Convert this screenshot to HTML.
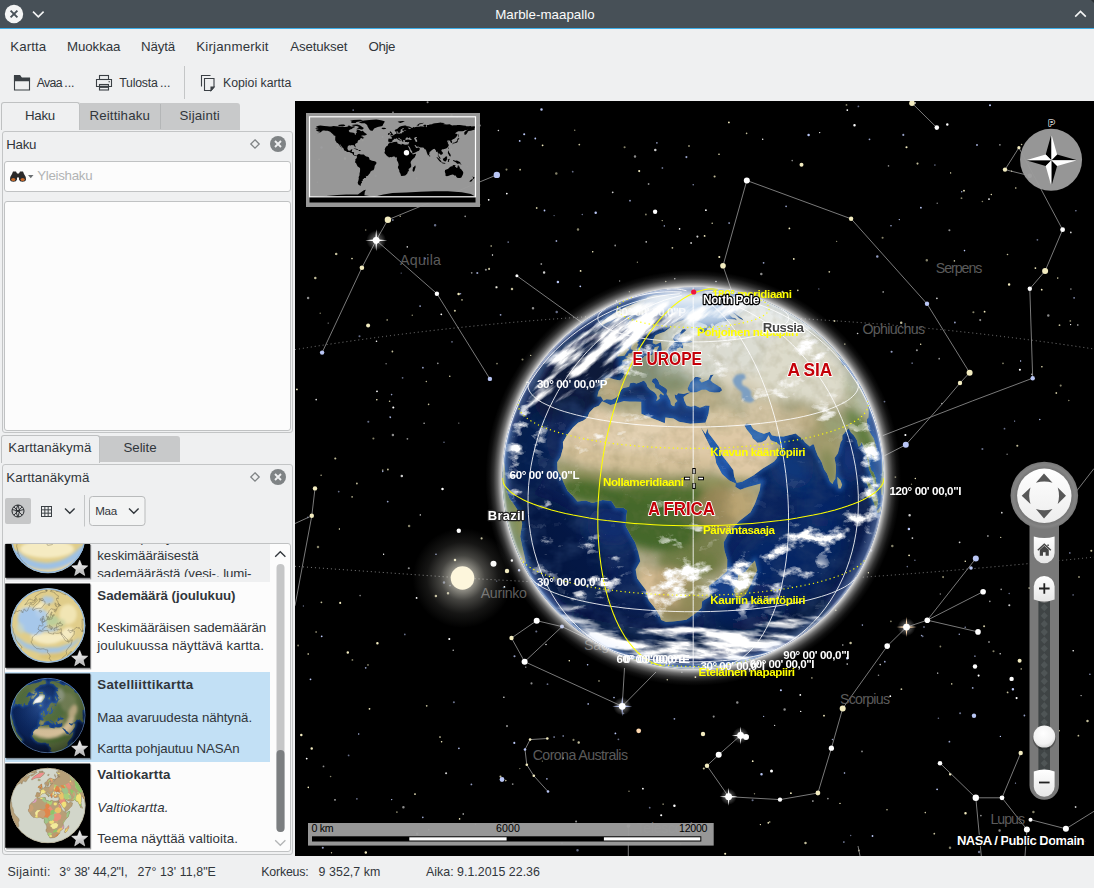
<!DOCTYPE html>
<html><head><meta charset="utf-8"><title>Marble-maapallo</title>
<style>
html,body{margin:0;padding:0}
body{width:1094px;height:888px;position:relative;overflow:hidden;background:#eff0f1;font-family:"Liberation Sans",sans-serif}
.t{position:absolute;white-space:pre;line-height:1;font-family:"Liberation Sans",sans-serif}
svg{display:block}
svg text{font-family:"Liberation Sans",sans-serif}
</style></head><body>
<div style="position:absolute;left:0;top:0;width:1094px;height:28px;background:#475057"></div>
<div style="position:absolute;left:0;top:28px;width:1094px;height:1px;background:#3daee9"></div>
<svg style="position:absolute;left:0;top:0" width="1094" height="29" viewBox="0 0 1094 29">
<circle cx="14" cy="14" r="9.2" fill="#f4f5f5"/>
<path d="M10.6 10.6 L17.4 17.4 M17.4 10.6 L10.6 17.4" stroke="#475057" stroke-width="1.9" fill="none"/>
<path d="M33 11.6 L38.3 16.8 L43.6 11.6" stroke="#f4f5f5" stroke-width="1.6" fill="none"/>
<path d="M1075.2 16.6 L1080.5 11.4 L1085.8 16.6" stroke="#f4f5f5" stroke-width="1.6" fill="none"/>
<path d="M1091 0 L1094 0 L1094 3 Z" fill="#2b3035"/>
</svg>
<span class="t" style="left:495.20px;top:7.54px;font-size:13.3px;color:#fcfcfc;letter-spacing:0.029px;">Marble-maapallo</span>
<span class="t" style="left:10.30px;top:39.74px;font-size:13.3px;color:#31363b;letter-spacing:0.086px;">Kartta</span>
<span class="t" style="left:67.00px;top:39.74px;font-size:13.3px;color:#31363b;letter-spacing:-0.081px;">Muokkaa</span>
<span class="t" style="left:141.00px;top:39.74px;font-size:13.3px;color:#31363b;letter-spacing:-0.149px;">Näytä</span>
<span class="t" style="left:196.20px;top:39.74px;font-size:13.3px;color:#31363b;letter-spacing:0.199px;">Kirjanmerkit</span>
<span class="t" style="left:290.30px;top:39.74px;font-size:13.3px;color:#31363b;letter-spacing:-0.145px;">Asetukset</span>
<span class="t" style="left:368.40px;top:39.74px;font-size:13.3px;color:#31363b;letter-spacing:-0.349px;">Ohje</span>
<svg style="position:absolute;left:0;top:60px" width="300" height="42" viewBox="0 60 300 42">
<g fill="none" stroke="#3b4045" stroke-width="1.1">
<path d="M14.5 76.5 V90 H29.5 V78.6 H21.2 L19.5 76.5 Z M14.5 76.5" />
<path d="M14.5 75.5 H19.8 L21.5 78 H29.5 V80.6 H14.5 Z" fill="#3b4045"/>
</g>
<g fill="none" stroke="#3b4045" stroke-width="1.1">
<rect x="99.5" y="75.5" width="9" height="4"/>
<path d="M99.5 86.5 H96.5 V79.5 H111.5 V86.5 H108.5"/>
<rect x="99.5" y="84.5" width="9" height="5.5"/>
<path d="M99.5 86.8 H108.5" stroke-width="2.2"/>
<path d="M108.5 81.8 H110" />
</g>
<path d="M184.5 66 V99" stroke="#c4c6c7" stroke-width="1"/>
<g fill="none" stroke="#3b4045" stroke-width="1.1">
<path d="M201.5 86.5 V75.5 H210.5"/>
<path d="M204.5 78.5 H214 V87 L211 90.5 H204.5 Z"/>
<path d="M214 87 H211 V90.5 Z" fill="#3b4045"/>
</g>
</svg>
<span class="t" style="left:36.80px;top:76.79px;font-size:12.3px;color:#31363b;letter-spacing:-0.704px;">Avaa</span>
<span class="t" style="left:64.20px;top:76.79px;font-size:12.3px;color:#31363b;letter-spacing:0.050px;">...</span>
<span class="t" style="left:119.30px;top:76.79px;font-size:12.3px;color:#31363b;letter-spacing:-0.240px;">Tulosta</span>
<span class="t" style="left:160.00px;top:76.79px;font-size:12.3px;color:#31363b;letter-spacing:0.050px;">...</span>
<span class="t" style="left:223.00px;top:76.79px;font-size:12.3px;color:#31363b;letter-spacing:-0.006px;">Kopioi kartta</span>
<div style="position:absolute;left:80px;top:103px;width:160px;height:26.5px;background:#c8c9ca;border-radius:0 3px 0 0"></div>
<div style="position:absolute;left:160px;top:104px;width:1px;height:25px;background:#b4b6b7"></div>
<div style="position:absolute;left:0.5px;top:102px;width:79px;height:28px;background:#eff0f1;border:1px solid #bfc1c2;border-bottom:none;border-radius:3px 3px 0 0;box-sizing:border-box"></div>
<span class="t" style="left:25.00px;top:109.04px;font-size:13.3px;color:#31363b;letter-spacing:-0.262px;">Haku</span>
<span class="t" style="left:89.50px;top:109.04px;font-size:13.3px;color:#31363b;letter-spacing:0.136px;">Reittihaku</span>
<span class="t" style="left:179.50px;top:109.04px;font-size:13.3px;color:#31363b;letter-spacing:0.165px;">Sijainti</span>
<div style="position:absolute;left:1.5px;top:131px;width:291px;height:302px;border:1px solid #c3c5c6;border-radius:3px;box-sizing:border-box"></div>
<span class="t" style="left:6.20px;top:137.94px;font-size:13.3px;color:#31363b;letter-spacing:-0.237px;">Haku</span>
<svg style="position:absolute;left:245px;top:134px" width="46" height="20" viewBox="245 134 46 20">
<path d="M255 139.8 L259.200 144 L255 148.2 L250.800 144 Z" fill="none" stroke="#7f8385" stroke-width="1.300"/>
<circle cx="278" cy="144" r="8" fill="#7f8385"/>
<path d="M275 141 L281 147 M281 141 L275 147" stroke="#eff0f1" stroke-width="1.900" fill="none"/>
</svg>
<div style="position:absolute;left:3.5px;top:161px;width:287px;height:30.5px;background:#fcfcfc;border:1px solid #c0c2c3;border-radius:3px;box-sizing:border-box"></div>
<svg style="position:absolute;left:8px;top:168px" width="28" height="16" viewBox="8 168 28 16">
<g fill="#2a2a2a"><path d="M10 179.5 q0 -3 2 -5.5 l1 -2.5 h3 l1 2 v6 q-0.5 2.2 -3.5 2.2 q-3.2 0 -3.5 -2.2z"/>
<path d="M26 179.5 q0 -3 -2 -5.5 l-1 -2.5 h-3 l-1 2 v6 q0.5 2.2 3.500 2.2 q3.2 0 3.500 -2.2z"/>
<rect x="16.500" y="173.500" width="3" height="4"/></g>
<ellipse cx="13.3" cy="179.600" rx="2.100" ry="1.500" fill="#c96a2a"/><ellipse cx="22.700" cy="179.600" rx="2.100" ry="1.500" fill="#c96a2a"/>
<path d="M28 175 h5.500 l-2.750 3.300z" fill="#6a6e71"/>
</svg>
<span class="t" style="left:37.20px;top:169.34px;font-size:13.3px;color:#b1b3b4;letter-spacing:-0.286px;">Yleishaku</span>
<div style="position:absolute;left:3.5px;top:200.5px;width:287px;height:230px;background:#fcfcfc;border:1px solid #c0c2c3;border-radius:3px;box-sizing:border-box"></div>
<div style="position:absolute;left:99px;top:435.700px;width:81px;height:26.500px;background:#c8c9ca;border-radius:0 3px 0 0"></div>
<div style="position:absolute;left:0.5px;top:434.700px;width:99px;height:28px;background:#eff0f1;border:1px solid #bfc1c2;border-bottom:none;border-radius:3px 3px 0 0;box-sizing:border-box"></div>
<span class="t" style="left:8.30px;top:441.44px;font-size:13.3px;color:#31363b;letter-spacing:0.095px;">Karttanäkymä</span>
<span class="t" style="left:123.50px;top:441.44px;font-size:13.3px;color:#31363b;letter-spacing:-0.045px;">Selite</span>
<div style="position:absolute;left:1.5px;top:464px;width:291px;height:391px;border:1px solid #c3c5c6;border-radius:3px;box-sizing:border-box"></div>
<span class="t" style="left:6.20px;top:470.54px;font-size:13.3px;color:#31363b;letter-spacing:0.104px;">Karttanäkymä</span>
<svg style="position:absolute;left:245px;top:467px" width="46" height="20" viewBox="245 467 46 20">
<path d="M255 472.8 L259.200 477 L255 481.2 L250.800 477 Z" fill="none" stroke="#7f8385" stroke-width="1.300"/>
<circle cx="278" cy="477" r="8" fill="#7f8385"/>
<path d="M275 474 L281 480 M281 474 L275 480" stroke="#eff0f1" stroke-width="1.900" fill="none"/>
</svg>
<div style="position:absolute;left:5px;top:498px;width:26px;height:26px;background:#c6c7c8;border-radius:2px"></div>
<svg style="position:absolute;left:0;top:490px" width="160" height="40" viewBox="0 490 160 40">
<g fill="none" stroke="#26292c" stroke-width="1">
<circle cx="18" cy="511" r="6"/>
<path d="M13.800 506.800 L22.200 515.200 M22.200 506.800 L13.800 515.200 M12.200 509.500 Q18 512.500 23.800 509.500 M18 505 Q21 511 18 517 M18 505 Q14.500 511 18 517" stroke-width="0.9"/>
</g>
<g fill="none" stroke="#3b4045" stroke-width="1">
<rect x="41.500" y="506.500" width="10" height="10"/>
<path d="M44.830 506.500 V516.500 M48.170 506.500 V516.500 M41.500 509.830 H51.500 M41.500 513.170 H51.500"/>
</g>
<path d="M65 508.500 L69.800 513.300 L74.600 508.500" stroke="#31363b" stroke-width="1.400" fill="none"/>
<path d="M84.500 495 V526.500" stroke="#c4c6c7" stroke-width="1"/>
<rect x="89.500" y="496.500" width="55.500" height="29" rx="3" fill="#f3f4f4" stroke="#b9bbbc"/>
<path d="M129 508.500 L133.800 513.300 L138.600 508.500" stroke="#31363b" stroke-width="1.400" fill="none"/>
</svg>
<span class="t" style="left:95.30px;top:504.78px;font-size:11.6px;color:#31363b;letter-spacing:-0.356px;">Maa</span>
<div style="position:absolute;left:3.5px;top:543px;width:287px;height:309px;background:#fcfcfc;border:1px solid #c0c2c3;border-radius:3px;box-sizing:border-box"></div>
<div style="position:absolute;left:4.5px;top:544px;width:265.5px;height:38px;background:#eff0f1"></div>
<div style="position:absolute;left:4.5px;top:672px;width:265.5px;height:90px;background:#c2e0f5"></div>
<div style="position:absolute;left:90px;top:544px;width:180px;height:33.2px;overflow:hidden">
<span class="t" style="left:7.30px;top:-13.06px;font-size:13.3px;color:#31363b;letter-spacing:0.583px;">sateen) näyttävä kartta</span>
<span class="t" style="left:7.30px;top:4.94px;font-size:13.3px;color:#31363b;letter-spacing:-0.097px;">keskimääräisestä</span>
<span class="t" style="left:7.30px;top:23.14px;font-size:13.3px;color:#31363b;letter-spacing:-0.096px;">sademäärästä (vesi-, lumi-</span>
</div>
<span class="t" style="left:97.30px;top:588.94px;font-size:13.3px;color:#31363b;letter-spacing:-0.037px;font-weight:bold;">Sademäärä (joulukuu)</span>
<span class="t" style="left:97.30px;top:620.94px;font-size:13.3px;color:#31363b;letter-spacing:-0.142px;">Keskimääräisen sademäärän</span>
<span class="t" style="left:97.30px;top:639.04px;font-size:13.3px;color:#31363b;letter-spacing:0.065px;">joulukuussa näyttävä kartta.</span>
<span class="t" style="left:97.30px;top:678.24px;font-size:13.3px;color:#31363b;letter-spacing:0.267px;font-weight:bold;">Satelliittikartta</span>
<span class="t" style="left:97.30px;top:710.94px;font-size:13.3px;color:#31363b;letter-spacing:-0.116px;">Maa avaruudesta nähtynä.</span>
<span class="t" style="left:97.30px;top:741.74px;font-size:13.3px;color:#31363b;letter-spacing:-0.124px;">Kartta pohjautuu NASAn</span>
<span class="t" style="left:97.30px;top:768.34px;font-size:13.3px;color:#31363b;letter-spacing:0.125px;font-weight:bold;">Valtiokartta</span>
<span class="t" style="left:97.30px;top:800.94px;font-size:13.3px;color:#31363b;letter-spacing:0.113px;font-style:italic;">Valtiokartta.</span>
<span class="t" style="left:97.30px;top:831.74px;font-size:13.3px;color:#31363b;letter-spacing:0.040px;">Teema näyttää valtioita.</span>
<svg style="position:absolute;left:272px;top:545px" width="18" height="306" viewBox="272 545 18 306">
<path d="M275.200 556.800 L280.300 551.700 L285.400 556.800" stroke="#31363b" stroke-width="1.300" fill="none"/>
<rect x="276.500" y="564" width="8" height="268" rx="4" fill="#c5c6c7"/>
<rect x="276.500" y="750" width="8" height="82" rx="4" fill="#7b7e80"/>
<path d="M275.200 840.200 L280.300 845.300 L285.400 840.200" stroke="#b3b5b6" stroke-width="1.300" fill="none"/>
</svg>
<span class="t" style="left:7.40px;top:865.90px;font-size:12.4px;color:#31363b;letter-spacing:0.403px;">Sijainti:</span>
<span class="t" style="left:59.30px;top:865.90px;font-size:12.4px;color:#31363b;letter-spacing:-0.152px;">3° 38' 44,2"I,</span>
<span class="t" style="left:137.50px;top:865.90px;font-size:12.4px;color:#31363b;letter-spacing:0.058px;">27° 13' 11,8"E</span>
<span class="t" style="left:261.30px;top:865.90px;font-size:12.4px;color:#31363b;letter-spacing:-0.217px;">Korkeus:</span>
<span class="t" style="left:318.50px;top:865.90px;font-size:12.4px;color:#31363b;letter-spacing:0.065px;">9 352,7 km</span>
<span class="t" style="left:426.00px;top:865.90px;font-size:12.4px;color:#31363b;letter-spacing:0.012px;">Aika: 9.1.2015 22.36</span>
<svg style="position:absolute;left:0;top:544px" width="100" height="308" viewBox="0 544 100 308">
<defs><linearGradient id="starg" x1="0" y1="0" x2="0.3" y2="1"><stop offset="0" stop-color="#f2f2f2"/><stop offset="0.55" stop-color="#dcdcdc"/><stop offset="1" stop-color="#b4b4b4"/></linearGradient>
<filter id="tblur" x="-30%" y="-30%" width="160%" height="160%"><feGaussianBlur stdDeviation="1.700"/></filter>
<filter id="tblur1" x="-30%" y="-30%" width="160%" height="160%"><feGaussianBlur stdDeviation="0.9"/></filter>
<radialGradient id="tshade" cx="0.42" cy="0.36" r="0.75"><stop offset="0" stop-color="#fff" stop-opacity="0.12"/><stop offset="0.6" stop-color="#000" stop-opacity="0"/><stop offset="1" stop-color="#000" stop-opacity="0.55"/></radialGradient>
<radialGradient id="tocean" cx="0.45" cy="0.4" r="0.7"><stop offset="0" stop-color="#103a84"/><stop offset="0.6" stop-color="#0a2256"/><stop offset="1" stop-color="#040b20"/></radialGradient>
</defs>
<rect x="6.200" y="545" width="85" height="34.399999999999956" fill="#4a4d50" opacity="0.55"/>
<rect x="5.200" y="544" width="85" height="33.799999999999955" fill="#000"/>
<rect x="6.200" y="584.5" width="85" height="84.89999999999995" fill="#4a4d50" opacity="0.55"/>
<rect x="5.200" y="583.5" width="85" height="84.29999999999995" fill="#000"/>
<rect x="6.200" y="674.5" width="85" height="84.99999999999997" fill="#4a4d50" opacity="0.55"/>
<rect x="5.200" y="673.5" width="85" height="84.39999999999998" fill="#000"/>
<rect x="6.200" y="764.5" width="85" height="84.89999999999995" fill="#4a4d50" opacity="0.55"/>
<rect x="5.200" y="763.5" width="85" height="84.29999999999995" fill="#000"/>
<clipPath id="t1clip"><rect x="5.200" y="544" width="85" height="33.800"/></clipPath><g clip-path="url(#t1clip)">
<clipPath id="p1c"><circle cx="48" cy="535.8" r="37.5"/></clipPath>
<g clip-path="url(#p1c)">
<circle cx="48" cy="535.8" r="37.5" fill="#e0cd8a"/>
<g filter="url(#tblur)">
<ellipse cx="47" cy="549" rx="27" ry="9" fill="#f5ebc2"/><path d="M14 552 Q30 568 50 566 Q70 564 84 548" fill="none" stroke="#9dc1e6" stroke-width="6.500"/><path d="M22 566 Q48 580 76 562" fill="none" stroke="#ead9a0" stroke-width="3"/>
</g>
<path d="M34.7 505.8 L36.5 505.8 L39.2 504.8 L42.8 504.4 L43.1 505.8 L45.2 506.1 L48.0 506.7 L48.0 505.9 L49.7 506.0 L50.8 506.5 L53.0 506.8 L54.8 506.8 L55.9 506.9 L56.4 507.7 L56.1 508.4 L55.1 507.4 L56.1 508.7 L57.2 510.2 L58.2 511.7 L58.6 512.9 L59.8 514.7 L61.2 515.9 L62.4 516.7 L62.4 517.2 L63.3 517.9 L64.7 517.7 L67.0 517.8 L66.9 518.8 L66.1 521.0 L65.3 522.3 L63.3 523.5 L62.0 524.5 L61.1 525.6 L60.3 527.1 L60.4 528.7 L60.9 530.7 L60.7 533.3 L59.1 534.8 L57.1 536.2 L57.2 538.8 L55.6 539.9 L55.3 541.6 L53.9 543.1 L52.1 544.6 L50.7 544.9 L48.0 545.4 L47.1 544.9 L46.9 543.6 L46.0 541.4 L45.1 539.8 L44.7 537.2 L43.0 534.6 L42.8 532.7 L43.8 530.7 L43.5 528.7 L42.9 526.8 L42.1 525.6 L41.0 523.8 L41.2 522.0 L41.3 520.9 L40.5 520.5 L39.0 520.7 L38.0 519.7 L36.2 520.0 L34.0 521.0 L32.5 521.0 L30.7 521.8 L29.6 521.0 L28.6 520.7 L27.7 519.7 L26.9 518.8 L26.1 518.1 L25.9 517.0 L26.6 515.9 L27.1 514.3 L26.9 513.6 L27.8 512.2 L28.9 510.9 L29.9 509.9 L31.1 509.2 L31.9 508.5 L32.2 507.9 L33.0 507.0 L34.0 506.5Z M33.5 505.6 L33.6 505.1 L34.5 504.0 L34.7 503.5 L35.3 503.3 L36.7 503.1 L37.9 502.9 L38.3 502.6 L38.6 502.1 L38.3 501.9 L37.6 501.7 L38.3 501.5 L38.9 501.5 L39.2 501.2 L39.8 501.2 L40.5 500.8 L41.4 500.6 L41.9 500.3 L42.2 500.1 L43.0 500.0 L43.6 499.9 L43.7 499.6 L43.8 499.4 L44.7 499.3 L44.5 499.5 L44.2 499.7 L44.6 499.8 L45.2 499.7 L45.8 499.8 L46.7 499.7 L47.4 499.6 L47.9 499.7 L48.4 499.5 L48.4 499.3 L48.9 499.2 L49.5 499.3 L49.5 499.1 L49.2 499.0 L50.0 499.0 L50.6 499.0 L51.3 499.0 L50.7 498.9 L49.9 498.9 L49.0 498.9 L48.4 498.8 L48.4 498.6 L49.3 498.5 L49.4 498.4 L48.9 498.4 L48.5 498.4 L48.4 498.5 L47.4 498.6 L47.1 498.8 L47.6 498.9 L47.3 499.0 L46.8 499.2 L46.5 499.4 L45.9 499.5 L45.4 499.6 L45.4 499.4 L45.0 499.1 L44.8 499.0 L44.0 499.2 L43.3 499.3 L43.1 499.1 L43.4 498.9 L44.2 498.7 L45.1 498.6 L46.0 498.4 L46.7 498.3 L47.3 498.3 L48.0 498.3 L48.8 498.3 L49.3 498.3 L49.8 498.3 L50.4 498.4 L50.3 498.4 L51.0 498.4 L51.7 498.5 L53.0 498.6 L53.4 498.7 L52.7 498.6 L51.7 498.5 L51.3 498.5 L52.0 498.6 L52.7 498.7 L53.0 498.8 L53.5 498.8 L53.3 498.7 L53.6 498.7 L54.2 498.8 L53.8 498.7 L54.1 498.8 L54.5 498.9 L54.7 498.9 L55.5 499.0 L56.2 499.2 L56.7 499.3 L56.4 499.3 L57.2 499.5 L58.0 499.6 L58.5 499.8 L58.0 499.6 L57.4 499.5 L56.8 499.3 L56.5 499.3 L56.9 499.4 L57.8 499.6 L58.7 499.8 L59.6 500.1 L59.3 500.0 L58.0 499.7 L57.4 499.5 L58.0 499.7 L57.5 499.5 L57.8 499.6 L57.2 499.4 L57.1 499.4 L56.4 499.2 L56.9 499.4 L57.3 499.5 L58.0 499.7 L58.9 499.9 L59.2 500.0 L59.3 500.1 L59.1 500.0 L59.8 500.2 L60.7 500.5 L60.2 500.3 L59.8 500.2 L59.0 500.0 L58.7 499.9 L58.6 499.8 L57.7 499.6 L58.2 499.7 L57.3 499.5 L56.1 499.2 L56.3 499.2 L54.6 498.9 L54.0 498.8 L55.4 499.0 L56.5 499.3 L56.6 499.3 L58.4 499.8 L61.2 500.7 L62.8 501.3 L64.5 502.1 L65.9 502.8 L66.9 503.4 L68.5 504.4 L70.5 505.8 L69.4 505.0 L67.2 503.6 L65.9 502.9 L63.7 501.7 L61.7 500.9 L62.9 501.4 L64.5 502.1 L65.5 502.6 L66.2 503.0 L66.9 503.4 L67.6 503.8 L69.5 505.1 L70.8 506.0 L71.0 506.2 L71.4 506.5 L73.0 507.8 L74.8 509.5 L76.4 511.3 L77.3 512.4 L77.4 512.5 L78.1 513.4 L78.5 514.0 L79.5 515.5 L80.3 516.7 L80.5 517.1 L79.7 515.8 L79.3 515.1 L78.6 514.1 L78.4 513.8 L78.6 514.2 L77.9 513.2 L78.4 513.9 L78.6 514.1 L79.1 514.9 L79.3 515.2 L79.7 515.7 L80.0 516.3 L80.8 517.7 L81.5 518.9 L81.8 519.6 L82.2 520.5 L82.8 521.8 L83.0 522.5 L83.3 523.0 L83.2 523.0 L83.2 522.7 L83.0 522.4 L83.1 522.7 L83.4 523.4 L83.9 524.8 L84.3 526.2 L84.7 528.0 L84.8 528.6 L84.8 528.7 L84.9 529.3 L84.8 528.6 L84.6 527.9 L84.4 526.8 L84.1 526.0 L83.9 525.5 L84.2 526.8 L84.4 527.8 L84.7 529.4 L84.9 530.0 L85.2 531.7 L85.3 533.6 L85.2 533.5 L85.0 532.2 L84.8 530.3 L84.4 528.4 L84.1 526.9 L83.8 525.4 L83.3 523.8 L83.0 522.9 L82.9 523.0 L82.7 522.6 L82.4 521.7 L81.8 520.4 L81.3 519.5 L80.9 518.7 L80.7 518.5 L80.5 518.4 L80.2 518.4 L80.3 518.9 L80.1 519.0 L79.8 520.0 L79.4 520.2 L79.7 521.5 L79.8 522.5 L79.7 523.1 L79.7 523.6 L79.5 523.7 L79.3 524.0 L78.9 523.3 L78.4 521.7 L77.9 520.7 L77.3 519.2 L76.6 517.9 L76.2 516.7 L75.8 515.9 L75.6 515.7 L75.2 515.8 L74.3 514.7 L73.8 514.0 L73.1 513.3 L72.6 512.7 L71.6 512.4 L70.5 512.2 L69.2 511.6 L68.4 511.2 L68.0 510.6 L67.0 510.5 L65.9 509.9 L65.0 509.3 L64.3 508.5 L63.6 508.3 L63.3 508.5 L63.8 509.1 L64.8 510.1 L65.0 510.6 L65.5 510.9 L65.9 511.4 L66.6 511.5 L67.4 511.5 L67.8 511.0 L68.3 511.8 L69.4 512.5 L70.2 513.3 L69.9 514.1 L69.7 514.7 L69.2 515.1 L68.6 515.2 L67.2 515.5 L65.6 516.1 L63.6 516.6 L62.6 516.6 L62.1 515.4 L61.9 514.4 L60.7 513.0 L59.5 511.7 L58.9 510.5 L58.0 509.6 L56.7 508.3 L56.4 507.7 L55.9 506.9 L56.2 506.3 L56.3 505.7 L56.3 505.2 L56.4 504.9 L55.6 504.8 L54.6 504.9 L53.5 504.6 L52.8 504.7 L51.9 504.5 L51.3 503.9 L51.1 503.5 L51.7 503.3 L52.4 503.1 L53.5 503.1 L54.5 503.0 L55.3 503.0 L56.0 503.3 L57.0 503.5 L57.9 503.6 L58.4 503.5 L58.0 503.2 L57.2 502.8 L56.4 502.4 L55.9 502.2 L56.1 501.9 L56.4 501.7 L55.7 501.7 L55.5 502.1 L55.1 502.1 L54.3 502.2 L53.7 501.9 L54.1 501.8 L53.4 501.6 L52.8 501.6 L52.4 501.9 L52.1 502.0 L51.9 502.3 L51.7 502.6 L52.0 502.9 L52.4 503.1 L51.7 503.1 L51.1 503.2 L50.0 503.1 L49.8 503.3 L49.3 503.2 L49.5 503.6 L50.1 504.0 L49.6 504.2 L49.6 504.5 L49.2 504.5 L48.8 504.4 L48.6 503.9 L48.1 503.5 L47.7 503.2 L47.8 502.8 L47.3 502.5 L46.1 502.3 L45.7 501.9 L45.2 501.7 L44.5 501.8 L44.4 502.1 L45.0 502.3 L45.3 502.7 L46.0 502.8 L47.2 503.2 L47.1 503.4 L46.5 503.2 L46.3 503.5 L46.5 503.7 L46.0 504.0 L45.8 504.0 L46.0 503.7 L45.6 503.3 L45.1 503.1 L44.3 502.9 L43.7 502.7 L43.4 502.4 L42.8 502.2 L42.1 502.4 L41.4 502.6 L40.7 502.6 L40.0 502.8 L39.9 503.2 L38.7 503.5 L38.0 504.1 L38.1 504.3 L37.5 504.8 L36.7 505.2 L35.5 505.4 L34.9 505.7 L34.6 505.6 L34.3 505.4Z M37.6 501.3 L38.4 501.2 L39.5 500.9 L40.5 500.7 L40.9 500.4 L40.4 500.4 L40.5 500.1 L40.2 500.0 L40.4 499.7 L40.0 499.7 L40.4 499.6 L39.7 499.7 L39.1 499.9 L39.0 500.1 L39.0 500.3 L39.5 500.2 L39.3 500.5 L38.7 500.6 L38.6 500.7 L38.1 500.9 L38.8 500.9 L38.2 501.0Z M37.9 500.9 L38.3 500.5 L38.7 500.3 L38.1 500.4 L37.0 500.7 L36.9 500.9 L36.4 501.2 L36.5 501.3Z M37.0 499.9 L37.2 499.9 L37.9 499.7 L38.7 499.5 L39.3 499.3 L38.3 499.6 L37.4 499.8Z M66.0 532.2 L66.3 534.6 L65.6 535.8 L65.0 537.3 L63.8 539.7 L62.6 540.5 L61.9 539.8 L61.8 538.1 L62.5 536.5 L62.7 534.6 L64.1 534.3 L65.1 533.0Z M80.0 523.5 L80.5 524.5 L80.8 525.5 L80.6 525.9 L80.3 525.6 L80.1 524.5Z M10.7 532.2 L10.9 530.1 L11.1 528.9 L11.1 529.3 L11.1 528.9 L11.3 528.1 L11.5 527.5 L11.5 528.4 L11.7 529.2 L12.1 528.7 L12.5 529.0 L12.8 530.5 L12.8 531.4 L13.2 531.6 L14.2 531.8 L15.1 531.5 L16.1 531.4 L17.3 531.7 L17.7 533.4 L17.3 535.3 L16.8 537.2 L17.2 539.5 L17.5 541.8 L17.6 543.6 L16.9 544.6 L16.6 546.6 L17.2 548.2 L17.6 550.4 L18.2 552.5 L18.2 553.4 L17.6 553.3 L18.6 554.4 L19.3 555.6 L19.1 556.6 L20.0 557.6 L19.8 558.1 L20.7 558.7 L21.6 560.0 L22.2 561.0 L23.0 561.4 L24.2 562.7 L25.1 563.5 L26.4 564.4 L26.0 564.6 L25.0 564.2 L23.0 562.8 L21.1 560.9 L19.3 559.0 L18.1 557.6 L16.6 555.3 L15.2 553.2 L14.0 550.8 L12.8 547.9 L12.4 547.0 L12.2 546.5 L11.9 545.8 L11.6 544.7 L11.1 542.7 L11.0 542.0 L10.8 540.8 L10.7 539.6 L10.6 538.9 L10.5 537.6 L10.5 536.9 L10.5 535.0 L10.6 533.1Z" fill="none" stroke="#5a5340" stroke-width="0.45" opacity="0.8"/>
<circle cx="48" cy="535.8" r="36.8" fill="none" stroke="#8fb6e0" stroke-width="1.800" opacity="0.9"/>
</g>
</g>
<g transform="translate(79.7 568.2)"><path d="M0 -8 L2.2 -2.600 L8 -2.300 L3.500 1.500 L5 7.200 L0 4 L-5 7.200 L-3.500 1.500 L-8 -2.300 L-2.200 -2.600Z" fill="#000" opacity="0.45" transform="translate(0.8 1.2)"/><path d="M0 -8 L2.2 -2.600 L8 -2.300 L3.500 1.500 L5 7.200 L0 4 L-5 7.200 L-3.500 1.500 L-8 -2.300 L-2.200 -2.600Z" fill="url(#starg)" stroke="#f4f4f4" stroke-width="0.6"/></g>
<clipPath id="p2c"><circle cx="48" cy="625.5" r="37.5"/></clipPath>
<g clip-path="url(#p2c)">
<circle cx="48" cy="625.5" r="37.5" fill="#e0cd8a"/>
<g filter="url(#tblur)">
<path d="M65.1 635.7 L63.5 634.1 L59.7 633.4 L54.3 633.3 L48.0 633.3 L41.7 633.3 L36.3 633.4 L32.5 634.1 L30.9 635.7 L31.7 638.2 L35.1 641.0 L40.8 643.3 L48.0 644.2 L55.2 643.3 L60.9 641.0 L64.3 638.2Z" fill="#f5ebc2" opacity="1"/>
<path d="M73.6 630.1 L72.4 628.3 L70.4 627.3 L68.1 627.3 L65.6 628.1 L63.3 629.6 L61.5 631.8 L60.3 634.2 L60.2 636.7 L61.1 638.8 L63.1 640.2 L65.8 640.5 L68.8 639.6 L71.4 637.7 L73.2 635.2 L74.0 632.5Z" fill="#f5ebc2" opacity="1"/>
<path d="M42.7 607.6 L43.6 605.5 L44.2 603.7 L44.5 602.5 L44.3 601.9 L43.5 601.8 L42.0 602.1 L39.9 602.9 L37.7 604.0 L35.7 605.6 L34.6 607.5 L34.5 609.4 L35.6 610.9 L37.4 611.5 L39.5 611.0 L41.4 609.6Z" fill="#f5ebc2" opacity="1"/>
<path d="M72.1 605.2 L69.1 604.2 L66.2 604.4 L63.7 605.4 L61.7 607.1 L60.4 609.4 L59.5 612.5 L59.3 616.2 L60.1 619.9 L62.3 623.0 L66.2 624.6 L70.7 624.0 L74.6 621.2 L76.7 616.7 L76.6 611.8 L74.8 607.8Z" fill="#f1e5b4" opacity="1"/>
<path d="M53.7 610.0 L52.9 608.8 L51.9 607.9 L50.8 607.3 L49.8 607.2 L48.9 607.6 L48.0 608.3 L47.4 609.5 L47.0 610.8 L47.2 612.2 L48.0 613.4 L49.4 614.2 L51.1 614.3 L52.6 613.8 L53.6 612.7 L54.0 611.4Z" fill="#ecdfaa" opacity="0.9"/>
<path d="M27.6 614.2 L29.8 611.1 L31.4 608.0 L32.3 605.4 L32.4 603.4 L31.5 602.0 L29.7 601.1 L27.2 600.9 L24.4 601.6 L21.6 603.6 L19.2 606.7 L17.7 610.5 L17.7 614.1 L19.3 616.6 L21.9 617.5 L24.8 616.6Z" fill="#e9da9e" opacity="0.9"/>
<path d="M69.0 652.3 L68.2 651.6 L65.3 651.8 L60.5 652.5 L54.5 653.4 L48.3 654.1 L43.0 654.5 L39.6 655.1 L38.5 656.1 L39.8 657.3 L43.2 658.6 L48.3 659.3 L54.1 659.1 L59.8 657.9 L64.6 655.9 L67.8 653.8Z" fill="#d9c273" opacity="0.9"/>
<path d="M58.8 619.0 L57.6 617.3 L55.8 616.2 L53.5 615.6 L51.3 615.6 L49.0 616.2 L47.0 617.3 L45.5 618.8 L44.8 620.8 L45.2 622.8 L46.8 624.6 L49.4 625.7 L52.7 625.9 L55.8 624.9 L58.0 623.2 L59.0 621.1Z" fill="#b9cf9c" opacity="0.95"/>
<path d="M65.0 621.1 L64.1 619.9 L62.8 619.2 L61.3 619.0 L59.8 619.3 L58.5 620.1 L57.5 621.4 L57.0 622.8 L57.1 624.4 L57.8 625.7 L59.1 626.7 L60.8 627.0 L62.6 626.7 L64.1 625.7 L65.1 624.2 L65.4 622.6Z" fill="#c9d3a0" opacity="0.8"/>
<path d="M47.1 625.5 L46.0 620.4 L43.4 615.9 L40.5 612.4 L37.4 609.8 L33.9 608.2 L29.9 607.3 L25.7 607.5 L21.7 609.4 L18.7 613.5 L17.7 619.6 L19.8 626.5 L25.3 632.2 L32.9 634.9 L40.4 634.0 L45.4 630.4Z" fill="#a6c7ea" opacity="1"/>
<path d="M48.0 614.5 L47.5 612.9 L46.4 611.4 L44.8 610.3 L43.0 609.6 L41.0 609.2 L39.1 609.3 L37.2 609.9 L35.8 611.0 L35.1 612.7 L35.6 614.7 L37.3 616.6 L39.9 617.9 L43.0 618.2 L45.7 617.6 L47.4 616.2Z" fill="#b2cfea" opacity="0.95"/>
<path d="M80.5 637.8 L78.5 638.8 L71.7 643.0 L58.7 647.2 L41.6 647.7 L25.7 643.1 L15.9 636.0 L11.9 630.5 L11.1 629.2 L11.8 632.6 L15.7 640.0 L25.6 648.3 L41.5 653.4 L58.8 652.5 L71.8 647.0 L78.6 641.0Z" fill="#9fc3e6" opacity="0.95"/>
<path d="M59.5 628.4 L58.7 627.8 L56.7 627.6 L53.8 627.7 L50.5 627.9 L47.1 628.1 L44.2 628.4 L42.1 628.9 L41.4 629.5 L41.9 630.4 L43.9 631.3 L47.0 632.0 L50.7 632.1 L54.3 631.5 L57.3 630.5 L59.1 629.4Z" fill="#a9c9ea" opacity="0.85"/>
<path d="M48.5 597.2 L48.3 598.4 L48.3 598.9 L48.3 599.1 L47.9 599.2 L47.7 599.0 L47.8 598.8 L47.9 598.4 L48.5 597.2 L47.7 596.1 L44.0 596.3 L41.3 600.4 L46.8 604.5 L53.8 601.9 L53.2 597.4 L49.8 596.3Z" fill="#a9c9ea" opacity="0.9"/>
<path d="M24.0 631.3 L24.3 629.4 L24.1 627.3 L23.3 625.3 L22.2 623.8 L20.9 622.9 L19.5 622.7 L18.2 623.2 L17.2 624.5 L16.7 626.3 L16.7 628.4 L17.4 630.6 L18.6 632.3 L20.2 633.3 L21.7 633.5 L23.1 632.8Z" fill="#c5d6cf" opacity="0.7"/>
</g>
<path d="M39.6 630.7 L41.6 631.5 L44.3 630.6 L48.0 630.5 L48.5 633.0 L50.8 633.6 L53.6 634.2 L53.5 633.1 L55.1 633.0 L56.3 633.4 L58.5 633.3 L60.2 632.7 L61.1 632.4 L61.7 633.4 L61.6 634.5 L60.5 633.5 L61.6 635.0 L62.7 636.6 L63.9 638.1 L64.3 639.3 L65.5 640.8 L66.9 641.4 L68.0 641.4 L68.0 642.0 L68.9 642.2 L70.1 641.1 L72.2 639.6 L72.1 640.7 L71.5 643.2 L70.8 644.9 L69.0 647.0 L67.9 648.4 L67.0 649.7 L66.2 651.1 L66.3 652.0 L66.7 653.0 L66.4 654.4 L64.8 655.8 L62.9 657.2 L62.7 658.1 L61.2 659.0 L60.8 659.6 L59.3 660.4 L57.4 661.2 L56.0 661.6 L53.3 662.1 L52.5 662.1 L52.4 661.8 L51.7 661.3 L50.9 660.9 L50.7 659.9 L49.2 658.9 L49.1 658.0 L50.2 656.9 L49.9 655.8 L49.4 654.6 L48.7 653.8 L47.5 652.5 L47.7 651.1 L47.8 650.2 L47.0 649.8 L45.4 649.9 L44.4 648.9 L42.5 648.8 L40.2 649.1 L38.6 648.7 L36.8 648.7 L35.6 647.6 L34.4 646.8 L33.3 645.4 L32.4 644.0 L31.5 642.9 L31.3 641.5 L32.0 640.7 L32.3 639.1 L32.1 638.1 L32.9 636.8 L34.0 635.6 L35.0 634.7 L36.2 634.4 L37.0 633.8 L37.2 632.9 L38.1 632.0 L39.0 631.6Z M38.2 629.6 L38.2 628.4 L38.9 626.7 L39.0 625.6 L39.6 625.4 L41.2 625.9 L42.4 626.1 L42.8 625.5 L42.9 624.5 L42.5 623.6 L41.7 622.8 L42.4 622.6 L43.0 622.7 L43.2 622.1 L43.9 622.3 L44.5 621.5 L45.4 621.2 L45.8 620.5 L46.0 620.0 L46.8 619.9 L47.5 619.6 L47.4 618.7 L47.4 617.7 L48.2 617.3 L48.1 618.3 L48.0 619.1 L48.4 619.6 L49.0 619.4 L49.6 619.7 L50.5 619.2 L51.2 618.9 L51.7 619.2 L52.1 618.6 L51.9 617.4 L52.3 616.9 L53.0 617.1 L52.9 616.4 L52.5 615.9 L53.2 615.5 L53.9 615.4 L54.5 615.0 L53.8 614.7 L53.1 615.0 L52.2 615.5 L51.6 615.1 L51.4 614.0 L52.0 612.4 L52.1 612.0 L51.6 611.9 L51.2 612.1 L51.2 612.9 L50.4 614.0 L50.3 615.1 L50.9 615.6 L50.7 616.3 L50.3 617.3 L50.2 618.1 L49.6 618.6 L49.1 618.6 L49.0 618.1 L48.4 616.7 L48.2 616.2 L47.4 617.0 L46.6 616.7 L46.4 615.7 L46.5 614.5 L47.1 613.9 L48.0 613.3 L48.7 612.1 L49.1 610.8 L49.6 610.1 L50.2 609.5 L50.9 608.9 L51.4 608.7 L51.9 608.6 L52.5 608.9 L52.4 609.3 L53.2 609.3 L53.9 609.3 L55.2 609.6 L55.7 610.2 L55.1 610.7 L54.2 610.7 L53.8 610.8 L54.6 611.6 L55.3 612.1 L55.6 611.7 L56.0 611.3 L55.7 610.7 L56.0 610.2 L56.5 610.2 L55.9 609.1 L56.2 608.8 L56.7 609.4 L56.8 608.9 L57.3 607.9 L58.0 607.4 L58.4 606.8 L58.0 606.4 L58.7 606.2 L59.4 606.0 L59.9 606.0 L59.3 605.4 L58.8 605.5 L58.0 604.9 L57.5 604.2 L57.8 603.8 L58.9 604.4 L59.9 605.2 L60.8 605.5 L60.4 605.0 L59.0 604.2 L58.2 603.6 L58.7 603.4 L58.0 602.6 L58.2 601.8 L57.5 601.4 L57.1 600.7 L56.9 600.0 L56.0 599.2 L56.4 599.0 L56.6 598.4 L57.1 598.3 L58.2 598.9 L58.3 598.4 L58.1 597.7 L57.6 597.0 L58.0 596.6 L58.6 596.2 L58.0 595.8 L57.2 595.1 L56.6 595.1 L56.0 594.4 L55.6 593.9 L55.4 593.5 L54.4 593.0 L54.5 592.7 L53.6 592.2 L52.4 592.0 L52.4 591.8 L51.0 591.6 L50.3 591.4 L50.8 590.4 L51.6 590.5 L51.2 590.1 L52.6 590.1 L54.4 590.1 L56.0 590.5 L57.0 590.5 L57.7 590.4 L58.3 590.4 L59.3 590.5 L60.9 590.9 L60.6 591.1 L59.7 591.3 L58.8 591.2 L57.2 591.1 L55.8 591.0 L56.9 591.3 L58.3 591.6 L59.1 591.7 L60.0 592.2 L61.3 593.0 L62.2 593.5 L64.3 594.4 L65.6 595.0 L65.3 594.3 L65.0 593.9 L66.2 594.1 L67.8 594.8 L69.8 595.9 L71.1 596.9 L71.7 597.6 L72.6 598.2 L73.5 599.1 L73.9 599.1 L74.6 599.5 L75.3 600.3 L75.6 600.7 L74.9 600.1 L74.9 600.4 L74.2 599.9 L74.2 600.1 L75.1 601.3 L74.4 600.7 L75.5 602.1 L75.9 602.6 L76.2 602.6 L75.6 601.4 L76.4 602.4 L77.0 603.1 L77.5 603.3 L77.8 603.4 L78.1 603.7 L78.7 604.4 L79.8 605.9 L80.5 607.1 L81.1 608.2 L81.7 609.5 L82.2 611.1 L82.4 611.6 L82.5 612.2 L82.9 613.4 L83.3 614.3 L83.6 614.7 L83.7 614.6 L84.1 615.6 L84.5 616.8 L84.7 617.8 L84.9 619.2 L84.8 618.7 L84.8 619.0 L84.6 618.8 L84.6 619.2 L84.5 619.4 L84.8 620.7 L85.0 621.5 L85.2 622.0 L85.2 621.7 L85.3 622.0 L85.4 622.9 L85.4 623.3 L85.4 623.6 L85.3 622.8 L85.1 622.5 L84.9 621.4 L84.5 620.2 L84.1 619.4 L83.9 619.1 L83.9 620.2 L83.8 620.6 L83.5 619.7 L83.1 619.3 L82.7 619.4 L82.3 618.9 L82.2 619.5 L82.2 620.4 L82.1 621.5 L82.2 622.3 L82.2 623.2 L82.2 625.7 L82.0 627.1 L82.3 628.1 L82.5 629.2 L82.5 630.0 L82.5 630.6 L82.4 631.1 L82.3 631.8 L82.0 631.8 L81.5 630.9 L81.1 630.5 L80.5 629.5 L79.9 628.9 L79.4 628.1 L79.1 627.4 L78.9 627.4 L78.6 628.2 L77.8 628.1 L77.3 627.6 L76.7 627.5 L76.2 627.3 L75.4 628.3 L74.6 629.2 L73.5 629.8 L72.8 630.0 L72.3 629.6 L71.5 630.5 L70.5 630.6 L69.6 630.4 L68.9 629.7 L68.3 629.9 L68.0 630.5 L68.6 631.1 L69.6 631.8 L69.8 632.3 L70.3 632.4 L70.7 632.7 L71.3 632.3 L72.0 631.5 L72.3 630.3 L72.8 631.1 L73.7 631.0 L74.5 631.2 L74.3 632.7 L74.2 633.7 L73.9 634.7 L73.4 635.3 L72.2 636.9 L70.8 638.8 L69.1 640.7 L68.2 641.2 L67.6 640.3 L67.4 639.4 L66.3 638.4 L65.0 637.4 L64.4 636.2 L63.5 635.4 L62.1 634.2 L61.7 633.4 L61.2 632.4 L61.3 631.3 L61.4 630.3 L61.3 629.3 L61.3 628.7 L60.5 628.9 L59.6 629.7 L58.6 629.5 L57.9 629.9 L57.0 629.9 L56.3 628.9 L56.1 628.2 L56.6 627.6 L57.2 627.0 L58.2 626.6 L59.1 625.8 L59.9 625.6 L60.6 625.8 L61.5 625.7 L62.4 625.3 L62.7 624.8 L62.3 624.2 L61.5 623.9 L60.7 623.6 L60.2 623.3 L60.2 622.4 L60.4 621.8 L59.8 622.1 L59.7 623.3 L59.4 623.6 L58.7 624.2 L58.1 623.8 L58.4 623.2 L57.7 623.2 L57.2 623.3 L56.9 624.2 L56.6 624.8 L56.5 625.5 L56.4 626.2 L56.7 626.7 L57.2 626.9 L56.5 627.3 L55.9 627.6 L54.9 627.7 L54.7 628.1 L54.3 628.0 L54.5 628.8 L55.1 629.3 L54.7 629.8 L54.8 630.5 L54.4 630.5 L54.0 630.3 L53.7 629.5 L53.1 628.8 L52.7 628.2 L52.6 627.3 L52.1 626.9 L50.8 626.4 L50.3 625.6 L49.7 625.1 L49.1 625.3 L49.1 626.0 L49.8 626.4 L50.2 627.3 L50.9 627.5 L52.2 628.4 L52.1 628.6 L51.5 628.3 L51.3 628.9 L51.6 629.3 L51.1 630.0 L50.9 630.0 L51.0 629.3 L50.6 628.6 L50.1 628.2 L49.2 627.8 L48.5 627.1 L48.1 626.5 L47.4 625.9 L46.8 626.3 L46.1 626.7 L45.4 626.5 L44.7 626.7 L44.7 627.5 L43.5 627.9 L42.8 628.8 L43.0 629.2 L42.5 630.0 L41.7 630.4 L40.5 630.2 L39.8 630.6 L39.5 630.2 L39.1 629.6Z M41.6 621.5 L42.4 621.6 L43.5 621.5 L44.4 621.3 L44.7 620.3 L44.2 620.1 L44.1 619.1 L43.7 618.2 L43.7 617.1 L43.3 616.9 L43.6 616.3 L42.9 616.2 L42.4 616.8 L42.4 617.8 L42.5 618.5 L43.1 618.6 L43.0 619.6 L42.4 619.6 L42.4 620.1 L41.9 620.5 L42.7 620.9 L42.1 621.0Z M41.7 620.2 L41.9 619.0 L42.2 618.6 L41.6 618.1 L40.5 618.6 L40.5 619.4 L40.0 619.9 L40.2 620.3Z M39.3 611.5 L39.3 610.5 L40.0 610.2 L40.9 610.6 L41.6 610.9 L41.7 611.7 L40.8 612.1 L39.9 612.2Z M32.6 610.1 L33.0 610.5 L35.9 608.7 L38.6 608.3 L41.2 608.3 L42.8 606.3 L44.0 604.9 L45.0 603.5 L45.0 602.3 L45.0 601.3 L44.4 601.1 L43.8 600.9 L42.7 600.5 L41.3 600.4 L40.3 600.2 L39.1 601.1 L39.4 602.0 L37.5 603.7 L35.9 604.9 L34.5 606.3 L33.3 607.9 L32.6 609.1Z M71.2 651.1 L71.4 652.0 L70.7 653.0 L70.1 654.0 L68.9 655.5 L67.7 656.4 L67.1 656.5 L67.1 656.0 L67.9 655.0 L68.2 654.1 L69.5 653.2 L70.4 652.0Z M82.7 629.9 L83.1 630.0 L83.4 630.4 L83.3 631.3 L83.0 631.7 L82.9 630.9Z M10.9 622.7 L11.3 622.7 L11.7 623.6 L11.6 624.5 L11.9 626.1 L12.6 627.9 L13.0 628.6 L13.1 630.6 L13.7 633.0 L14.5 634.4 L15.1 636.0 L15.5 638.1 L15.5 638.8 L16.2 640.0 L17.5 642.0 L18.7 643.3 L20.0 644.8 L21.5 646.5 L21.8 647.8 L21.3 648.3 L20.6 648.6 L20.9 649.7 L21.0 650.6 L20.9 650.9 L19.9 650.1 L19.3 649.6 L19.7 650.1 L19.8 650.2 L19.9 650.4 L19.5 649.9 L18.6 648.8 L19.7 650.1 L20.0 650.5 L19.2 649.5 L19.7 650.1 L19.1 649.4 L20.0 650.5 L20.3 650.8 L20.4 650.9 L21.3 651.9 L21.8 652.4 L22.4 652.9 L23.6 654.0 L22.6 653.0 L21.2 651.7 L19.3 649.7 L18.2 648.2 L17.1 646.7 L16.1 645.2 L15.4 644.1 L14.5 642.3 L13.8 641.0 L13.0 638.9 L12.7 638.1 L12.3 636.9 L11.5 634.2 L11.1 632.4 L10.7 629.7 L10.6 627.8 L10.5 626.9 L10.5 626.7 L10.5 625.6 L10.5 625.1 L10.5 625.4 L10.6 624.9 L10.8 623.4Z M11.0 622.3 L11.0 621.3 L11.0 620.2 L11.2 619.1 L11.5 618.1 L11.8 617.2 L12.2 615.5 L12.3 614.5 L12.7 613.8 L13.3 612.9 L13.6 611.6 L13.2 612.1 L13.5 610.9 L14.0 609.8 L15.0 607.9 L15.8 606.8 L16.4 606.2 L16.4 606.8 L15.8 608.5 L16.0 608.6 L15.7 610.0 L15.6 610.6 L14.9 611.9 L14.3 613.1 L14.1 614.0 L14.6 613.5 L15.7 611.5 L16.3 611.1 L16.9 611.3 L17.4 611.8 L18.1 611.0 L19.2 610.7 L19.7 610.3 L20.3 611.0 L20.6 611.2 L21.2 610.4 L22.1 611.0 L21.7 612.2 L23.1 612.6 L23.1 611.1 L24.0 610.2 L23.7 609.3 L24.7 609.1 L25.5 610.9 L26.9 611.2 L27.6 610.6 L28.0 609.4 L28.6 607.8 L30.1 606.0 L29.1 605.6 L30.1 604.5 L30.6 603.6 L30.7 602.4 L29.3 603.1 L28.5 603.2 L27.6 604.0 L26.2 604.0 L24.7 604.9 L25.4 603.8 L26.6 603.1 L27.5 601.4 L28.1 600.1 L29.3 599.4 L30.1 599.1 L31.1 599.4 L31.7 600.0 L32.9 600.1 L33.7 600.6 L34.6 600.5 L35.0 599.8 L34.4 599.5 L35.1 598.9 L36.5 598.2 L35.4 598.1 L35.0 597.7 L35.1 597.0 L35.7 596.3 L36.5 595.4 L37.3 595.0 L38.4 594.3 L39.5 593.9 L40.0 593.2 L40.7 592.8 L41.7 592.6 L43.3 592.2 L45.2 592.1 L45.8 591.8 L46.5 591.4 L47.2 591.1 L46.2 590.8 L45.8 590.7 L46.9 590.5 L47.5 590.4 L46.4 590.2 L45.5 590.3 L45.4 590.1 L46.4 589.9 L46.8 589.6 L46.2 589.3 L45.3 589.3 L45.3 589.2 L43.9 589.4 L43.6 589.2 L44.4 588.9 L45.7 588.6 L44.3 588.8 L43.1 589.2 L42.6 589.6 L42.1 589.9 L42.2 590.1 L41.1 590.3 L40.1 590.5 L38.9 590.9 L37.8 591.2 L36.6 591.5 L35.4 591.7 L34.3 591.9 L33.7 592.1 L32.6 592.5 L31.9 592.6 L30.7 593.2 L29.8 593.7 L30.2 593.3 L29.3 593.6 L28.3 593.9 L27.5 594.3 L26.1 595.1 L24.8 596.0 L23.7 597.0 L22.8 597.7 L21.5 598.9 L20.6 599.9 L19.4 601.2 L18.1 602.9 L18.0 603.0 L19.0 601.8 L20.5 600.0 L21.6 598.8 L21.1 599.4 L19.6 601.0 L18.7 602.1 L17.6 603.5 L16.8 604.7 L16.2 605.7 L15.6 606.7 L14.7 608.2 L13.7 610.3 L13.2 611.6 L12.9 612.4 L12.5 613.5 L12.0 615.1 L11.8 616.2 L11.5 617.5 L11.3 618.3 L11.1 619.5 L10.9 620.7 L10.8 621.9 L10.9 621.7 L10.8 623.0 L10.9 622.7Z M56.2 606.8 L55.5 605.4 L55.0 604.3 L55.2 602.8 L55.8 603.5 L56.1 605.3 L57.1 606.5Z M48.1 604.5 L48.7 604.0 L49.3 603.6 L49.9 603.8 L49.6 605.0 L49.1 605.8 L48.4 605.1Z M37.3 600.1 L37.1 600.7 L36.0 601.9 L33.9 603.9 L33.5 604.6 L31.6 605.0 L31.1 604.5 L31.7 603.3 L31.9 602.0 L33.1 602.3 L34.4 602.0 L35.2 600.9 L35.5 599.7 L36.6 599.0Z M39.4 598.6 L39.1 599.7 L40.5 599.7 L41.2 600.1 L43.0 600.3 L43.5 599.7 L43.3 599.3 L43.1 598.9 L42.3 598.4 L40.9 598.8Z" fill="none" stroke="#5a5340" stroke-width="0.45" opacity="0.8"/>
<circle cx="48" cy="625.5" r="36.8" fill="none" stroke="#8fb6e0" stroke-width="1.800" opacity="0.9"/>
</g>
<g transform="translate(79.7 658.5)"><path d="M0 -8 L2.2 -2.600 L8 -2.300 L3.500 1.500 L5 7.200 L0 4 L-5 7.200 L-3.500 1.500 L-8 -2.300 L-2.200 -2.600Z" fill="#000" opacity="0.45" transform="translate(0.8 1.2)"/><path d="M0 -8 L2.2 -2.600 L8 -2.300 L3.500 1.500 L5 7.200 L0 4 L-5 7.200 L-3.500 1.500 L-8 -2.300 L-2.200 -2.600Z" fill="url(#starg)" stroke="#f4f4f4" stroke-width="0.6"/></g>
<defs><path id="s3p" d="M40.5 725.3 L42.5 726.1 L45.3 725.3 L48.9 725.1 L49.5 727.5 L51.8 728.0 L54.6 728.5 L54.5 727.4 L56.1 727.2 L57.3 727.6 L59.5 727.4 L61.2 726.7 L62.2 726.2 L62.8 727.2 L62.7 728.3 L61.5 727.4 L62.7 728.8 L63.8 730.2 L65.0 731.5 L65.4 732.6 L66.7 733.9 L68.0 734.3 L69.2 734.2 L69.1 734.8 L70.0 734.8 L71.2 733.7 L73.2 731.9 L73.2 733.0 L72.6 735.4 L71.9 737.0 L70.1 739.2 L69.0 740.6 L68.2 741.8 L67.4 743.1 L67.5 743.9 L67.8 744.6 L67.6 745.8 L65.9 747.1 L64.0 748.4 L63.8 749.1 L62.3 749.9 L61.8 750.4 L60.3 751.1 L58.4 751.8 L57.1 752.1 L54.4 752.7 L53.5 752.8 L53.5 752.7 L52.8 752.5 L52.0 752.3 L51.9 751.7 L50.4 751.0 L50.3 750.2 L51.4 749.3 L51.2 748.4 L50.7 747.5 L49.9 746.8 L48.8 745.7 L48.9 744.4 L49.0 743.7 L48.2 743.4 L46.6 743.4 L45.6 742.5 L43.6 742.5 L41.4 742.8 L39.8 742.4 L37.8 742.3 L36.6 741.3 L35.4 740.5 L34.3 739.3 L33.4 738.0 L32.4 736.9 L32.2 735.6 L32.9 734.9 L33.2 733.3 L33.0 732.4 L33.8 731.2 L34.9 730.0 L35.9 729.2 L37.1 729.0 L37.9 728.4 L38.1 727.5 L38.9 726.6 L39.9 726.2Z M39.1 724.2 L39.0 723.1 L39.7 721.4 L39.8 720.3 L40.4 720.1 L42.0 720.6 L43.2 720.8 L43.6 720.2 L43.7 719.2 L43.2 718.3 L42.4 717.5 L43.1 717.2 L43.7 717.4 L43.9 716.8 L44.6 717.0 L45.2 716.1 L46.0 715.8 L46.5 715.1 L46.7 714.6 L47.5 714.4 L48.1 714.2 L48.0 713.2 L48.0 712.2 L48.8 711.7 L48.7 712.8 L48.7 713.6 L49.1 714.2 L49.6 713.9 L50.3 714.1 L51.1 713.7 L51.9 713.4 L52.4 713.6 L52.8 713.0 L52.5 711.8 L53.0 711.2 L53.6 711.4 L53.5 710.7 L53.1 710.2 L53.8 709.8 L54.4 709.6 L55.1 709.2 L54.4 708.9 L53.7 709.3 L52.8 709.8 L52.2 709.4 L51.9 708.2 L52.5 706.6 L52.6 706.1 L52.0 706.0 L51.7 706.3 L51.7 707.1 L50.9 708.3 L50.8 709.4 L51.4 710.0 L51.3 710.7 L50.9 711.7 L50.8 712.6 L50.2 713.1 L49.7 713.1 L49.6 712.6 L49.0 711.2 L48.7 710.7 L48.0 711.5 L47.2 711.2 L46.9 710.2 L47.0 708.9 L47.6 708.3 L48.5 707.6 L49.1 706.3 L49.5 705.0 L50.0 704.2 L50.6 703.6 L51.2 703.0 L51.7 702.7 L52.2 702.6 L52.9 702.8 L52.8 703.3 L53.5 703.2 L54.3 703.2 L55.6 703.5 L56.1 704.1 L55.6 704.7 L54.6 704.7 L54.2 704.8 L55.1 705.7 L55.8 706.1 L56.1 705.7 L56.5 705.3 L56.1 704.6 L56.4 704.1 L56.9 704.0 L56.3 702.9 L56.5 702.6 L57.1 703.2 L57.2 702.7 L57.7 701.5 L58.3 701.0 L58.6 700.3 L58.3 699.9 L59.0 699.6 L59.6 699.4 L60.1 699.3 L59.5 698.8 L59.0 698.9 L58.2 698.3 L57.7 697.5 L58.0 697.1 L59.0 697.6 L60.1 698.5 L61.1 698.7 L60.6 698.2 L59.1 697.4 L58.4 696.8 L58.9 696.5 L58.1 695.7 L58.2 694.9 L57.5 694.5 L57.1 693.7 L56.9 692.9 L55.9 692.1 L56.3 691.9 L56.5 691.2 L57.0 691.0 L58.1 691.6 L58.1 691.0 L58.0 690.3 L57.4 689.5 L57.8 689.0 L58.4 688.4 L57.7 688.0 L57.0 687.2 L56.3 687.3 L55.6 686.6 L55.3 686.0 L55.0 685.5 L53.9 685.0 L54.1 684.5 L53.1 684.1 L51.9 683.9 L51.9 683.6 L50.4 683.5 L49.8 683.2 L50.1 681.9 L51.0 682.0 L50.6 681.4 L51.9 681.3 L53.7 681.2 L55.3 681.6 L56.4 681.5 L57.0 681.2 L57.6 681.1 L58.6 681.1 L60.2 681.3 L60.0 681.7 L59.1 682.2 L58.2 682.2 L56.6 682.3 L55.2 682.3 L56.3 682.5 L57.8 682.8 L58.5 682.8 L59.5 683.3 L60.8 684.2 L61.8 684.8 L63.9 685.5 L65.2 686.0 L64.8 685.3 L64.5 684.7 L65.7 684.8 L67.3 685.3 L69.3 686.3 L70.6 687.2 L71.3 687.9 L72.2 688.5 L73.2 689.3 L73.5 689.1 L74.2 689.4 L74.9 690.2 L75.3 690.6 L74.5 690.2 L74.5 690.6 L73.8 690.2 L73.9 690.4 L74.8 691.6 L74.1 691.2 L75.2 692.5 L75.7 693.1 L76.0 692.9 L75.3 691.6 L76.1 692.6 L76.7 693.3 L77.2 693.2 L77.5 693.2 L77.8 693.4 L78.4 694.0 L79.5 695.4 L80.3 696.6 L80.9 697.7 L81.5 699.1 L82.2 700.7 L82.3 701.3 L82.5 702.0 L82.9 703.2 L83.3 704.1 L83.6 704.2 L83.7 704.0 L84.1 704.8 L84.4 706.0 L84.7 707.0 L85.0 708.4 L84.9 707.9 L84.9 708.4 L84.7 708.3 L84.7 708.8 L84.6 709.1 L85.0 710.3 L85.2 711.1 L85.4 711.4 L85.4 710.9 L85.4 711.0 L85.5 711.7 L85.6 712.2 L85.6 712.6 L85.5 712.1 L85.3 712.0 L85.1 711.0 L84.7 710.0 L84.3 709.4 L84.1 709.2 L84.2 710.3 L84.1 710.9 L83.8 710.0 L83.4 709.8 L83.0 710.0 L82.6 709.6 L82.6 710.3 L82.6 711.2 L82.5 712.4 L82.7 713.2 L82.6 714.1 L82.8 716.6 L82.6 718.1 L82.9 719.0 L83.1 720.0 L83.1 720.7 L83.2 721.3 L83.0 721.9 L83.0 722.5 L82.6 722.6 L82.2 721.9 L81.8 721.7 L81.2 720.9 L80.6 720.4 L80.1 719.7 L79.8 719.0 L79.6 719.2 L79.3 720.0 L78.6 720.0 L78.1 719.7 L77.5 719.7 L77.0 719.6 L76.2 720.6 L75.4 721.7 L74.3 722.5 L73.7 722.8 L73.2 722.4 L72.4 723.4 L71.4 723.6 L70.6 723.5 L69.9 722.9 L69.2 723.1 L69.0 723.7 L69.5 724.3 L70.5 724.9 L70.8 725.3 L71.3 725.4 L71.7 725.6 L72.3 725.2 L72.9 724.2 L73.2 723.1 L73.7 723.8 L74.6 723.5 L75.4 723.7 L75.2 725.1 L75.2 726.1 L74.8 727.1 L74.4 727.8 L73.2 729.4 L71.9 731.4 L70.2 733.4 L69.3 734.0 L68.8 733.3 L68.5 732.4 L67.4 731.5 L66.1 730.8 L65.5 729.6 L64.5 728.9 L63.1 727.9 L62.8 727.2 L62.2 726.2 L62.3 725.2 L62.4 724.2 L62.2 723.2 L62.2 722.6 L61.5 722.9 L60.6 723.7 L59.5 723.6 L58.9 724.0 L58.0 724.0 L57.3 723.1 L57.0 722.5 L57.5 721.8 L58.1 721.2 L59.1 720.8 L60.0 719.9 L60.7 719.6 L61.5 719.8 L62.4 719.6 L63.2 719.2 L63.6 718.6 L63.2 718.1 L62.3 717.8 L61.5 717.6 L61.0 717.3 L61.0 716.4 L61.2 715.7 L60.6 716.1 L60.6 717.3 L60.2 717.7 L59.5 718.3 L58.9 717.9 L59.2 717.4 L58.5 717.4 L58.0 717.5 L57.7 718.4 L57.5 719.0 L57.4 719.8 L57.3 720.5 L57.6 721.0 L58.1 721.1 L57.4 721.5 L56.9 721.8 L55.8 722.0 L55.6 722.5 L55.2 722.4 L55.5 723.1 L56.1 723.6 L55.7 724.1 L55.8 724.8 L55.4 724.8 L55.0 724.6 L54.7 723.9 L54.1 723.2 L53.6 722.6 L53.5 721.7 L53.0 721.4 L51.7 720.9 L51.2 720.1 L50.6 719.6 L49.9 719.8 L50.0 720.6 L50.6 721.0 L51.1 721.8 L51.8 722.0 L53.1 722.8 L53.0 723.1 L52.4 722.8 L52.3 723.4 L52.6 723.8 L52.1 724.4 L51.9 724.4 L52.0 723.8 L51.6 723.1 L51.0 722.7 L50.1 722.3 L49.4 721.7 L49.0 721.1 L48.3 720.5 L47.7 720.9 L46.9 721.3 L46.2 721.1 L45.5 721.3 L45.5 722.1 L44.3 722.5 L43.7 723.4 L43.9 723.9 L43.4 724.6 L42.5 725.0 L41.3 724.9 L40.7 725.2 L40.4 724.9 L39.9 724.3Z M42.2 716.2 L43.1 716.2 L44.2 716.1 L45.1 715.9 L45.4 714.9 L44.9 714.7 L44.8 713.7 L44.3 712.8 L44.3 711.6 L43.9 711.4 L44.1 710.9 L43.5 710.8 L42.9 711.4 L43.0 712.4 L43.1 713.1 L43.7 713.3 L43.6 714.2 L43.0 714.2 L43.0 714.8 L42.6 715.1 L43.3 715.5 L42.8 715.7Z M42.3 714.8 L42.5 713.7 L42.8 713.2 L42.1 712.7 L41.1 713.2 L41.1 714.0 L40.6 714.6 L40.8 715.0Z M39.6 705.9 L39.6 704.8 L40.3 704.5 L41.2 705.0 L41.9 705.3 L42.0 706.1 L41.2 706.5 L40.2 706.6Z M32.8 704.3 L33.2 704.7 L36.0 702.8 L38.8 702.5 L41.4 702.5 L43.0 700.4 L44.2 698.8 L45.1 697.3 L45.0 695.9 L45.0 694.8 L44.3 694.7 L43.7 694.5 L42.6 694.0 L41.2 693.9 L40.1 693.7 L39.0 694.7 L39.3 695.7 L37.5 697.5 L35.9 698.8 L34.6 700.3 L33.3 701.9 L32.7 703.2Z M72.3 742.2 L72.5 742.9 L71.8 743.8 L71.1 744.6 L69.9 746.0 L68.7 746.8 L68.1 747.1 L68.2 746.8 L69.0 745.9 L69.3 745.2 L70.6 744.2 L71.5 743.1Z M83.3 720.6 L83.7 720.5 L83.9 720.9 L83.9 721.7 L83.6 722.1 L83.5 721.5Z M10.6 714.4 L11.1 714.6 L11.5 715.7 L11.5 716.6 L11.8 718.3 L12.6 720.3 L13.0 721.2 L13.2 723.1 L13.8 725.6 L14.7 727.1 L15.4 728.7 L15.9 730.7 L15.8 731.3 L16.6 732.6 L17.9 734.6 L19.2 736.0 L20.5 737.5 L22.1 739.2 L22.5 740.4 L21.8 740.6 L21.2 740.7 L21.4 741.6 L21.5 742.2 L21.3 742.3 L20.3 741.3 L19.6 740.6 L20.0 741.0 L19.9 740.9 L19.8 740.8 L19.3 740.2 L18.4 739.1 L19.4 740.3 L19.6 740.6 L18.6 739.4 L19.1 740.0 L18.4 739.1 L19.3 740.2 L19.5 740.4 L19.4 740.4 L20.4 741.4 L20.7 741.8 L21.2 742.2 L22.4 743.4 L21.2 742.2 L19.8 740.8 L18.1 738.7 L17.1 737.4 L16.2 736.1 L15.3 734.6 L14.8 733.8 L14.0 732.2 L13.5 731.1 L12.7 729.3 L12.4 728.6 L12.0 727.3 L11.2 724.7 L10.8 722.9 L10.4 720.3 L10.2 718.5 L10.2 717.6 L10.1 716.5 L10.1 716.2 L10.2 716.6 L10.3 716.3 L10.5 715.0Z M10.7 713.9 L10.6 712.8 L10.6 711.6 L10.7 710.5 L11.0 709.7 L11.4 708.8 L11.7 707.1 L11.8 705.9 L12.1 705.3 L12.8 704.6 L13.0 703.1 L12.6 703.5 L12.9 702.1 L13.3 700.9 L14.3 699.1 L15.1 698.2 L15.7 697.8 L15.8 698.6 L15.2 700.5 L15.5 700.7 L15.2 702.3 L15.2 703.0 L14.5 704.3 L13.9 705.4 L13.7 706.3 L14.2 705.9 L15.3 704.0 L15.9 703.6 L16.6 704.0 L17.1 704.7 L17.9 704.0 L19.0 703.8 L19.5 703.5 L20.1 704.3 L20.4 704.5 L21.0 703.8 L22.0 704.6 L21.7 705.8 L23.2 706.4 L23.1 704.8 L23.9 703.8 L23.6 702.8 L24.6 702.7 L25.5 704.7 L27.0 705.2 L27.7 704.6 L28.0 703.2 L28.6 701.7 L30.0 699.7 L29.0 699.3 L30.0 698.1 L30.5 697.1 L30.5 695.8 L29.1 696.5 L28.3 696.6 L27.4 697.4 L26.0 697.3 L24.4 698.1 L25.2 696.9 L26.3 696.2 L27.2 694.4 L27.7 693.0 L28.9 692.2 L29.7 692.0 L30.7 692.5 L31.4 693.2 L32.7 693.4 L33.4 694.0 L34.4 693.9 L34.8 693.1 L34.1 692.7 L34.8 692.1 L36.2 691.3 L35.1 691.2 L34.6 690.7 L34.7 689.9 L35.3 689.0 L36.0 688.0 L36.8 687.7 L37.9 686.9 L39.0 686.3 L39.5 685.5 L40.1 685.0 L41.1 684.8 L42.7 684.4 L44.7 684.3 L45.3 683.8 L45.9 683.4 L46.6 682.9 L45.6 682.6 L45.1 682.4 L46.3 682.1 L46.8 682.0 L45.8 681.8 L44.8 681.9 L44.7 681.6 L45.7 681.4 L46.0 680.9 L45.4 680.6 L44.5 680.5 L44.5 680.3 L43.1 680.6 L42.8 680.4 L43.5 679.9 L44.9 679.5 L43.4 679.8 L42.2 680.4 L41.8 680.9 L41.3 681.2 L41.4 681.6 L40.3 681.8 L39.4 682.1 L38.2 682.6 L37.0 682.8 L35.8 683.2 L34.6 683.3 L33.5 683.5 L32.9 683.6 L31.7 684.0 L31.0 684.0 L29.9 684.7 L29.0 685.1 L29.3 684.7 L28.4 684.9 L27.4 685.0 L26.5 685.2 L25.2 686.0 L23.8 686.8 L22.7 687.8 L21.8 688.5 L20.6 689.7 L19.7 690.5 L18.5 691.9 L17.2 693.5 L17.1 693.7 L18.1 692.4 L19.6 690.8 L20.7 689.7 L20.2 690.3 L18.7 691.8 L17.8 692.9 L16.7 694.3 L15.9 695.5 L15.3 696.4 L14.8 697.4 L13.9 699.0 L13.0 701.2 L12.5 702.6 L12.2 703.6 L11.9 704.7 L11.5 706.3 L11.2 707.5 L10.9 708.8 L10.8 709.6 L10.6 710.8 L10.5 712.0 L10.4 713.3 L10.6 713.2 L10.5 714.5 L10.6 714.4Z M56.4 700.5 L55.8 699.0 L55.2 697.8 L55.3 696.2 L55.9 696.9 L56.4 698.8 L57.3 700.0Z M48.3 698.3 L48.8 697.7 L49.4 697.3 L50.0 697.5 L49.8 698.7 L49.3 699.7 L48.6 698.9Z M37.2 693.5 L36.9 694.2 L35.9 695.5 L33.9 697.7 L33.5 698.4 L31.5 698.7 L31.0 698.2 L31.6 696.9 L31.7 695.4 L33.0 695.8 L34.2 695.6 L35.0 694.3 L35.3 693.0 L36.3 692.2Z M39.2 691.9 L39.0 693.1 L40.4 693.1 L41.1 693.6 L42.9 693.8 L43.4 693.2 L43.1 692.7 L43.0 692.2 L42.1 691.7 L40.7 692.1Z"/><clipPath id="s3c"><circle cx="47.9" cy="715.5" r="37.8"/></clipPath><clipPath id="s3l"><use href="#s3p"/></clipPath></defs>
<g clip-path="url(#s3c)"><circle cx="47.9" cy="715.5" r="37.8" fill="url(#tocean)"/>
<use href="#s3p" fill="none" stroke="#2a6ac0" stroke-width="2" opacity="0.6" filter="url(#tblur1)"/>
<use href="#s3p" fill="#5c7040"/>
<g clip-path="url(#s3l)"><g filter="url(#tblur)">
<path d="M67.2 728.6 L65.4 727.3 L61.2 727.2 L55.1 727.6 L47.9 727.8 L40.7 727.6 L34.6 727.2 L30.4 727.3 L28.6 728.6 L29.5 731.1 L33.2 734.4 L39.7 737.1 L47.9 738.2 L56.1 737.1 L62.6 734.4 L66.3 731.1Z" fill="#d6c09a" opacity="1"/>
<path d="M74.0 723.9 L72.8 722.2 L71.0 721.4 L68.9 721.4 L66.8 722.2 L64.8 723.8 L63.4 725.9 L62.5 728.3 L62.5 730.7 L63.4 732.6 L65.2 733.8 L67.5 733.9 L70.0 733.0 L72.2 731.1 L73.7 728.7 L74.3 726.2Z" fill="#d2bb94" opacity="1"/>
<path d="M74.5 716.4 L73.5 715.6 L72.3 715.3 L70.8 715.7 L69.4 716.6 L68.1 718.0 L67.2 719.6 L66.8 721.3 L67.0 722.8 L67.8 723.9 L69.2 724.3 L70.8 724.0 L72.5 723.0 L73.9 721.5 L74.7 719.6 L74.9 717.9Z" fill="#bfae88" opacity="1"/>
<path d="M59.4 716.0 L58.2 714.5 L56.1 713.7 L53.5 713.3 L50.5 713.4 L47.6 713.9 L45.1 714.7 L43.1 716.0 L42.2 717.6 L42.6 719.5 L44.5 721.2 L47.6 722.4 L51.4 722.5 L55.1 721.6 L57.9 719.9 L59.3 717.9Z" fill="#4f6a38" opacity="1"/>
<path d="M65.6 705.3 L63.7 704.1 L61.3 703.8 L58.8 704.2 L56.4 705.1 L54.2 706.5 L52.2 708.3 L50.9 710.4 L50.5 712.7 L51.5 714.9 L54.0 716.5 L57.6 716.8 L61.6 715.7 L64.8 713.3 L66.6 710.3 L66.7 707.4Z" fill="#4d6a3a" opacity="1"/>
<path d="M69.1 692.9 L66.3 692.8 L63.9 693.7 L62.0 695.2 L60.8 697.1 L60.3 699.4 L60.3 702.4 L61.0 705.8 L62.4 709.1 L65.0 711.6 L68.6 712.3 L72.3 710.8 L75.0 707.2 L75.8 702.4 L74.5 697.8 L72.0 694.5Z" fill="#6f7d52" opacity="1"/>
<path d="M76.2 705.3 L75.0 704.7 L73.5 705.1 L72.1 706.3 L70.7 708.0 L69.5 710.1 L68.6 712.4 L68.3 714.6 L68.7 716.4 L70.0 717.5 L71.8 717.6 L74.0 716.6 L75.9 714.6 L77.1 711.9 L77.5 709.1 L77.2 706.8Z" fill="#b5a57e" opacity="1"/>
<path d="M42.1 701.3 L43.3 698.8 L44.3 696.6 L44.9 695.1 L45.0 694.4 L44.2 694.5 L42.4 695.0 L40.0 695.8 L37.2 697.1 L34.8 698.9 L33.2 701.2 L32.9 703.5 L33.9 705.3 L35.8 706.1 L38.2 705.5 L40.3 703.8Z" fill="#f4f6f8" opacity="1"/>
<path d="M70.3 734.9 L69.0 734.7 L65.3 735.6 L59.5 737.0 L52.3 738.0 L45.0 738.4 L38.9 738.1 L34.8 738.0 L33.4 738.5 L34.7 739.8 L38.7 741.6 L45.0 742.9 L52.5 742.9 L59.8 741.4 L65.7 739.0 L69.2 736.5Z" fill="#4c6a30" opacity="1"/>
<path d="M44.4 723.2 L44.2 722.4 L43.8 721.7 L43.0 721.2 L42.2 720.9 L41.2 720.9 L40.4 721.2 L39.8 721.7 L39.4 722.4 L39.5 723.1 L39.9 723.9 L40.7 724.4 L41.6 724.8 L42.6 724.8 L43.5 724.5 L44.1 723.9Z" fill="#a59a70" opacity="1"/>
<path d="M63.9 720.3 L63.4 719.8 L62.5 719.7 L61.3 719.9 L59.9 720.3 L58.5 720.9 L57.4 721.6 L56.7 722.3 L56.5 723.0 L56.9 723.5 L57.9 723.8 L59.2 723.8 L60.7 723.4 L62.2 722.7 L63.2 721.8 L63.8 721.0Z" fill="#a09670" opacity="1"/>
<path d="M53.3 706.9 L52.7 705.6 L51.8 704.5 L51.0 703.8 L50.1 703.7 L49.4 704.0 L48.8 704.9 L48.3 706.2 L48.2 707.6 L48.4 709.1 L49.1 710.4 L50.2 711.1 L51.4 711.3 L52.5 710.8 L53.3 709.8 L53.5 708.4Z" fill="#5a6f4c" opacity="1"/>
<path d="M27.3 707.8 L29.4 704.6 L30.8 701.0 L31.7 697.7 L31.9 694.8 L31.5 692.4 L30.4 690.4 L28.7 689.0 L26.4 688.7 L23.5 690.0 L20.3 693.2 L17.8 697.8 L17.0 703.0 L18.2 707.4 L21.1 709.8 L24.4 709.8Z" fill="#4f6a3a" opacity="1"/>
<path d="M36.4 698.3 L38.0 697.0 L39.2 695.6 L39.9 694.4 L40.1 693.5 L39.6 692.7 L38.6 692.0 L37.1 691.5 L35.3 691.3 L33.4 691.8 L31.7 692.9 L30.5 694.7 L30.3 696.7 L31.1 698.3 L32.6 699.2 L34.5 699.1Z" fill="#8a947c" opacity="1"/>
<path d="M58.9 688.2 L58.0 688.9 L57.5 690.3 L57.3 692.0 L57.0 693.9 L56.6 695.9 L56.2 697.9 L56.0 699.7 L56.6 701.2 L58.0 702.0 L60.4 701.5 L62.9 699.6 L64.3 696.4 L64.1 692.9 L62.5 690.0 L60.4 688.5Z" fill="#8a947c" opacity="1"/>
</g></g>
<path d="M42.0 698.0 L42.8 696.7 L42.7 696.2 L41.6 696.4 L39.7 697.2 L37.5 698.5 L35.7 700.1 L34.8 701.6 L35.3 702.6 L36.7 702.6 L38.6 701.6 L40.5 699.8Z" fill="#fff" filter="url(#tblur1)"/>
<circle cx="47.9" cy="715.5" r="37.8" fill="url(#tshade)"/>
<circle cx="47.9" cy="715.5" r="37.3" fill="none" stroke="#7fa8e0" stroke-width="1" opacity="0.55"/></g>
<g transform="translate(79.7 748.6)"><path d="M0 -8 L2.2 -2.600 L8 -2.300 L3.500 1.500 L5 7.200 L0 4 L-5 7.200 L-3.500 1.500 L-8 -2.300 L-2.200 -2.600Z" fill="#000" opacity="0.45" transform="translate(0.8 1.2)"/><path d="M0 -8 L2.2 -2.600 L8 -2.300 L3.500 1.500 L5 7.200 L0 4 L-5 7.200 L-3.500 1.500 L-8 -2.300 L-2.200 -2.600Z" fill="url(#starg)" stroke="#f4f4f4" stroke-width="0.6"/></g>
<defs><path id="v4p" d="M36.9 797.6 L38.9 798.3 L41.6 797.4 L45.3 797.4 L45.7 799.9 L47.9 800.6 L50.7 801.5 L50.7 800.3 L52.3 800.4 L53.5 800.9 L55.7 801.1 L57.5 800.8 L58.5 800.6 L59.1 801.7 L58.9 802.9 L57.8 801.6 L58.9 803.4 L60.0 805.2 L61.1 807.1 L61.5 808.5 L62.7 810.4 L64.1 811.4 L65.3 811.8 L65.3 812.5 L66.2 812.9 L67.5 812.1 L69.7 811.0 L69.7 812.3 L68.9 815.1 L68.2 816.9 L66.2 818.9 L65.1 820.3 L64.2 821.7 L63.3 823.3 L63.4 824.7 L63.9 826.2 L63.7 828.3 L62.0 829.8 L60.0 831.3 L60.0 833.1 L58.4 834.1 L58.1 835.2 L56.6 836.3 L54.7 837.4 L53.3 837.7 L50.6 838.1 L49.7 837.9 L49.6 837.2 L48.8 835.9 L47.9 834.9 L47.6 833.1 L46.0 831.3 L45.9 829.8 L46.9 828.2 L46.6 826.6 L46.1 824.9 L45.3 823.8 L44.1 822.0 L44.3 820.2 L44.4 819.1 L43.6 818.6 L42.0 818.7 L41.1 817.4 L39.1 817.3 L36.9 817.9 L35.3 817.4 L33.5 817.6 L32.3 816.4 L31.2 815.5 L30.2 814.0 L29.3 812.5 L28.5 811.3 L28.3 809.8 L29.0 808.8 L29.4 806.9 L29.2 805.9 L30.0 804.4 L31.2 803.0 L32.2 802.0 L33.4 801.6 L34.2 800.9 L34.4 800.0 L35.3 798.9 L36.3 798.5Z M35.6 796.5 L35.7 795.4 L36.5 793.7 L36.6 792.7 L37.2 792.5 L38.7 792.8 L40.0 793.1 L40.4 792.4 L40.6 791.5 L40.2 790.7 L39.4 789.9 L40.2 789.7 L40.8 789.9 L41.0 789.3 L41.6 789.5 L42.4 788.7 L43.2 788.5 L43.7 787.9 L44.0 787.4 L44.8 787.3 L45.4 787.1 L45.4 786.3 L45.5 785.4 L46.3 785.1 L46.2 786.0 L46.0 786.7 L46.4 787.2 L46.9 786.9 L47.6 787.2 L48.5 786.9 L49.2 786.7 L49.7 786.9 L50.2 786.4 L50.1 785.4 L50.5 785.0 L51.2 785.2 L51.1 784.6 L50.8 784.2 L51.5 783.9 L52.2 783.8 L52.9 783.6 L52.2 783.3 L51.5 783.5 L50.5 783.8 L50.0 783.4 L49.8 782.4 L50.6 781.2 L50.7 780.8 L50.2 780.7 L49.8 780.9 L49.7 781.5 L48.8 782.4 L48.6 783.3 L49.2 783.8 L48.9 784.4 L48.4 785.2 L48.3 785.9 L47.6 786.3 L47.1 786.3 L47.1 785.9 L46.6 784.6 L46.4 784.2 L45.6 784.8 L44.8 784.5 L44.6 783.7 L44.8 782.6 L45.5 782.2 L46.5 781.7 L47.2 780.7 L47.8 779.7 L48.4 779.1 L49.0 778.8 L49.7 778.3 L50.2 778.2 L50.8 778.2 L51.4 778.4 L51.3 778.7 L52.0 778.8 L52.8 778.9 L54.1 779.3 L54.5 779.8 L53.9 780.1 L52.9 780.0 L52.5 780.0 L53.3 780.8 L54.0 781.2 L54.3 781.0 L54.7 780.7 L54.4 780.2 L54.8 779.8 L55.3 779.8 L54.8 779.0 L55.1 778.8 L55.6 779.3 L55.7 778.9 L56.4 778.2 L57.1 777.9 L57.6 777.5 L57.2 777.2 L58.0 777.2 L58.7 777.1 L59.2 777.2 L58.6 776.7 L58.1 776.7 L57.4 776.1 L56.9 775.6 L57.3 775.3 L58.3 775.9 L59.3 776.6 L60.2 777.0 L59.8 776.6 L58.4 775.8 L57.7 775.2 L58.3 775.2 L57.7 774.5 L57.9 774.1 L57.2 773.7 L56.9 773.2 L56.8 772.7 L56.0 772.1 L56.4 772.1 L56.7 771.7 L57.3 771.7 L58.3 772.3 L58.4 772.0 L58.4 771.6 L57.9 771.2 L58.4 771.0 L59.1 771.0 L58.5 770.6 L57.8 770.2 L57.2 770.1 L56.6 769.7 L56.4 769.4 L56.2 769.2 L55.2 768.9 L55.4 768.8 L54.5 768.6 L53.4 768.4 L53.4 768.3 L52.0 768.1 L51.4 768.0 L52.0 767.9 L52.9 768.0 L52.6 768.0 L54.0 768.2 L55.9 768.6 L57.4 768.9 L58.5 769.2 L59.3 769.5 L60.0 769.7 L61.0 770.1 L62.7 770.7 L62.3 770.5 L61.2 770.1 L60.2 769.8 L58.6 769.2 L57.1 768.8 L58.2 769.1 L59.6 769.6 L60.4 769.8 L61.3 770.2 L62.5 770.7 L63.3 771.1 L65.4 772.1 L66.7 772.9 L66.4 772.6 L66.3 772.5 L67.5 773.2 L69.2 774.3 L71.1 775.7 L72.4 776.7 L73.0 777.2 L73.9 778.0 L74.7 778.9 L75.3 779.4 L76.0 780.2 L76.6 780.9 L76.9 781.2 L76.1 780.3 L76.0 780.2 L75.3 779.5 L76.1 780.4 L75.3 779.6 L76.3 780.9 L76.7 781.4 L77.1 781.7 L76.6 780.9 L77.3 781.9 L77.9 782.6 L78.5 783.3 L78.9 783.9 L79.2 784.4 L79.8 785.3 L80.8 786.9 L81.5 788.1 L82.0 789.2 L82.4 790.2 L82.9 791.4 L82.9 791.7 L83.0 792.0 L83.3 793.1 L83.6 794.1 L84.0 795.0 L84.3 795.4 L84.7 796.9 L85.0 798.1 L85.1 799.0 L85.3 800.3 L85.1 799.6 L85.0 799.6 L84.8 799.0 L84.7 799.0 L84.5 798.9 L84.8 800.5 L85.0 801.5 L85.3 802.6 L85.4 802.5 L85.6 803.4 L85.7 804.8 L85.7 805.2 L85.6 804.8 L85.4 803.5 L85.1 802.5 L84.8 801.0 L84.5 799.5 L84.0 798.3 L83.8 797.7 L83.7 798.6 L83.6 798.8 L83.2 797.7 L82.8 796.9 L82.3 796.5 L81.9 795.8 L81.8 796.3 L81.6 796.9 L81.4 797.7 L81.5 798.6 L81.4 799.3 L81.3 801.6 L81.0 802.8 L81.3 804.1 L81.4 805.3 L81.4 806.2 L81.4 806.9 L81.2 807.3 L81.1 808.0 L80.7 807.7 L80.2 806.3 L79.7 805.6 L79.2 804.2 L78.5 803.2 L78.1 802.1 L77.7 801.2 L77.5 801.2 L77.1 801.8 L76.3 801.2 L75.8 800.6 L75.1 800.2 L74.6 799.8 L73.7 800.3 L72.7 800.9 L71.5 801.2 L70.8 801.1 L70.3 800.5 L69.4 801.1 L68.4 800.9 L67.4 800.5 L66.8 799.6 L66.1 799.6 L65.8 800.1 L66.3 800.8 L67.3 801.9 L67.6 802.5 L68.0 802.7 L68.5 803.2 L69.1 802.9 L69.9 802.3 L70.2 801.2 L70.7 802.2 L71.7 802.4 L72.5 802.9 L72.3 804.4 L72.1 805.4 L71.7 806.3 L71.2 806.8 L69.9 808.1 L68.4 809.7 L66.4 811.3 L65.5 811.7 L65.0 810.5 L64.7 809.3 L63.6 807.9 L62.3 806.6 L61.7 805.1 L60.8 804.1 L59.4 802.6 L59.1 801.7 L58.6 800.6 L58.8 799.6 L58.9 798.5 L58.8 797.6 L58.9 797.0 L58.1 797.0 L57.1 797.6 L56.0 797.3 L55.4 797.6 L54.5 797.5 L53.8 796.4 L53.6 795.7 L54.1 795.2 L54.8 794.7 L55.9 794.5 L56.8 793.8 L57.6 793.7 L58.3 794.1 L59.3 794.1 L60.2 793.9 L60.6 793.4 L60.2 792.9 L59.4 792.4 L58.5 792.0 L58.0 791.6 L58.2 790.8 L58.4 790.3 L57.8 790.4 L57.6 791.5 L57.2 791.8 L56.5 792.3 L55.9 791.8 L56.3 791.3 L55.5 791.2 L55.0 791.2 L54.6 792.0 L54.3 792.5 L54.2 793.2 L54.0 793.8 L54.3 794.4 L54.8 794.6 L54.1 794.9 L53.5 795.1 L52.4 795.1 L52.2 795.5 L51.8 795.4 L52.0 796.1 L52.5 796.7 L52.1 797.2 L52.1 797.8 L51.8 797.8 L51.4 797.6 L51.1 796.8 L50.5 796.0 L50.1 795.4 L50.1 794.5 L49.6 794.1 L48.4 793.5 L47.9 792.7 L47.3 792.2 L46.7 792.4 L46.7 793.1 L47.3 793.5 L47.7 794.3 L48.4 794.6 L49.6 795.5 L49.5 795.8 L48.9 795.4 L48.7 796.0 L49.0 796.4 L48.5 797.0 L48.3 797.0 L48.4 796.4 L48.1 795.7 L47.5 795.2 L46.7 794.8 L46.0 794.1 L45.7 793.5 L45.0 792.9 L44.3 793.2 L43.6 793.6 L42.9 793.4 L42.2 793.6 L42.1 794.3 L40.9 794.7 L40.2 795.6 L40.4 796.1 L39.8 796.8 L38.9 797.2 L37.8 797.1 L37.1 797.5 L36.9 797.1 L36.4 796.6Z M39.4 788.8 L40.2 788.8 L41.3 788.7 L42.3 788.5 L42.6 787.7 L42.1 787.4 L42.1 786.6 L41.8 785.8 L41.9 784.8 L41.5 784.6 L41.8 784.2 L41.2 784.1 L40.6 784.6 L40.5 785.5 L40.6 786.1 L41.1 786.2 L41.0 787.0 L40.4 787.0 L40.3 787.5 L39.8 787.8 L40.5 788.2 L40.0 788.3Z M39.6 787.6 L39.9 786.6 L40.3 786.1 L39.7 785.7 L38.6 786.2 L38.5 786.9 L38.0 787.4 L38.1 787.7Z M37.9 780.3 L38.0 779.5 L38.8 779.2 L39.6 779.5 L40.3 779.7 L40.3 780.4 L39.4 780.7 L38.4 780.8Z M31.5 779.8 L31.9 780.1 L34.8 778.3 L37.5 777.8 L40.1 777.7 L41.9 776.2 L43.3 775.1 L44.4 774.1 L44.5 773.3 L44.6 772.6 L44.0 772.5 L43.4 772.4 L42.5 772.1 L41.1 772.2 L40.0 772.1 L38.8 772.7 L38.9 773.3 L36.9 774.6 L35.3 775.6 L33.7 776.7 L32.3 778.0 L31.6 779.1Z M68.7 825.5 L69.0 827.2 L68.3 828.4 L67.7 829.7 L66.5 831.7 L65.2 832.7 L64.6 832.4 L64.5 831.4 L65.3 830.1 L65.6 828.6 L66.9 827.9 L67.9 826.5Z M81.7 806.3 L82.1 806.8 L82.4 807.5 L82.2 808.4 L82.0 808.5 L81.8 807.5Z M10.6 799.7 L10.8 799.0 L11.0 799.2 L10.9 800.1 L11.0 801.2 L11.4 802.3 L11.7 802.7 L11.8 804.5 L12.1 806.8 L12.8 807.7 L13.3 809.2 L13.7 811.4 L13.6 812.3 L14.2 813.3 L15.4 815.1 L16.4 816.0 L17.6 817.3 L18.9 818.8 L19.3 820.5 L18.8 821.5 L18.3 822.5 L18.6 824.2 L18.8 825.8 L18.8 826.8 L18.0 826.4 L17.5 826.8 L18.0 827.9 L18.3 828.7 L18.7 829.5 L18.6 829.4 L17.9 828.5 L19.0 829.9 L19.6 830.5 L19.1 830.0 L19.8 830.8 L19.4 830.4 L20.4 831.4 L21.0 832.1 L21.4 832.5 L22.3 833.3 L23.2 834.1 L24.0 834.8 L25.3 835.8 L24.5 835.2 L23.3 834.2 L21.2 832.3 L19.6 830.5 L18.0 828.7 L16.8 827.1 L15.7 825.3 L14.5 823.2 L13.5 821.2 L12.4 818.5 L12.0 817.5 L11.7 816.3 L11.1 814.0 L10.7 812.1 L10.3 809.2 L10.1 807.4 L10.1 806.2 L10.1 805.6 L10.1 804.5 L10.1 803.6 L10.2 803.5 L10.2 802.5 L10.4 800.6Z M10.6 799.3 L10.7 798.6 L10.8 798.1 L11.1 796.9 L11.4 795.7 L11.8 794.4 L12.2 793.1 L12.4 792.5 L12.8 791.5 L13.4 790.0 L13.8 789.2 L13.4 790.1 L13.7 789.5 L14.2 788.4 L15.3 786.4 L16.2 784.9 L16.9 783.9 L16.8 784.0 L16.0 785.2 L16.2 784.9 L15.7 785.8 L15.6 786.2 L14.8 787.5 L14.2 788.8 L13.9 789.5 L14.3 788.7 L15.5 786.6 L16.1 785.9 L16.6 785.6 L16.9 785.6 L17.7 784.7 L18.7 783.9 L19.2 783.4 L19.7 783.6 L19.9 783.6 L20.6 782.8 L21.3 782.9 L20.9 783.9 L22.2 783.8 L22.3 782.7 L23.2 781.7 L23.0 781.1 L24.0 780.7 L24.6 781.8 L25.9 781.7 L26.6 781.1 L27.1 780.0 L27.9 778.8 L29.5 777.2 L28.6 777.1 L29.6 776.2 L30.3 775.5 L30.5 774.7 L29.0 775.5 L28.3 775.7 L27.3 776.5 L26.0 776.9 L24.4 777.9 L25.3 777.0 L26.5 776.2 L27.6 774.9 L28.3 774.2 L29.5 773.4 L30.4 773.0 L31.2 773.0 L31.8 773.1 L32.9 772.9 L33.5 773.1 L34.4 772.9 L35.0 772.4 L34.4 772.3 L35.2 771.9 L36.6 771.3 L35.5 771.4 L35.2 771.3 L35.4 770.9 L36.1 770.5 L37.0 770.0 L37.8 769.7 L39.0 769.3 L40.2 768.9 L40.8 768.7 L41.5 768.5 L42.6 768.3 L44.2 768.1 L46.1 768.0 L46.8 767.9 L47.6 767.8 L48.3 767.8 L47.4 767.7 L47.0 767.7 L48.2 767.7 L48.7 767.7 L47.8 767.7 L46.8 767.7 L46.7 767.7 L47.8 767.7 L48.2 767.7 L47.7 767.7 L46.9 767.7 L45.5 767.8 L45.2 767.8 L46.0 767.7 L47.5 767.7 L46.0 767.7 L44.7 767.8 L44.1 767.9 L43.6 767.9 L42.4 768.1 L41.5 768.3 L40.2 768.5 L39.0 768.8 L37.9 769.1 L36.7 769.4 L35.6 769.8 L34.9 770.0 L33.8 770.4 L33.1 770.7 L31.9 771.2 L31.0 771.7 L31.4 771.5 L30.4 772.0 L29.4 772.5 L28.4 773.1 L26.9 774.1 L25.4 775.1 L24.2 776.0 L23.3 776.8 L21.9 778.1 L20.7 779.2 L19.4 780.7 L17.9 782.5 L17.9 782.6 L19.0 781.2 L20.7 779.2 L22.1 777.9 L21.5 778.4 L19.8 780.2 L18.8 781.4 L17.6 782.9 L16.8 784.1 L15.9 785.3 L15.4 786.3 L14.5 787.8 L13.6 789.7 L13.2 790.6 L12.9 791.3 L12.5 792.2 L12.0 793.5 L11.8 794.4 L11.4 795.6 L11.2 796.6 L10.9 797.7 L10.7 798.7 L10.6 799.6 L10.7 799.0 L10.5 800.2 L10.6 799.7Z M55.3 777.3 L54.8 776.1 L54.4 775.3 L54.7 774.3 L55.3 774.8 L55.4 776.2 L56.3 777.1Z M47.4 774.9 L48.0 774.5 L48.7 774.3 L49.3 774.5 L48.9 775.3 L48.2 775.9 L47.6 775.3Z M37.2 772.3 L36.9 772.7 L35.6 773.6 L33.4 775.2 L32.9 775.7 L31.0 776.2 L30.6 776.0 L31.4 775.1 L31.6 774.2 L32.8 774.2 L34.1 773.8 L35.0 773.0 L35.5 772.3 L36.6 771.7Z M39.4 771.2 L39.0 771.9 L40.4 771.8 L41.0 772.0 L42.8 772.0 L43.3 771.7 L43.1 771.4 L43.0 771.2 L42.2 770.9 L40.9 771.2Z"/><clipPath id="v4c"><circle cx="47.9" cy="805.5" r="37.8"/></clipPath><clipPath id="v4l"><use href="#v4p"/></clipPath></defs>
<g clip-path="url(#v4c)"><circle cx="47.9" cy="805.5" r="37.8" fill="#d2d6ca"/>
<use href="#v4p" fill="#b79f78"/>
<g clip-path="url(#v4l)">
<path d="M65.0 785.4 L64.3 787.3 L65.6 790.9 L68.1 793.6 L70.2 793.1 L69.9 789.8 L67.4 786.5Z" fill="#caa074"/>
<path d="M74.1 797.6 L72.3 799.2 L72.0 803.3 L73.5 806.8 L75.9 806.9 L77.3 803.6 L76.4 799.5Z" fill="#c6a57a"/>
<path d="M61.0 779.1 L60.2 779.0 L60.4 779.9 L61.4 781.3 L62.6 782.0 L63.1 781.5 L62.4 780.2Z" fill="#c6a57a"/>
<path d="M57.8 831.7 L55.9 832.1 L54.4 833.6 L54.6 835.0 L56.1 835.4 L58.0 834.4 L58.8 832.8Z" fill="#9fc48a"/>
<path d="M50.2 781.2 L49.0 779.4 L47.5 779.6 L46.3 781.7 L46.5 784.4 L48.3 785.4 L50.2 784.0Z" fill="#b99a70"/>
<path d="M36.8 799.9 L35.8 797.7 L33.5 797.3 L31.5 799.0 L31.2 801.5 L33.1 803.0 L35.6 802.3Z" fill="#d9a0c0"/>
<path d="M37.1 788.5 L36.6 785.7 L34.2 785.3 L31.2 787.6 L29.9 791.0 L31.8 793.0 L35.1 791.9Z" fill="#f0e27a"/>
<path d="M49.0 777.4 L48.1 777.4 L47.4 779.2 L47.4 781.6 L48.5 782.7 L49.7 781.5 L49.7 779.1Z" fill="#c6a57a"/>
<path d="M45.7 777.5 L45.0 778.0 L44.3 779.6 L44.3 781.0 L45.1 781.1 L45.9 779.9 L46.1 778.2Z" fill="#9fc48a"/>
<path d="M52.9 818.6 L51.6 817.3 L49.4 817.5 L48.0 818.9 L48.4 820.6 L50.4 821.2 L52.4 820.3Z" fill="#8fc46a"/>
<path d="M52.1 785.0 L50.4 784.9 L49.2 787.0 L49.2 789.9 L50.9 791.5 L52.8 790.3 L53.2 787.4Z" fill="#caa074"/>
<path d="M57.2 819.0 L53.8 818.3 L50.3 820.6 L49.4 824.1 L51.7 826.2 L55.6 825.4 L58.1 822.2Z" fill="#c6a57a"/>
<path d="M43.3 810.6 L41.9 809.3 L39.8 809.6 L38.6 811.2 L39.2 813.0 L41.1 813.6 L43.0 812.5Z" fill="#e58a4a"/>
<path d="M85.4 800.7 L85.3 801.3 L85.4 804.0 L85.5 806.6 L85.6 807.3 L85.7 805.5 L85.6 802.5Z" fill="#9fc48a"/>
<path d="M57.0 803.6 L56.1 802.4 L54.6 802.4 L53.6 803.4 L53.8 804.9 L55.1 805.6 L56.6 805.0Z" fill="#f0e27a"/>
<path d="M58.4 777.4 L57.3 776.9 L57.1 777.4 L57.8 778.5 L59.0 779.5 L59.9 779.5 L59.6 778.6Z" fill="#d9a0c0"/>
<path d="M85.5 802.0 L85.4 802.5 L85.4 805.0 L85.4 807.5 L85.6 808.2 L85.7 806.6 L85.7 803.8Z" fill="#b99a70"/>
<path d="M64.5 798.9 L61.7 797.9 L59.2 799.9 L58.5 803.6 L60.5 806.2 L63.8 805.7 L65.6 802.3Z" fill="#e8907a"/>
<path d="M41.4 779.1 L41.3 778.4 L40.4 778.7 L39.3 779.8 L38.9 780.9 L39.6 781.1 L40.7 780.3Z" fill="#a8cf7a"/>
<path d="M56.8 829.4 L54.7 829.7 L53.2 831.3 L53.3 833.0 L55.0 833.5 L57.0 832.5 L57.8 830.7Z" fill="#8fc46a"/>
<path d="M54.2 821.6 L53.0 820.3 L50.8 820.2 L49.2 821.5 L49.4 823.2 L51.3 824.0 L53.4 823.3Z" fill="#f0e27a"/>
<path d="M81.0 811.3 L79.5 812.5 L78.5 815.5 L78.6 818.0 L79.8 818.2 L81.3 815.9 L81.7 812.8Z" fill="#8fc46a"/>
<path d="M82.1 789.5 L81.6 789.0 L82.0 790.5 L82.9 793.1 L83.7 794.7 L83.8 794.1 L83.1 791.8Z" fill="#a8cf7a"/>
<path d="M58.3 824.8 L56.2 823.0 L52.6 823.4 L50.2 825.7 L50.8 828.1 L54.0 828.9 L57.2 827.4Z" fill="#f3ea9a"/>
<path d="M33.7 808.0 L32.1 804.8 L28.7 804.1 L25.9 806.2 L25.9 809.8 L28.7 812.1 L32.3 811.3Z" fill="#caa074"/>
<path d="M73.4 825.9 L71.1 825.7 L67.7 828.2 L65.8 831.4 L66.9 832.9 L69.9 831.8 L72.8 828.7Z" fill="#f0e27a"/>
<path d="M65.1 828.3 L62.6 827.2 L58.8 828.7 L56.6 831.6 L57.7 833.6 L61.1 833.5 L64.4 831.1Z" fill="#e9c46a"/>
<path d="M79.1 786.8 L78.8 787.1 L79.3 788.8 L80.3 790.6 L81.1 791.1 L81.0 789.9 L80.1 788.0Z" fill="#e9c46a"/>
<path d="M79.9 812.8 L78.7 812.9 L77.4 814.9 L77.0 817.2 L77.8 818.1 L79.2 817.0 L80.1 814.6Z" fill="#f0e27a"/>
<path d="M42.3 786.5 L41.7 784.7 L39.9 784.7 L38.0 786.5 L37.6 788.9 L39.1 790.1 L41.3 789.0Z" fill="#e9c46a"/>
<path d="M84.5 814.7 L84.2 815.2 L83.2 817.9 L82.2 820.6 L82.1 821.3 L83.0 819.6 L84.0 816.7Z" fill="#e0864a"/>
<path d="M84.5 801.9 L83.9 803.9 L83.7 808.0 L84.0 811.1 L84.8 810.8 L85.4 807.5 L85.3 803.5Z" fill="#caa074"/>
<path d="M71.3 831.6 L69.9 831.9 L68.0 833.4 L67.1 835.0 L67.6 835.4 L69.4 834.4 L71.0 832.7Z" fill="#f3ea9a"/>
<path d="M50.8 806.6 L47.6 806.8 L45.2 809.9 L45.5 813.7 L48.4 815.2 L51.7 813.4 L52.7 809.5Z" fill="#e8907a"/>
<path d="M85.5 802.3 L85.6 803.6 L85.6 805.8 L85.6 807.3 L85.7 807.0 L85.7 805.0 L85.6 802.9Z" fill="#e9c46a"/>
<path d="M72.7 819.8 L70.3 819.7 L67.5 822.1 L66.5 825.3 L68.0 826.7 L70.9 825.5 L72.9 822.4Z" fill="#d9a0c0"/>
<path d="M64.5 794.1 L62.7 793.1 L61.2 794.2 L60.8 796.5 L62.1 798.4 L64.1 798.4 L65.2 796.4Z" fill="#c6a57a"/>
<path d="M65.4 780.3 L65.3 781.1 L66.7 783.1 L68.6 784.8 L69.7 784.7 L69.1 782.9 L67.1 781.0Z" fill="#d9a0c0"/>
<path d="M84.0 798.4 L83.3 798.2 L82.9 800.1 L83.2 802.7 L83.9 804.1 L84.5 803.2 L84.5 800.6Z" fill="#f0e27a"/>
<path d="M69.0 824.3 L66.0 826.3 L64.5 829.7 L65.4 831.9 L68.1 831.4 L70.7 828.5 L71.1 825.3Z" fill="#e9c46a"/>
<path d="M52.2 833.3 L49.4 832.5 L46.3 833.7 L45.3 835.8 L47.1 837.2 L50.1 837.1 L52.4 835.4Z" fill="#a8cf7a"/>
<path d="M78.6 792.1 L77.1 792.0 L76.7 794.6 L77.6 798.0 L79.3 799.6 L80.5 798.1 L80.2 794.7Z" fill="#a8cf7a"/>
<path d="M58.5 781.1 L58.3 782.2 L59.3 784.1 L60.8 785.6 L61.8 785.3 L61.4 783.5 L59.8 781.7Z" fill="#c6a57a"/>
<path d="M42.8 812.3 L40.5 810.1 L37.1 810.3 L35.0 812.7 L35.8 815.7 L39.0 816.9 L42.1 815.4Z" fill="#f3ea9a"/>
<path d="M43.2 789.2 L40.5 790.7 L38.8 794.9 L40.0 798.8 L43.1 799.2 L45.5 795.8 L45.2 791.3Z" fill="#f0e27a"/>
<path d="M33.7 830.7 L32.0 829.2 L29.8 828.9 L28.8 830.0 L29.8 831.7 L31.8 832.6 L33.6 832.2Z" fill="#c6a57a"/>
<path d="M70.9 809.5 L69.0 810.1 L67.8 812.5 L68.1 815.0 L69.8 815.6 L71.6 813.9 L72.1 811.2Z" fill="#8fc46a"/>
<path d="M76.3 821.4 L75.3 819.1 L72.1 819.6 L69.2 822.6 L68.9 825.7 L71.2 826.7 L74.5 824.8Z" fill="#9fc48a"/>
<path d="M64.8 774.6 L64.9 775.4 L67.8 777.6 L71.1 779.8 L72.6 779.9 L71.1 777.9 L67.6 775.5Z" fill="#e0864a"/>
<path d="M59.0 835.7 L57.7 834.5 L54.6 834.7 L52.3 836.2 L52.4 837.8 L54.7 838.4 L57.6 837.5Z" fill="#e0864a"/>
<path d="M55.7 778.1 L54.6 777.6 L54.3 778.4 L54.9 780.0 L56.2 781.2 L57.2 781.0 L57.0 779.6Z" fill="#f0e27a"/>
<path d="M56.9 785.5 L55.0 784.5 L53.6 785.9 L53.4 788.8 L55.0 791.0 L57.2 790.7 L58.1 788.2Z" fill="#f0e27a"/>
<path d="M41.8 816.6 L39.9 814.6 L36.9 814.7 L35.0 816.6 L35.7 819.1 L38.5 820.2 L41.2 819.1Z" fill="#f0e27a"/>
<path d="M77.6 813.8 L76.2 811.3 L73.1 811.8 L70.6 815.0 L70.7 818.4 L73.3 819.5 L76.4 817.5Z" fill="#8fc46a"/>
<path d="M51.2 780.6 L50.0 779.5 L48.9 780.4 L48.4 782.6 L49.2 784.6 L50.9 784.7 L51.8 782.8Z" fill="#a8cf7a"/>
<path d="M59.1 812.6 L57.4 811.7 L55.2 812.5 L54.2 814.5 L55.1 816.2 L57.3 816.2 L59.1 814.6Z" fill="#caa074"/>
<path d="M51.3 776.6 L50.1 776.5 L49.7 778.6 L50.2 781.8 L51.9 783.4 L53.4 782.1 L52.9 779.0Z" fill="#e8907a"/>
<path d="M82.3 813.7 L81.9 812.4 L80.7 813.0 L79.7 814.9 L79.7 816.8 L80.6 817.1 L81.8 815.8Z" fill="#e8907a"/>
<path d="M69.2 820.6 L67.7 819.2 L65.0 819.8 L63.0 822.1 L63.4 824.3 L65.8 824.7 L68.3 823.1Z" fill="#a8cf7a"/>
<path d="M61.1 808.6 L58.8 807.1 L55.8 808.1 L54.3 810.9 L55.4 813.5 L58.5 813.8 L61.0 811.6Z" fill="#e9c46a"/>
<path d="M83.3 815.2 L83.0 814.4 L82.0 815.5 L81.1 817.7 L81.0 819.3 L81.8 819.1 L82.8 817.3Z" fill="#e8907a"/>
<path d="M51.2 799.0 L48.9 799.0 L47.1 801.3 L47.2 804.3 L49.2 805.7 L51.6 804.3 L52.4 801.4Z" fill="#a8cf7a"/>
<path d="M65.9 776.4 L64.8 776.1 L64.7 776.4 L65.5 777.2 L66.8 777.9 L67.5 778.0 L67.1 777.3Z" fill="#e8907a"/>
<path d="M70.8 815.5 L69.0 815.6 L67.3 817.6 L67.0 819.9 L68.3 820.8 L70.3 819.7 L71.4 817.4Z" fill="#e9c46a"/>
<path d="M56.8 795.5 L54.5 793.1 L51.5 793.4 L49.6 796.2 L50.4 799.6 L53.5 800.9 L56.5 799.0Z" fill="#e58a4a"/>
<path d="M47.4 807.8 L43.9 809.0 L42.2 813.1 L43.8 817.0 L47.5 817.7 L50.4 814.7 L50.3 810.3Z" fill="#e0864a"/>
<path d="M44.3 810.8 L40.9 810.1 L37.8 812.6 L37.4 816.4 L40.1 818.7 L43.8 817.6 L45.6 814.1Z" fill="#caa074"/>
<path d="M73.0 791.0 L72.4 792.6 L73.3 795.6 L75.0 797.7 L76.5 797.2 L76.4 794.5 L74.8 791.8Z" fill="#9fc48a"/>
<path d="M60.5 791.4 L58.8 792.9 L58.7 796.5 L60.6 799.6 L63.2 799.6 L64.2 796.6 L62.9 792.9Z" fill="#e9c46a"/>
<path d="M82.1 821.4 L81.1 823.0 L78.9 826.5 L77.3 829.2 L79.2 826.7 L81.3 823.2Z" fill="#9fc48a"/>
<path d="M69.5 793.8 L67.5 793.0 L66.1 794.5 L66.1 797.3 L67.6 799.2 L69.7 798.8 L70.5 796.4Z" fill="#f0e27a"/>
<path d="M65.9 802.3 L63.7 801.4 L61.5 802.9 L60.8 805.8 L62.3 807.9 L64.9 807.6 L66.5 805.0Z" fill="#f0e27a"/>
<path d="M60.4 803.9 L59.1 804.3 L58.4 805.9 L58.9 807.6 L60.2 808.0 L61.4 806.9 L61.5 805.0Z" fill="#e8907a"/>
<path d="M71.7 781.4 L69.3 780.1 L68.3 780.6 L69.1 782.6 L71.4 784.9 L73.4 785.4 L73.5 783.8Z" fill="#caa074"/>
<path d="M62.2 832.7 L60.3 832.6 L57.9 834.0 L57.0 835.7 L58.2 836.6 L60.4 835.9 L62.3 834.3Z" fill="#8fc46a"/>
<path d="M84.3 812.7 L83.3 815.1 L82.4 818.5 L82.2 820.4 L82.9 819.4 L84.1 816.2 L84.7 813.2Z" fill="#caa074"/>
<path d="M57.2 772.5 L56.0 772.5 L57.6 773.4 L60.8 774.9 L63.2 775.7 L63.1 774.9 L60.4 773.4Z" fill="#f0e27a"/>
<path d="M74.7 808.8 L73.3 809.2 L72.4 811.2 L72.6 813.1 L73.8 813.7 L75.1 812.3 L75.5 810.2Z" fill="#e58a4a"/>
<path d="M68.3 793.2 L65.8 792.0 L63.8 793.6 L63.5 797.0 L65.4 799.6 L68.2 799.4 L69.5 796.4Z" fill="#a8cf7a"/>
<path d="M67.2 788.3 L64.5 786.5 L62.4 787.4 L62.0 790.4 L63.8 793.5 L66.8 794.2 L68.4 791.8Z" fill="#9fc48a"/>
<path d="M39.0 794.3 L37.6 792.8 L35.2 793.4 L33.6 795.8 L34.0 798.3 L36.3 798.8 L38.5 797.0Z" fill="#f3ea9a"/>
<path d="M59.5 834.6 L57.8 833.3 L54.4 833.8 L52.0 835.6 L52.5 837.4 L55.1 837.8 L58.2 836.6Z" fill="#f3ea9a"/>
<path d="M80.1 812.6 L77.8 813.3 L75.5 817.0 L74.9 821.0 L76.5 822.2 L79.1 819.8 L80.7 815.5Z" fill="#c6a57a"/>
<path d="M48.4 803.5 L46.5 803.7 L45.2 805.8 L45.6 808.1 L47.4 808.9 L49.2 807.6 L49.6 805.2Z" fill="#e0864a"/>
<path d="M68.6 775.8 L67.7 776.0 L69.5 778.0 L72.6 780.6 L74.7 781.7 L74.2 780.1 L71.5 777.4Z" fill="#9fc48a"/>
<path d="M45.4 794.3 L44.2 791.8 L41.7 791.4 L39.4 793.3 L39.1 796.3 L41.3 798.1 L44.2 797.1Z" fill="#f3ea9a"/>
<path d="M39.9 782.4 L39.2 781.5 L37.3 782.4 L35.5 784.6 L35.4 786.5 L37.1 786.6 L39.1 784.7Z" fill="#9fc48a"/>
<path d="M82.7 795.7 L82.5 797.0 L82.9 799.7 L83.7 801.6 L84.3 801.4 L84.2 799.2 L83.5 796.7Z" fill="#e58a4a"/>
<path d="M69.6 809.9 L67.0 812.2 L66.3 816.4 L68.0 819.3 L71.0 818.7 L72.9 815.1 L72.2 811.2Z" fill="#9fc48a"/>
<path d="M78.1 819.4 L77.0 820.6 L76.5 822.4 L76.8 823.5 L77.8 823.0 L78.7 821.3 L78.9 819.7Z" fill="#f3ea9a"/>
<path d="M69.1 823.6 L66.7 823.0 L63.4 825.0 L61.9 828.0 L63.2 829.7 L66.3 829.0 L68.9 826.3Z" fill="#d9a0c0"/>
<path d="M48.5 819.1 L45.8 817.6 L42.4 818.7 L41.0 821.4 L42.6 823.8 L45.9 824.1 L48.6 822.0Z" fill="#9fc48a"/>
<path d="M56.5 792.3 L54.8 791.2 L53.1 792.1 L52.5 794.3 L53.5 796.3 L55.6 796.4 L56.9 794.6Z" fill="#f3ea9a"/>
<path d="M55.6 782.7 L54.3 782.7 L53.7 784.6 L54.4 787.3 L56.1 788.5 L57.4 787.3 L57.2 784.7Z" fill="#a8cf7a"/>
<path d="M45.5 830.0 L44.6 828.9 L42.8 828.6 L41.5 829.4 L41.6 830.6 L43.1 831.4 L44.9 831.1Z" fill="#f0e27a"/>
<path d="M46.1 834.6 L42.7 833.8 L39.6 835.0 L39.4 837.2 L41.7 838.8 L44.9 838.7 L47.0 836.9Z" fill="#b99a70"/>
<path d="M54.7 811.6 L52.8 812.7 L52.1 815.2 L53.3 817.2 L55.4 817.3 L56.9 815.3 L56.6 812.8Z" fill="#9fc48a"/>
<path d="M53.6 810.0 L51.7 810.1 L50.3 811.8 L50.4 813.9 L52.0 814.8 L53.9 813.8 L54.6 811.7Z" fill="#8fc46a"/>
<path d="M61.5 815.4 L58.8 813.1 L54.7 813.8 L52.0 816.9 L52.9 820.2 L56.7 821.2 L60.6 819.0Z" fill="#e8907a"/>
<path d="M42.1 784.2 L40.4 783.9 L38.0 786.2 L36.9 789.5 L38.2 791.3 L40.8 790.1 L42.4 786.8Z" fill="#e58a4a"/>
<path d="M66.9 832.9 L64.6 832.4 L60.8 834.2 L58.8 836.8 L59.7 838.1 L62.7 837.5 L65.9 835.2Z" fill="#e58a4a"/>
<path d="M70.6 789.1 L70.2 790.7 L71.2 793.6 L73.1 795.5 L74.5 795.0 L74.2 792.4 L72.5 789.8Z" fill="#8fc46a"/>
<path d="M83.9 809.4 L83.1 808.7 L81.9 810.4 L81.2 813.2 L81.6 815.0 L82.7 814.5 L83.7 812.0Z" fill="#f0e27a"/>
<path d="M35.9 790.3 L34.1 789.8 L31.8 791.7 L30.6 794.7 L31.8 796.6 L34.3 795.8 L36.0 792.9Z" fill="#a8cf7a"/>
<path d="M52.3 777.7 L51.3 777.0 L50.7 777.6 L50.8 779.3 L51.7 780.8 L52.8 780.8 L53.1 779.4Z" fill="#e9c46a"/>
<path d="M58.8 832.5 L55.4 832.0 L51.5 834.0 L50.4 836.7 L52.4 838.1 L56.1 837.5 L59.0 835.0Z" fill="#b99a70"/>
<path d="M48.2 793.3 L45.3 793.2 L42.7 796.2 L42.3 800.5 L45.0 802.7 L48.4 800.9 L49.7 796.7Z" fill="#9fc48a"/>
<path d="M81.7 814.1 L80.5 814.2 L79.0 816.6 L78.3 819.3 L79.0 820.5 L80.6 819.1 L81.8 816.2Z" fill="#f3ea9a"/>
<path d="M58.8 833.4 L56.4 834.6 L55.4 836.6 L56.4 837.9 L58.6 837.6 L60.6 836.0 L60.7 834.0Z" fill="#e0864a"/>
<path d="M57.9 778.0 L55.8 776.9 L55.3 777.7 L56.1 779.9 L58.1 782.0 L59.9 782.1 L59.9 780.2Z" fill="#b99a70"/>
<path d="M55.9 779.6 L55.0 779.0 L54.6 779.4 L54.8 780.5 L55.6 781.5 L56.4 781.6 L56.6 780.7Z" fill="#e58a4a"/>
<path d="M59.8 787.1 L59.1 787.7 L59.2 789.2 L60.1 790.6 L61.2 790.8 L61.5 789.5 L60.9 787.9Z" fill="#e9c46a"/>
<path d="M50.8 835.0 L49.5 835.4 L49.1 836.5 L49.8 837.3 L51.1 837.3 L52.1 836.5 L52.0 835.4Z" fill="#f0e27a"/>
<path d="M74.5 792.6 L73.2 791.9 L72.4 792.9 L72.6 794.8 L73.7 796.2 L74.9 796.0 L75.3 794.4Z" fill="#c6a57a"/>
<path d="M81.5 822.8 L81.8 821.5 L80.0 823.5 L77.6 827.1 L76.5 829.5 L77.3 829.1 L79.5 826.2Z" fill="#8fc46a"/>
<path d="M84.4 814.5 L84.1 814.8 L83.6 816.3 L83.2 817.8 L83.2 818.2 L83.7 817.2 L84.2 815.5Z" fill="#e9c46a"/>
<path d="M58.8 789.4 L57.0 787.8 L55.1 788.1 L54.2 790.3 L55.1 792.8 L57.3 793.6 L59.1 792.0Z" fill="#e58a4a"/>
<path d="M85.5 805.0 L85.2 806.7 L85.0 809.7 L85.0 811.9 L85.2 811.4 L85.6 808.8 L85.7 805.9Z" fill="#c6a57a"/>
<path d="M70.9 826.3 L68.7 827.4 L66.9 829.8 L66.9 831.7 L68.5 831.8 L70.7 829.9 L71.8 827.5Z" fill="#e8907a"/>
<path d="M84.4 810.2 L84.1 809.3 L83.5 810.1 L83.0 811.8 L83.0 813.3 L83.5 813.4 L84.2 812.0Z" fill="#c6a57a"/>
<path d="M65.4 780.9 L64.2 781.7 L65.4 784.8 L68.0 788.3 L70.6 789.2 L70.9 786.6 L68.5 782.9Z" fill="#e8907a"/>
<path d="M36.3 794.1 L35.8 792.9 L34.5 792.9 L33.4 793.9 L33.2 795.4 L34.3 796.1 L35.7 795.5Z" fill="#e8907a"/>
<path d="M64.9 776.1 L65.0 776.6 L66.3 777.6 L67.8 778.5 L68.5 778.5 L67.7 777.6 L66.1 776.6Z" fill="#9fc48a"/>
<path d="M77.6 793.1 L76.1 794.3 L76.1 798.2 L77.6 802.1 L79.7 802.8 L80.7 799.7 L79.8 795.4Z" fill="#b99a70"/>
<path d="M38.7 835.4 L37.1 835.2 L36.3 836.0 L36.9 837.2 L38.3 837.8 L39.5 837.5 L39.7 836.4Z" fill="#b99a70"/>
<path d="M74.2 780.0 L72.9 779.6 L73.4 781.2 L75.5 783.8 L77.5 785.5 L78.0 784.8 L76.5 782.2Z" fill="#b99a70"/>
<path d="M80.2 793.7 L79.1 793.3 L78.6 794.9 L79.1 797.3 L80.2 798.7 L81.1 798.1 L81.1 795.8Z" fill="#f0e27a"/>
<path d="M49.8 797.1 L48.7 795.4 L46.8 795.1 L45.3 796.6 L45.3 798.7 L47.1 799.9 L49.1 799.1Z" fill="#b99a70"/>
<path d="M77.1 828.5 L76.0 829.6 L74.9 831.1 L74.5 831.9 L75.2 831.4 L76.4 830.0 L77.3 828.7Z" fill="#d9a0c0"/>
<path d="M52.5 781.6 L50.8 781.5 L49.6 784.2 L49.8 787.9 L52.0 789.8 L54.3 788.1 L54.3 784.4Z" fill="#c6a57a"/>
<path d="M69.4 828.9 L68.2 828.6 L66.3 829.7 L65.2 831.3 L65.7 832.3 L67.4 831.8 L69.0 830.4Z" fill="#f0e27a"/>
<path d="M64.2 783.8 L61.7 782.2 L60.1 782.7 L60.2 785.0 L61.9 787.6 L64.4 788.4 L65.5 786.6Z" fill="#e0864a"/>
<path d="M69.6 794.5 L68.6 795.2 L68.6 797.1 L69.5 798.9 L70.8 799.1 L71.4 797.6 L70.8 795.5Z" fill="#9fc48a"/>
<path d="M81.5 821.4 L80.5 822.9 L79.3 825.2 L78.9 826.5 L79.5 825.9 L80.8 823.9 L81.7 821.8Z" fill="#e9c46a"/>
<path d="M73.5 824.8 L72.3 825.3 L71.2 826.7 L70.9 828.0 L71.7 828.3 L73.0 827.2 L73.8 825.7Z" fill="#f0e27a"/>
<path d="M56.4 777.6 L54.5 776.3 L53.6 776.5 L54.0 778.1 L55.5 780.1 L57.2 780.8 L57.7 779.5Z" fill="#d9a0c0"/>
<path d="M77.1 786.5 L75.8 785.5 L75.1 785.9 L75.5 787.4 L76.6 788.9 L77.8 789.3 L78.0 788.2Z" fill="#a8cf7a"/>
<path d="M47.6 793.4 L45.9 792.6 L44.1 793.9 L43.4 796.3 L44.5 798.1 L46.6 797.8 L47.9 795.7Z" fill="#c6a57a"/>
<path d="M51.9 827.2 L49.3 826.2 L46.1 827.2 L44.9 829.5 L46.4 831.4 L49.5 831.4 L51.9 829.6Z" fill="#b99a70"/>
<path d="M82.6 804.4 L81.3 806.5 L80.8 810.6 L81.5 813.7 L82.8 813.3 L83.9 809.8 L83.8 805.8Z" fill="#f3ea9a"/>
<path d="M66.7 777.4 L65.3 777.3 L66.1 778.8 L68.3 781.1 L70.5 782.3 L71.0 781.3 L69.3 779.1Z" fill="#f0e27a"/>
<path d="M40.5 826.2 L38.9 824.4 L36.2 823.9 L34.4 825.2 L34.8 827.2 L37.2 828.5 L39.7 828.0Z" fill="#9fc48a"/>
<path d="M41.0 792.7 L39.7 790.0 L36.8 790.1 L34.0 792.7 L33.7 796.2 L36.4 797.9 L39.8 796.2Z" fill="#b99a70"/>
<path d="M80.5 799.6 L79.3 800.0 L78.7 802.7 L79.2 805.5 L80.4 806.5 L81.6 804.7 L81.6 801.6Z" fill="#8fc46a"/>
<path d="M83.4 806.2 L82.8 806.4 L82.4 807.9 L82.4 809.5 L82.9 810.0 L83.5 809.0 L83.7 807.3Z" fill="#a8cf7a"/>
<path d="M63.9 783.8 L63.3 784.1 L63.6 785.3 L64.5 786.7 L65.5 787.0 L65.8 786.1 L65.0 784.7Z" fill="#a8cf7a"/>
<path d="M53.1 814.5 L50.4 814.8 L48.5 817.2 L48.9 820.0 L51.3 821.1 L53.8 819.6 L54.6 816.6Z" fill="#9fc48a"/>
<path d="M56.7 785.6 L55.6 786.9 L55.8 789.9 L57.5 792.4 L59.5 792.4 L60.0 789.8 L58.6 786.8Z" fill="#e0864a"/>
<path d="M76.7 797.8 L74.5 797.3 L72.8 799.8 L72.9 803.7 L74.8 805.9 L77.2 804.8 L78.0 801.1Z" fill="#a8cf7a"/>
<path d="M64.0 772.1 L62.3 771.9 L61.2 772.5 L60.0 773.6 L58.5 775.0 L56.6 776.6 L54.6 778.5 L52.9 780.4 L52.5 782.5 L54.3 784.4 L58.6 785.4 L64.3 785.0 L69.0 782.7 L70.7 779.2 L69.3 775.8 L66.5 773.3Z" fill="#b79f78"/>
<path d="M40.9 776.9 L42.5 775.1 L43.7 773.7 L44.5 772.8 L44.7 772.4 L43.9 772.4 L42.1 772.7 L39.6 773.3 L36.7 774.4 L34.1 775.8 L32.3 777.5 L31.7 779.2 L32.4 780.4 L34.2 780.7 L36.6 780.1 L38.9 778.7Z" fill="#ee8f8f"/>
<path d="M77.3 781.8 L76.1 780.5 L75.3 779.9 L74.8 780.2 L74.6 781.3 L74.8 783.0 L75.3 785.2 L76.1 787.6 L77.3 789.9 L78.9 791.7 L80.5 792.6 L81.7 792.3 L82.2 791.0 L81.7 788.9 L80.5 786.3 L78.9 783.9Z" fill="#8fc46a"/>
<path d="M81.0 797.5 L80.2 795.8 L79.1 794.7 L78.0 794.3 L77.1 794.7 L76.4 795.7 L76.1 797.2 L76.2 799.2 L76.6 801.2 L77.4 802.9 L78.4 804.1 L79.6 804.6 L80.6 804.2 L81.3 803.1 L81.7 801.4 L81.6 799.5Z" fill="#f0e27a"/>
</g>
<use href="#v4p" fill="none" stroke="#7a6a50" stroke-width="0.4" opacity="0.7"/>
<circle cx="47.9" cy="805.5" r="37.4" fill="none" stroke="#a59a80" stroke-width="0.8" opacity="0.8"/></g>
<g transform="translate(79.7 838.6)"><path d="M0 -8 L2.2 -2.600 L8 -2.300 L3.500 1.500 L5 7.200 L0 4 L-5 7.200 L-3.500 1.500 L-8 -2.300 L-2.200 -2.600Z" fill="#000" opacity="0.45" transform="translate(0.8 1.2)"/><path d="M0 -8 L2.2 -2.600 L8 -2.300 L3.500 1.500 L5 7.200 L0 4 L-5 7.200 L-3.500 1.500 L-8 -2.300 L-2.200 -2.600Z" fill="url(#starg)" stroke="#f4f4f4" stroke-width="0.6"/></g>
</svg>
<div style="position:absolute;left:295px;top:101px;width:799px;height:755px;background:#000;overflow:hidden">
<svg width="799" height="755" viewBox="295 101 799 755" style="position:absolute;left:0;top:0">
<defs>
<radialGradient id="halog" cx="693.2" cy="478.0" r="207.8" gradientUnits="userSpaceOnUse">
<stop offset="0.90" stop-color="#fff" stop-opacity="1"/><stop offset="0.9182" stop-color="#fff" stop-opacity="0.92"/>
<stop offset="0.9278" stop-color="#f4f4f4" stop-opacity="0.72"/><stop offset="0.9423" stop-color="#e6e6e6" stop-opacity="0.46"/><stop offset="0.9615" stop-color="#d8d8d8" stop-opacity="0.22"/><stop offset="0.9808" stop-color="#ccc" stop-opacity="0.07"/><stop offset="1" stop-color="#bbb" stop-opacity="0"/></radialGradient>
<radialGradient id="oceang" cx="693.2" cy="478.0" r="190.8" gradientUnits="userSpaceOnUse">
<stop offset="0" stop-color="#0c2a6c"/><stop offset="0.6" stop-color="#0a2259"/><stop offset="0.92" stop-color="#091b48"/><stop offset="1" stop-color="#16306a"/></radialGradient>
<radialGradient id="limbg" cx="693.2" cy="478.0" r="190.8" gradientUnits="userSpaceOnUse">
<stop offset="0" stop-color="#cfe0ff" stop-opacity="0"/><stop offset="0.94" stop-color="#cfe0ff" stop-opacity="0"/><stop offset="0.985" stop-color="#cfe0ff" stop-opacity="0.22"/><stop offset="1" stop-color="#eef4ff" stop-opacity="0.75"/></radialGradient>
<radialGradient id="sung" cx="462.5" cy="578" r="50" gradientUnits="userSpaceOnUse">
<stop offset="0" stop-color="#fffbe8" stop-opacity="0.95"/><stop offset="0.22" stop-color="#f4f1e2" stop-opacity="0.62"/><stop offset="0.45" stop-color="#e4e2d6" stop-opacity="0.3"/><stop offset="0.72" stop-color="#d8d6cc" stop-opacity="0.1"/><stop offset="1" stop-color="#d8d6cc" stop-opacity="0"/></radialGradient>
<radialGradient id="flareg"><stop offset="0" stop-color="#fff" stop-opacity="0.85"/><stop offset="0.4" stop-color="#fff" stop-opacity="0.3"/><stop offset="1" stop-color="#fff" stop-opacity="0"/></radialGradient>
<radialGradient id="navring" cx="1044.200" cy="495.800" r="33.500" gradientUnits="userSpaceOnUse"><stop offset="0.75" stop-color="#6d6d6d"/><stop offset="0.92" stop-color="#848484"/><stop offset="1" stop-color="#7a7a7a"/></radialGradient>
<linearGradient id="navwhite" x1="0" y1="0" x2="0" y2="1"><stop offset="0" stop-color="#ffffff"/><stop offset="1" stop-color="#ededed"/></linearGradient>
<linearGradient id="navwhite2" x1="0" y1="0" x2="0" y2="1"><stop offset="0" stop-color="#ffffff"/><stop offset="1" stop-color="#e6e6e6"/></linearGradient>
<radialGradient id="knobg" cx="0.45" cy="0.35" r="0.7"><stop offset="0" stop-color="#ffffff"/><stop offset="0.7" stop-color="#f2f2f2"/><stop offset="1" stop-color="#cfcfcf"/></radialGradient>
<filter id="blur1" x="-20%" y="-20%" width="140%" height="140%"><feGaussianBlur stdDeviation="0.8"/></filter>
<filter id="blur2" x="-20%" y="-20%" width="140%" height="140%"><feGaussianBlur stdDeviation="2.200"/></filter>
<filter id="blur6" x="-30%" y="-30%" width="160%" height="160%"><feGaussianBlur stdDeviation="4.500"/></filter>
<filter id="blur8" x="-30%" y="-30%" width="160%" height="160%"><feGaussianBlur stdDeviation="8"/></filter>
<filter id="cloudf" x="482.40000000000003" y="267.2" width="421.6" height="421.6" filterUnits="userSpaceOnUse">
<feTurbulence type="fractalNoise" baseFrequency="0.06 0.09" numOctaves="6" seed="11" result="n"/>
<feColorMatrix in="n" type="matrix" values="0 0 0 0 1  0 0 0 0 1  0 0 0 0 1  2.200 0 0 0 -0.600" result="na"/>
<feGaussianBlur in="SourceGraphic" stdDeviation="4" result="b"/>
<feComposite in="na" in2="b" operator="arithmetic" k1="0" k2="1.700" k3="1.900" k4="-1.950" result="c"/>
<feGaussianBlur in="c" stdDeviation="0.55"/>
</filter>
<filter id="streakf" x="407.0" y="191.79999999999995" width="572.4000000000001" height="572.4000000000001" filterUnits="userSpaceOnUse">
<feTurbulence type="fractalNoise" baseFrequency="0.022 0.11" numOctaves="5" seed="5" result="n"/>
<feColorMatrix in="n" type="matrix" values="0 0 0 0 1  0 0 0 0 1  0 0 0 0 1  2.200 0 0 0 -0.600" result="na"/>
<feGaussianBlur in="SourceGraphic" stdDeviation="4" result="b"/>
<feComposite in="na" in2="b" operator="arithmetic" k1="0" k2="1.700" k3="1.900" k4="-1.950" result="c"/>
<feGaussianBlur in="c" stdDeviation="0.5"/>
</filter>
<filter id="blur3" x="-30%" y="-30%" width="160%" height="160%"><feGaussianBlur stdDeviation="2.600"/></filter>
<filter id="oceannoise" x="0" y="0" width="1" height="1">
<feTurbulence type="fractalNoise" baseFrequency="0.035 0.05" numOctaves="4" seed="23" result="n"/>
<feColorMatrix in="n" type="matrix" values="0 0 0 0 0.020  0 0 0 0 0.050  0 0 0 0 0.150  0 0 0 2.600 -1.050"/>
</filter>
<filter id="landnoise" x="0" y="0" width="1" height="1">
<feTurbulence type="fractalNoise" baseFrequency="0.09" numOctaves="3" seed="4" result="n"/>
<feColorMatrix in="n" type="matrix" values="0 0 0 0 0.250  0 0 0 0 0.220  0 0 0 0 0.100  0 0 0 1.800 -0.750"/>
</filter>
</defs>
<rect x="295" y="101" width="799" height="755" fill="#000"/>
<path d="M554.1 215.6h0M818.8 288.9h0M640.2 336.9h0M496.7 581.1h0M401.2 273.1h0M801.2 626.8h0M303.4 606.0h0M850.7 835.5h0" stroke="#b9c6f5" stroke-width="1.4" stroke-linecap="round" opacity="0.55" fill="none"/>
<path d="M950.6 172.9h0M1051.1 576.9h0M759.5 583.1h0M1021.2 668.9h0M1011.6 171.2h0M776.9 577.6h0M811.9 677.9h0M666.7 301.6h0M449.8 376.3h0M339.4 529.0h0M840.0 803.4h0M868.4 572.8h0M663.1 804.1h0M915.3 478.5h0M1015.8 188.0h0M1056.4 474.6h0M842.1 395.3h0M760.4 824.6h0M991.3 194.5h0M920.7 344.3h0" stroke="#f3ecc0" stroke-width="1.4" stroke-linecap="round" opacity="1.0" fill="none"/>
<path d="M467.1 166.7h0M911.5 484.3h0M637.4 262.2h0M560.2 571.8h0M836.6 241.4h0M519.8 768.6h0M754.5 793.7h0M320.2 313.3h0M710.3 437.7h0M629.4 291.7h0M542.4 761.1h0" stroke="#f3ecc0" stroke-width="1.4" stroke-linecap="round" opacity="0.55" fill="none"/>
<path d="M368.3 421.7h0M796.0 654.6h0M453.9 702.2h0M982.4 449.0h0M752.6 800.2h0M536.3 631.5h0M549.8 426.3h0M359.5 336.2h0M960.1 713.2h0M782.8 310.4h0M392.8 220.0h0M628.5 662.2h0" stroke="#b9c6f5" stroke-width="2.1" stroke-linecap="round" opacity="0.55" fill="none"/>
<path d="M762.7 139.3h0M383.6 554.3h0M420.3 514.9h0M463.2 814.0h0M503.9 697.2h0M819.7 132.6h0M546.0 644.5h0M616.4 301.0h0M1070.6 324.6h0M492.5 255.0h0M760.2 596.9h0M771.3 614.8h0M801.0 572.8h0M606.9 415.0h0M800.7 711.4h0M937.7 673.1h0M841.4 364.8h0" stroke="#ffffff" stroke-width="1.4" stroke-linecap="round" opacity="1.0" fill="none"/>
<path d="M980.2 320.1h0M507.0 726.1h0M916.9 350.2h0M408.8 568.2h0M576.1 821.5h0M427.6 102.3h0M949.4 230.3h0M583.2 588.8h0M531.5 683.4h0M713.7 716.6h0M485.9 269.8h0M543.8 582.7h0" stroke="#ffffff" stroke-width="2.1" stroke-linecap="round" opacity="0.55" fill="none"/>
<path d="M751.0 523.9h0M938.4 718.2h0M914.9 560.2h0M613.4 468.9h0M934.9 165.1h0M1084.6 841.4h0M610.0 327.6h0M907.3 566.6h0M843.3 500.5h0M756.5 376.6h0M582.3 214.5h0M1009.2 593.5h0M450.0 585.6h0M444.0 442.3h0M749.5 441.4h0" stroke="#b9c6f5" stroke-width="1.6" stroke-linecap="round" opacity="0.55" fill="none"/>
<path d="M863.6 527.0h0M428.6 404.4h0M954.4 260.9h0M1007.5 254.5h0M1044.8 586.5h0M667.3 679.7h0M352.1 496.9h0M1021.6 144.5h0M339.3 119.8h0M951.7 683.9h0M746.6 133.4h0M462.0 299.9h0M1042.3 613.8h0M1048.9 663.9h0M1057.7 278.1h0M632.4 588.3h0M505.8 780.6h0M808.2 626.5h0M712.2 223.2h0M887.0 809.8h0M803.9 598.4h0M925.3 812.6h0M389.6 401.3h0M835.8 610.2h0M316.1 632.0h0" stroke="#f3ecc0" stroke-width="1.6" stroke-linecap="round" opacity="0.8" fill="none"/>
<path d="M838.3 424.0h0M752.7 761.2h0M984.6 311.7h0M728.9 122.4h0M695.4 677.1h0M824.0 715.7h0M700.7 288.5h0M415.0 794.1h0M296.9 389.4h0M527.0 382.3h0M1041.7 289.7h0M739.0 342.4h0M337.3 147.3h0M793.8 258.9h0M704.6 235.9h0M964.0 190.7h0M580.6 270.9h0M909.1 555.3h0M768.3 822.8h0M737.3 345.5h0M817.6 343.2h0M588.9 534.9h0M542.6 145.3h0M369.5 708.8h0M362.7 140.4h0M1035.4 268.1h0M789.4 228.4h0M790.9 793.2h0M604.2 515.1h0M598.5 442.6h0M563.0 758.2h0M797.6 539.3h0M750.4 641.6h0" stroke="#f3ecc0" stroke-width="1.8" stroke-linecap="round" opacity="1.0" fill="none"/>
<path d="M1032.0 374.3h0M681.1 605.7h0M915.2 103.0h0M1073.2 650.7h0M629.8 825.3h0M560.6 558.2h0M376.5 341.2h0M679.6 228.9h0" stroke="#ffffff" stroke-width="1.6" stroke-linecap="round" opacity="1.0" fill="none"/>
<path d="M917.5 163.6h0M984.1 626.2h0M454.9 310.7h0M335.3 458.5h0M347.6 127.5h0M782.5 291.9h0M1017.3 445.7h0M481.6 538.4h0M703.8 768.5h0M489.1 268.9h0M500.5 776.6h0M714.6 176.5h0M683.9 433.4h0M1091.3 550.8h0" stroke="#f3ecc0" stroke-width="2.1" stroke-linecap="round" opacity="0.8" fill="none"/>
<path d="M993.5 651.3h0M416.6 178.4h0M506.5 169.6h0M1060.7 385.6h0M943.1 577.1h0M573.5 739.9h0M587.8 459.3h0M522.5 359.5h0M373.4 438.5h0M882.6 237.7h0M973.4 312.3h0M624.6 147.3h0" stroke="#f3ecc0" stroke-width="2.1" stroke-linecap="round" opacity="0.55" fill="none"/>
<path d="M390.1 416.8h0M575.1 476.0h0M884.5 401.6h0M1004.5 428.7h0M452.0 341.8h0M1069.8 552.9h0M356.9 798.8h0M547.5 684.2h0M623.4 713.3h0M747.8 382.8h0M307.8 517.3h0M618.4 739.3h0M402.6 377.8h0M649.7 807.7h0M348.6 755.4h0M854.8 544.3h0M1037.4 239.8h0M662.4 168.0h0M922.7 636.3h0M563.2 736.0h0M508.2 242.1h0M666.5 543.2h0M338.7 491.6h0M538.0 461.8h0M974.9 656.2h0M572.7 171.7h0M404.8 634.4h0M858.4 106.4h0M419.4 839.4h0M353.2 110.1h0" stroke="#b9c6f5" stroke-width="1.8" stroke-linecap="round" opacity="0.55" fill="none"/>
<path d="M1039.8 419.5h0M1020.6 361.0h0M391.7 799.6h0M1000.4 736.4h0M912.1 363.1h0M747.2 639.9h0M924.0 627.0h0M664.3 225.9h0M358.7 734.0h0M440.5 129.8h0M436.0 554.3h0M891.0 225.7h0M778.9 364.0h0M605.1 433.2h0M899.3 219.6h0" stroke="#b9c6f5" stroke-width="1.4" stroke-linecap="round" opacity="1.0" fill="none"/>
<path d="M965.5 813.3h0M347.8 652.6h0M870.4 474.1h0M626.6 314.2h0M1049.7 181.7h0M458.6 293.9h0M950.2 774.2h0M455.0 559.9h0M508.0 519.0h0M1009.1 284.5h0M311.7 748.5h0M345.0 158.6h0M301.3 735.1h0M365.8 852.4h0M451.5 115.3h0M521.0 405.7h0M377.4 643.3h0" stroke="#f3ecc0" stroke-width="2.5" stroke-linecap="round" opacity="1.0" fill="none"/>
<path d="M1087.5 720.9h0M783.4 550.7h0M336.2 253.9h0M689.7 390.1h0M512.0 289.1h0M850.6 642.9h0M448.0 593.3h0M315.3 278.1h0M721.6 593.8h0M805.5 843.0h0M725.1 384.5h0M578.7 742.6h0M901.2 322.7h0M435.9 595.9h0" stroke="#f3ecc0" stroke-width="2.5" stroke-linecap="round" opacity="0.8" fill="none"/>
<path d="M1003.0 363.3h0M497.0 363.6h0M940.4 646.5h0M555.8 492.3h0M352.4 659.9h0M586.2 349.7h0M368.0 664.9h0M587.1 476.9h0M895.4 477.1h0M599.0 680.9h0M890.9 621.3h0M622.6 315.3h0M396.9 812.1h0M666.8 438.5h0M450.4 841.2h0M787.0 427.5h0M626.9 563.7h0M298.1 645.5h0M844.8 344.1h0M472.7 131.1h0M796.8 442.6h0M645.9 214.5h0M769.6 821.9h0M554.2 347.1h0M599.4 327.9h0M846.5 104.9h0M1070.3 320.9h0M491.2 246.0h0M961.5 198.2h0M387.2 319.9h0M382.7 470.1h0M479.5 204.7h0" stroke="#f3ecc0" stroke-width="1.8" stroke-linecap="round" opacity="0.55" fill="none"/>
<path d="M782.9 473.8h0M615.2 245.5h0M471.7 272.8h0M813.8 498.5h0M999.9 144.8h0M512.7 784.1h0M437.8 363.3h0M541.3 264.0h0M323.5 766.4h0M883.2 291.9h0M538.6 529.5h0M1001.2 589.3h0M827.9 798.6h0M648.6 184.0h0M317.4 182.3h0M862.0 751.4h0M465.2 216.3h0M407.4 438.8h0M676.6 575.0h0M939.2 358.7h0M987.9 536.0h0M989.0 642.0h0M989.8 601.3h0M667.7 504.0h0M980.9 815.6h0M643.2 312.2h0M576.6 575.5h0M328.2 132.1h0" stroke="#ffffff" stroke-width="1.8" stroke-linecap="round" opacity="0.55" fill="none"/>
<path d="M1000.7 823.2h0M940.3 594.0h0M328.2 323.1h0M619.6 281.0h0M681.9 672.2h0M1007.1 454.3h0M937.2 203.2h0M386.1 363.7h0M458.8 423.1h0" stroke="#ffffff" stroke-width="1.4" stroke-linecap="round" opacity="0.55" fill="none"/>
<path d="M416.6 597.9h0M441.3 314.3h0M608.7 402.4h0M506.8 193.6h0M738.5 538.8h0M504.4 586.9h0M890.3 696.2h0M573.7 348.0h0M377.0 391.3h0M306.7 758.6h0M989.0 199.1h0M428.7 829.7h0M800.3 694.9h0M642.9 788.7h0M847.3 110.1h0M705.9 210.2h0M488.7 199.8h0" stroke="#ffffff" stroke-width="1.8" stroke-linecap="round" opacity="1.0" fill="none"/>
<path d="M590.3 528.5h0M674.4 805.8h0M506.2 446.1h0M417.2 833.8h0M780.3 581.2h0M854.5 125.2h0M442.5 488.9h0M947.3 124.6h0M511.9 560.5h0M733.0 674.7h0" stroke="#ffffff" stroke-width="2.5" stroke-linecap="round" opacity="1.0" fill="none"/>
<path d="M1053.3 595.2h0M565.4 447.4h0M595.3 451.4h0M1014.6 421.1h0M965.2 627.3h0M693.2 184.8h0M1073.1 594.9h0M692.7 495.2h0M763.6 716.4h0M460.6 293.8h0M1015.5 783.1h0M1075.9 210.7h0" stroke="#b9c6f5" stroke-width="1.4" stroke-linecap="round" opacity="0.8" fill="none"/>
<path d="M1012.9 689.3h0M808.6 135.0h0M761.5 774.3h0M774.0 351.8h0M557.9 282.1h0M828.3 593.3h0M595.7 212.7h0M321.5 147.6h0M519.1 570.3h0M541.5 109.6h0M908.9 529.0h0M847.2 658.2h0M523.9 563.9h0" stroke="#b9c6f5" stroke-width="2.5" stroke-linecap="round" opacity="1.0" fill="none"/>
<path d="M352.0 258.6h0M459.6 818.9h0M308.2 654.0h0M1029.2 588.1h0M496.6 287.2h0M376.8 399.7h0M592.7 251.8h0M1079.0 577.0h0M569.3 660.8h0M689.0 146.0h0M441.6 741.8h0M440.0 737.1h0M308.3 787.4h0M719.0 154.2h0M965.3 561.3h0M1041.9 366.7h0M650.7 530.6h0" stroke="#f3ecc0" stroke-width="1.6" stroke-linecap="round" opacity="1.0" fill="none"/>
<path d="M387.9 469.5h0M672.4 247.8h0M934.3 833.7h0M858.9 850.5h0M1007.6 692.4h0M834.5 321.0h0M356.9 483.5h0M536.7 208.0h0M392.4 351.5h0M625.9 496.7h0M321.4 602.3h0M451.4 149.3h0M1056.3 393.0h0M901.4 689.2h0M545.0 528.6h0M1059.5 325.2h0M1078.4 735.7h0M797.8 290.3h0M579.3 144.6h0M692.6 325.5h0M426.7 705.8h0M1049.1 692.8h0M829.3 271.8h0M319.1 159.3h0M520.1 169.7h0" stroke="#f3ecc0" stroke-width="1.8" stroke-linecap="round" opacity="0.8" fill="none"/>
<path d="M544.5 210.5h0M640.4 474.7h0M519.7 140.9h0M424.8 258.5h0M321.7 636.3h0M310.5 679.3h0M535.3 138.5h0M872.5 836.0h0M867.7 487.7h0M920.9 207.7h0M382.5 136.9h0M580.3 286.3h0M615.4 733.4h0M937.1 789.3h0M549.5 838.8h0M348.2 194.8h0" stroke="#b9c6f5" stroke-width="1.8" stroke-linecap="round" opacity="1.0" fill="none"/>
<path d="M1019.9 369.8h0M905.4 435.0h0M978.6 675.6h0M1016.6 698.1h0M449.3 639.0h0M661.2 815.2h0M393.3 407.5h0" stroke="#ffffff" stroke-width="2.1" stroke-linecap="round" opacity="1.0" fill="none"/>
<path d="M708.6 369.7h0M1081.1 695.6h0M674.8 278.8h0M424.1 423.2h0M774.6 725.4h0M453.2 650.2h0M842.8 645.0h0M525.8 667.1h0M605.8 470.8h0M393.0 112.3h0M643.2 385.9h0" stroke="#ffffff" stroke-width="1.4" stroke-linecap="round" opacity="0.8" fill="none"/>
<path d="M680.7 843.9h0M400.2 216.3h0M662.2 220.6h0M513.0 823.1h0M1000.7 537.4h0M321.1 475.2h0M530.7 355.4h0M1059.3 730.7h0M331.5 852.8h0M671.2 381.9h0M426.3 381.5h0M665.8 281.5h0M728.2 798.1h0M820.0 529.5h0" stroke="#f3ecc0" stroke-width="1.4" stroke-linecap="round" opacity="0.8" fill="none"/>
<path d="M391.6 394.6h0M959.3 634.2h0M796.3 573.5h0M1074.1 297.9h0M382.7 471.4h0M687.2 472.1h0M777.2 406.7h0M1089.9 674.2h0M843.9 842.1h0M390.4 417.5h0M837.9 549.2h0M961.7 191.7h0M475.5 824.4h0M921.6 635.5h0M554.1 737.1h0M862.4 625.1h0M656.9 142.9h0M832.5 739.5h0" stroke="#b9c6f5" stroke-width="1.6" stroke-linecap="round" opacity="0.8" fill="none"/>
<path d="M888.5 165.9h0M1070.9 289.1h0M360.1 595.6h0M792.2 160.6h0M675.8 545.8h0M640.4 298.9h0M878.5 675.2h0" stroke="#ffffff" stroke-width="1.6" stroke-linecap="round" opacity="0.55" fill="none"/>
<path d="M318.0 546.9h0M536.3 448.9h0M1033.4 812.0h0M556.3 173.6h0M769.5 621.0h0M892.3 546.1h0M950.0 847.7h0M578.0 229.6h0M926.8 260.2h0M409.1 526.1h0" stroke="#f3ecc0" stroke-width="2.5" stroke-linecap="round" opacity="0.55" fill="none"/>
<path d="M630.0 200.7h0M949.4 741.7h0M422.8 817.3h0M869.5 139.3h0M786.1 206.3h0M471.4 784.4h0M457.1 117.1h0M674.4 718.8h0M1024.4 715.5h0M972.7 687.9h0M760.4 422.6h0M387.7 501.6h0M797.9 398.9h0M365.7 667.8h0M500.6 314.8h0M577.4 583.0h0M954.9 322.5h0M763.6 262.8h0M420.1 306.1h0M884.8 661.7h0M546.9 778.8h0M422.9 367.7h0M588.2 703.9h0M556.4 241.0h0" stroke="#b9c6f5" stroke-width="1.8" stroke-linecap="round" opacity="0.8" fill="none"/>
<path d="M649.3 563.2h0M719.3 257.0h0M340.2 602.9h0M639.2 171.1h0M687.6 477.1h0M906.5 147.3h0M577.0 367.8h0M725.2 853.7h0" stroke="#f3ecc0" stroke-width="2.1" stroke-linecap="round" opacity="1.0" fill="none"/>
<path d="M392.9 434.9h0M999.6 830.6h0M635.0 156.5h0M683.2 834.3h0M403.4 807.3h0M308.1 298.1h0M1048.3 315.6h0M533.0 308.2h0M761.3 274.1h0M737.3 702.4h0M835.0 443.2h0M784.6 709.4h0M841.6 537.9h0M496.4 287.2h0" stroke="#ffffff" stroke-width="2.5" stroke-linecap="round" opacity="0.55" fill="none"/>
<path d="M556.7 312.1h0M871.1 550.5h0M979.1 852.1h0M375.6 175.7h0M657.8 337.7h0M577.5 850.3h0M435.1 225.3h0M444.0 582.5h0" stroke="#b9c6f5" stroke-width="2.5" stroke-linecap="round" opacity="0.55" fill="none"/>
<path d="M629.0 791.3h0M459.6 832.3h0M574.7 130.2h0M412.3 315.3h0M529.5 560.0h0M745.9 405.1h0M1068.8 400.5h0M365.7 230.0h0M722.1 406.3h0M982.4 201.5h0M330.6 776.5h0" stroke="#f3ecc0" stroke-width="1.6" stroke-linecap="round" opacity="0.55" fill="none"/>
<path d="M716.0 281.5h0M335.0 799.9h0M407.3 246.9h0M857.6 333.5h0M1000.2 653.7h0M704.0 396.9h0M646.2 241.9h0M942.0 403.5h0M880.2 664.6h0M784.3 596.6h0M1077.8 325.0h0M833.9 538.9h0M498.4 130.5h0M812.9 801.1h0M847.2 664.1h0M763.2 605.1h0M654.5 392.4h0M729.5 290.0h0M855.2 439.4h0" stroke="#ffffff" stroke-width="1.6" stroke-linecap="round" opacity="0.8" fill="none"/>
<path d="M762.7 500.5h0M844.5 773.0h0M614.0 697.6h0M729.1 223.1h0M964.5 250.6h0M587.6 664.7h0M784.1 634.9h0M564.6 367.4h0M458.9 748.4h0" stroke="#b9c6f5" stroke-width="1.6" stroke-linecap="round" opacity="1.0" fill="none"/>
<path d="M479.3 125.5h0M401.8 475.9h0M655.3 149.9h0M909.6 515.3h0M544.1 272.5h0" stroke="#ffffff" stroke-width="2.5" stroke-linecap="round" opacity="0.8" fill="none"/>
<path d="M877.3 256.5h0M602.4 344.5h0" stroke="#b9c6f5" stroke-width="2.5" stroke-linecap="round" opacity="0.8" fill="none"/>
<path d="M1075.6 807.0h0M691.1 243.0h0M1070.8 232.4h0M595.5 379.8h0M912.4 538.1h0M1001.8 512.7h0M959.6 542.3h0M841.8 555.1h0M612.7 192.3h0M936.9 298.3h0M324.9 832.8h0M316.2 399.6h0" stroke="#ffffff" stroke-width="1.8" stroke-linecap="round" opacity="0.8" fill="none"/>
<path d="M686.4 157.1h0M977.0 145.0h0M562.0 843.2h0M322.8 847.8h0M745.9 584.4h0M477.3 273.0h0M514.5 656.2h0M903.3 134.9h0M891.6 351.8h0" stroke="#b9c6f5" stroke-width="2.1" stroke-linecap="round" opacity="0.8" fill="none"/>
<path d="M790.4 609.6h0M780.9 690.3h0M514.3 742.9h0M605.8 418.6h0M990.0 105.3h0M524.2 134.3h0" stroke="#b9c6f5" stroke-width="2.1" stroke-linecap="round" opacity="1.0" fill="none"/>
<path d="M697.4 236.6h0M1009.3 605.2h0M621.3 645.4h0M446.1 773.2h0" stroke="#ffffff" stroke-width="2.1" stroke-linecap="round" opacity="0.8" fill="none"/>
<g stroke="#8f8f8f" stroke-width="1" fill="none" opacity="0.85">
<path d="M496.8 174.9 L387.9 219.8 L376.2 240.3 L361.9 267.7 L322.1 352.6"/>
<path d="M376.2 240.3 L436.9 293.7 L489.9 378.9"/>
<path d="M516.9 275.8 L583.8 324.0"/>
<path d="M912.0 103.2 L936.8 127.6"/>
<path d="M723.0 265.8 L746.8 180.5 L851.1 218.8 L927.0 303.8 L969.6 372.7 L960.0 383.0 L944.8 401.0 L905.8 444.8 L884.6 455.7"/>
<path d="M723.0 265.8 L731.5 290.6"/>
<path d="M1005.0 169.6 L1018.9 147.7 L1062.6 229.7 L1045.1 271.0 L1029.8 288.8 L1032.7 378.2 L972.2 401.0 L882.8 435.6"/>
<path d="M1005.0 169.6 L1029.8 175.8"/>
<path d="M315.0 488.4 L311.8 515.8 L295.0 605.8"/>
<path d="M311.8 515.8 L295.0 523.5"/>
<path d="M536.7 620.7 L511.5 638.0 L524.6 661.7 L562.0 626.6 L536.7 620.7"/>
<path d="M524.6 661.7 L622.2 706.3"/>
<path d="M622.2 706.3 L624.5 668.0"/>
<path d="M622.2 706.3 L656.0 672.0"/>
<path d="M562.0 626.6 L590.0 640.0"/>
<path d="M975.8 558.5 L927.3 620.2"/>
<path d="M983.1 591.7 L927.3 620.2"/>
<path d="M978.0 631.9 L927.3 620.2"/>
<path d="M927.3 620.2 L906.5 627.1 L887.2 646.1 L842.7 708.4 L831.4 748.2 L817.9 793.0 L780.0 799.6 L728.6 796.7 L707.0 765.7 L718.7 754.8 L740.6 735.4"/>
<path d="M1094.0 468.5 L1074.3 494.0"/>
<path d="M547.3 738.5 L530.1 739.6 L525.0 749.5 L526.8 764.8 L533.8 775.8 L548.0 791.5"/>
<path d="M628.3 826.0 L628.3 856.0"/>
<path d="M940.0 763.2 L975.8 797.8 L1002.0 797.8 L1020.7 753.0"/>
<path d="M975.8 797.8 L981.3 856.0"/>
<path d="M1002.0 797.8 L1026.9 829.5 L1025.0 856.0"/>
<path d="M1030.5 819.7 L1065.9 828.8 L1094.0 811.3"/>
<path d="M860.0 856.0 L858.0 846.0"/>
</g>
<g stroke="#9a9a9a" stroke-width="1" fill="none" stroke-dasharray="1 3" opacity="0.8">
<path d="M295 349.6 Q440 326 587.5 316.7"/>
<path d="M800.8 318.7 Q950 327 1094 349"/>
<path d="M295 566.3 L462 578 L536 582"/>
<path d="M862.8 577.2 Q980 569 1094 557.1"/>
</g>
<text x="400.0" y="265.3" font-size="14.2" fill="#5b5b5b" textLength="41.0" lengthAdjust="spacing" >Aquila</text>
<text x="935.7" y="273.3" font-size="14.2" fill="#5b5b5b" textLength="46.7" lengthAdjust="spacing" >Serpens</text>
<text x="862.4" y="333.9" font-size="14.2" fill="#5b5b5b" textLength="62.6" lengthAdjust="spacing" >Ophiuchus</text>
<text x="480.7" y="597.5" font-size="14.2" fill="#5b5b5b" textLength="46.3" lengthAdjust="spacing" >Aurinko</text>
<text x="584.0" y="649.9" font-size="14.2" fill="#5b5b5b" textLength="66.0" lengthAdjust="spacing" >Sagittarius</text>
<text x="840.0" y="703.5" font-size="14.2" fill="#5b5b5b" textLength="50.0" lengthAdjust="spacing" >Scorpius</text>
<text x="532.7" y="759.5" font-size="14.2" fill="#5b5b5b" textLength="95.3" lengthAdjust="spacing" >Corona Australis</text>
<text x="990.4" y="823.9" font-size="14.2" fill="#5b5b5b" textLength="34.6" lengthAdjust="spacing" >Lupus</text>
<text x="636.6" y="833.4" font-size="14.2" fill="#5b5b5b" textLength="75.4" lengthAdjust="spacing" >Telescopium</text>
<circle cx="496.8" cy="174.9" r="3.2" fill="#b9c6f5"/>
<circle cx="387.9" cy="219.8" r="3.2" fill="#f3ecc0"/>
<circle cx="361.9" cy="267.7" r="2.3" fill="#f3ecc0"/>
<circle cx="322.1" cy="352.6" r="2.2" fill="#b9c6f5"/>
<circle cx="436.9" cy="293.7" r="2.2" fill="#ffffff"/>
<circle cx="489.9" cy="378.9" r="2.2" fill="#b9c6f5"/>
<circle cx="516.9" cy="275.8" r="1.5" fill="#ffffff"/>
<circle cx="655.1" cy="211.8" r="2.2" fill="#ffffff"/>
<circle cx="368.1" cy="325.5" r="2.0" fill="#f3ecc0"/>
<circle cx="912" cy="103.2" r="2.8" fill="#f3ecc0"/>
<circle cx="936.8" cy="127.6" r="2.3" fill="#ffffff"/>
<circle cx="746.8" cy="180.5" r="3.0" fill="#ffffff"/>
<circle cx="851.1" cy="218.8" r="2.2" fill="#f3ecc0"/>
<circle cx="927" cy="303.8" r="2.2" fill="#b9c6f5"/>
<circle cx="969.6" cy="372.7" r="3.0" fill="#f3ecc0"/>
<circle cx="960" cy="383" r="2.2" fill="#f3ecc0"/>
<circle cx="723" cy="265.8" r="2.8" fill="#f3ecc0"/>
<circle cx="1018.9" cy="147.7" r="1.6" fill="#f3ecc0"/>
<circle cx="1005" cy="169.6" r="2.2" fill="#f3ecc0"/>
<circle cx="1029.8" cy="175.8" r="2.2" fill="#ffffff"/>
<circle cx="1062.6" cy="229.7" r="2.4" fill="#ffffff"/>
<circle cx="1045.1" cy="271" r="3.0" fill="#f3ecc0"/>
<circle cx="1029.8" cy="288.8" r="2.2" fill="#ffffff"/>
<circle cx="1032.7" cy="378.2" r="2.2" fill="#b9c6f5"/>
<circle cx="801.5" cy="164.8" r="2.0" fill="#f3ecc0"/>
<circle cx="458.8" cy="530.8" r="2.2" fill="#ffffff"/>
<circle cx="493.5" cy="563.7" r="3.0" fill="#ffffff"/>
<circle cx="507" cy="571" r="2.2" fill="#f3ecc0"/>
<circle cx="315" cy="488.4" r="2.2" fill="#f3ecc0"/>
<circle cx="311.8" cy="515.8" r="2.2" fill="#f3ecc0"/>
<circle cx="536.7" cy="620.7" r="3.0" fill="#ffffff"/>
<circle cx="511.5" cy="638" r="2.2" fill="#f3ecc0"/>
<circle cx="524.6" cy="661.7" r="3.0" fill="#ffffff"/>
<circle cx="562" cy="626.6" r="2.0" fill="#b9c6f5"/>
<circle cx="905.8" cy="444.8" r="3.0" fill="#b9c6f5"/>
<circle cx="975.8" cy="558.5" r="3.0" fill="#b9c6f5"/>
<circle cx="971" cy="568" r="1.8" fill="#b9c6f5"/>
<circle cx="983.1" cy="591.7" r="2.8" fill="#ffffff"/>
<circle cx="927.3" cy="620.2" r="2.8" fill="#ffffff"/>
<circle cx="978" cy="631.9" r="2.8" fill="#ffffff"/>
<circle cx="887.2" cy="646.1" r="2.8" fill="#ffffff"/>
<circle cx="975" cy="666.5" r="2.2" fill="#ffffff"/>
<circle cx="1011.6" cy="678.9" r="2.2" fill="#ffffff"/>
<circle cx="1019.6" cy="660.7" r="2.0" fill="#f3ecc0"/>
<circle cx="502" cy="779.5" r="2.4" fill="#b9c6f5"/>
<circle cx="638.7" cy="730.8" r="2.4" fill="#ffd9b0"/>
<circle cx="628.3" cy="826" r="1.8" fill="#ffffff"/>
<circle cx="842.7" cy="708.4" r="3.0" fill="#f3ecc0"/>
<circle cx="831.4" cy="748.2" r="2.6" fill="#ffffff"/>
<circle cx="817.9" cy="793" r="2.4" fill="#f3ecc0"/>
<circle cx="780" cy="799.6" r="2.2" fill="#ffffff"/>
<circle cx="707" cy="765.7" r="2.2" fill="#f3ecc0"/>
<circle cx="718.7" cy="754.8" r="3.0" fill="#ffffff"/>
<circle cx="746" cy="736.9" r="3.0" fill="#ffffff"/>
<circle cx="703" cy="734" r="2.2" fill="#f3ecc0"/>
<circle cx="940" cy="763.2" r="2.3" fill="#ffffff"/>
<circle cx="975.8" cy="797.8" r="3.2" fill="#ffffff"/>
<circle cx="1002" cy="797.8" r="2.4" fill="#ffffff"/>
<circle cx="1020.7" cy="753" r="2.2" fill="#f3ecc0"/>
<circle cx="1026.9" cy="829.5" r="3.0" fill="#ffffff"/>
<circle cx="1030.5" cy="819.7" r="2.0" fill="#ffffff"/>
<circle cx="1065.9" cy="828.8" r="3.0" fill="#ffffff"/>
<circle cx="974" cy="715.7" r="2.2" fill="#b9c6f5"/>
<circle cx="771.5" cy="771" r="1.5" fill="#ffffff"/>
<circle cx="547.3" cy="738.5" r="1.3" fill="#f3ecc0"/>
<circle cx="530.1" cy="739.6" r="1.3" fill="#f3ecc0"/>
<circle cx="525" cy="749.5" r="1.3" fill="#b9c6f5"/>
<circle cx="526.8" cy="764.8" r="1.3" fill="#f3ecc0"/>
<circle cx="533.8" cy="775.8" r="1.3" fill="#f3ecc0"/>
<circle cx="548" cy="791.5" r="1.3" fill="#b9c6f5"/>
<circle cx="376.2" cy="240.3" r="9.9" fill="url(#flareg)"/>
<path d="M365.2 240.3 L376.2 239.20000000000002 L387.2 240.3 L376.2 241.4Z M376.2 229.3 L377.3 240.3 L376.2 251.3 L375.09999999999997 240.3Z" fill="#ffffff"/>
<circle cx="376.2" cy="240.3" r="3.4" fill="#fff"/>
<circle cx="906.5" cy="627.1" r="9.0" fill="url(#flareg)"/>
<path d="M896.5 627.1 L906.5 626.0 L916.5 627.1 L906.5 628.2Z M906.5 617.1 L907.6 627.1 L906.5 637.1 L905.4 627.1Z" fill="#ffd9b0"/>
<circle cx="906.5" cy="627.1" r="3.4" fill="#fff"/>
<circle cx="622.2" cy="706.3" r="9.0" fill="url(#flareg)"/>
<path d="M612.2 706.3 L622.2 705.1999999999999 L632.2 706.3 L622.2 707.4Z M622.2 696.3 L623.3000000000001 706.3 L622.2 716.3 L621.1 706.3Z" fill="#b9c6f5"/>
<circle cx="622.2" cy="706.3" r="3.4" fill="#fff"/>
<circle cx="728.6" cy="796.7" r="8.1" fill="url(#flareg)"/>
<path d="M719.6 796.7 L728.6 795.6 L737.6 796.7 L728.6 797.8000000000001Z M728.6 787.7 L729.7 796.7 L728.6 805.7 L727.5 796.7Z" fill="#ffffff"/>
<circle cx="728.6" cy="796.7" r="3.4" fill="#fff"/>
<circle cx="740.6" cy="735.4" r="8.1" fill="url(#flareg)"/>
<path d="M731.6 735.4 L740.6 734.3 L749.6 735.4 L740.6 736.5Z M740.6 726.4 L741.7 735.4 L740.6 744.4 L739.5 735.4Z" fill="#ffffff"/>
<circle cx="740.6" cy="735.4" r="3.4" fill="#fff"/>
<circle cx="462.5" cy="578" r="50" fill="url(#sung)"/>
<circle cx="462.5" cy="578" r="11.8" fill="#fdf6dc"/>
<defs>
<clipPath id="globeclip"><circle cx="693.2" cy="478.0" r="190.8"/></clipPath>
<path id="landp" d="M602.2 401.3 L606.3 403.1 L610.5 404.9 L617.2 403.1 L623.9 401.1 L629.6 401.4 L635.4 401.6 L641.3 401.8 L641.4 413.7 L646.4 415.9 L651.5 418.0 L658.1 420.6 L664.8 423.2 L665.4 417.5 L673.6 418.4 L679.0 421.7 L684.7 422.8 L690.3 423.8 L699.7 423.1 L705.1 422.7 L707.4 428.5 L705.6 434.0 L700.7 427.3 L705.1 436.6 L709.9 446.3 L714.9 456.1 L716.2 463.3 L722.0 474.1 L729.2 480.4 L735.7 483.4 L735.3 486.8 L740.2 489.8 L747.9 486.9 L754.4 485.2 L760.7 483.5 L759.9 489.9 L757.5 496.8 L755.0 503.6 L750.5 512.2 L739.4 521.1 L732.9 527.9 L727.9 534.6 L723.6 542.6 L724.4 550.4 L727.3 559.4 L727.2 565.3 L727.1 571.2 L718.5 578.7 L708.8 585.9 L709.4 591.3 L709.9 596.6 L702.2 601.3 L701.4 608.1 L694.6 614.1 L686.3 619.8 L679.4 620.8 L672.7 621.4 L666.0 622.1 L661.1 620.1 L659.6 615.5 L654.1 607.0 L648.8 600.5 L647.4 595.2 L645.9 589.9 L641.5 584.2 L637.1 578.3 L635.6 569.6 L640.2 561.2 L638.1 552.0 L635.2 542.5 L631.2 535.9 L625.8 525.9 L626.4 516.3 L627.2 510.5 L623.5 507.8 L615.8 507.7 L611.5 500.9 L602.7 500.1 L592.4 502.9 L585.6 500.5 L577.4 501.6 L572.5 495.4 L567.7 491.0 L564.0 483.4 L560.8 475.9 L557.4 469.9 L557.1 462.3 L560.5 457.1 L563.2 447.5 L562.9 442.2 L567.3 434.8 L573.0 427.6 L578.1 422.8 L583.5 420.6 L587.4 417.4 L589.3 412.8 L593.9 407.8 L598.7 405.8Z M597.3 396.5 L598.5 391.3 L603.7 383.5 L605.3 378.5 L608.3 377.6 L614.8 379.4 L620.1 380.6 L622.7 377.7 L624.5 373.5 L623.7 369.6 L620.9 366.2 L624.8 365.4 L627.2 366.1 L629.1 363.5 L631.6 364.5 L636.0 361.1 L640.1 360.3 L643.2 357.7 L645.0 355.8 L649.0 355.4 L652.3 354.7 L653.2 350.9 L654.6 347.2 L659.2 345.9 L657.2 350.0 L655.6 352.9 L656.7 355.1 L659.8 354.3 L662.6 355.8 L667.3 354.6 L671.3 354.0 L673.5 355.2 L676.2 353.2 L676.9 348.8 L679.9 347.2 L682.9 348.5 L683.2 345.8 L682.1 343.6 L686.5 342.8 L689.8 342.8 L693.5 342.1 L690.7 340.5 L686.6 340.9 L681.5 342.0 L679.2 340.0 L679.9 336.0 L685.4 331.1 L686.7 329.7 L684.3 329.0 L682.2 329.5 L680.7 332.0 L675.0 335.3 L672.7 339.0 L674.7 341.5 L672.8 343.7 L669.3 347.2 L667.5 350.3 L664.0 351.8 L661.4 351.6 L661.7 349.6 L661.2 344.1 L660.7 342.2 L655.9 344.6 L652.7 343.3 L652.9 339.7 L655.3 335.2 L659.4 333.4 L664.6 331.7 L669.9 327.8 L674.1 324.0 L678.0 321.8 L681.9 320.5 L686.1 319.2 L688.9 318.9 L691.6 318.9 L694.3 320.2 L693.2 321.3 L696.7 321.9 L700.3 322.6 L703.3 323.8 L706.4 324.9 L707.7 327.3 L704.0 328.3 L699.1 327.4 L697.1 327.2 L699.8 330.7 L702.7 332.8 L704.7 331.9 L707.4 331.1 L706.8 328.8 L709.1 327.4 L711.9 327.9 L710.7 324.1 L712.7 323.5 L714.4 325.9 L715.7 324.5 L718.1 323.3 L720.4 322.1 L722.6 321.8 L724.8 321.5 L727.9 320.3 L726.6 318.9 L730.9 319.2 L734.7 319.6 L737.3 320.4 L735.3 318.0 L732.5 317.5 L729.6 314.9 L728.7 312.5 L731.3 312.0 L735.4 314.8 L739.0 318.3 L743.5 320.6 L742.2 318.6 L736.4 314.5 L733.8 312.0 L737.0 312.2 L735.0 309.5 L736.2 308.8 L737.3 308.1 L734.6 306.3 L734.6 305.4 L734.5 304.4 L734.9 303.9 L735.2 303.4 L735.4 302.9 L734.5 302.0 L733.4 301.1 L732.3 300.3 L734.8 300.6 L735.7 300.4 L736.5 300.2 L737.3 299.9 L740.7 300.5 L742.8 301.7 L744.8 302.9 L745.6 302.6 L746.4 302.3 L746.9 301.9 L747.4 301.4 L747.2 300.8 L746.9 300.3 L746.6 299.8 L750.1 300.1 L754.5 300.8 L752.2 299.4 L751.7 298.9 L751.1 298.4 L750.4 297.9 L747.1 296.9 L746.7 296.5 L746.2 296.1 L745.6 295.7 L745.7 295.5 L745.6 295.2 L745.6 294.9 L744.4 294.5 L743.2 294.1 L742.0 293.7 L743.9 294.1 L742.2 293.6 L740.4 293.1 L737.9 292.5 L735.4 291.9 L736.3 292.1 L734.1 291.6 L731.9 291.2 L729.6 290.7 L727.5 290.3 L730.7 290.9 L733.8 291.6 L737.9 292.5 L738.3 292.6 L741.8 293.5 L745.2 294.4 L750.2 295.9 L755.3 297.6 L758.5 298.7 L761.6 299.9 L767.9 302.4 L772.9 304.6 L776.7 306.5 L782.5 309.4 L790.5 313.9 L787.1 311.9 L779.4 307.8 L774.3 305.3 L765.5 301.4 L757.8 298.5 L762.7 300.3 L766.0 301.6 L769.4 303.1 L773.2 304.8 L776.8 306.5 L778.8 307.5 L780.8 308.5 L784.0 310.2 L788.7 313.0 L793.4 315.8 L799.4 319.9 L799.6 319.6 L800.4 320.2 L807.0 324.9 L815.5 331.5 L824.3 339.4 L829.6 344.6 L831.4 346.6 L835.2 350.9 L838.5 354.9 L842.6 359.4 L846.4 364.4 L848.7 367.7 L849.3 368.7 L845.0 363.0 L843.4 361.5 L839.8 357.2 L839.2 356.8 L841.4 360.8 L837.6 356.2 L841.0 361.9 L842.4 364.4 L845.0 366.7 L844.8 364.4 L847.4 368.8 L849.5 372.5 L853.6 377.4 L856.7 381.6 L858.5 384.5 L861.1 389.3 L865.0 397.8 L867.0 403.5 L868.5 408.5 L868.8 412.5 L868.5 417.3 L867.9 418.2 L866.9 419.0 L867.1 423.7 L868.1 428.9 L871.0 434.3 L873.7 438.2 L876.2 446.7 L876.4 452.5 L875.7 455.9 L875.3 462.0 L874.6 458.2 L873.0 457.4 L871.1 453.3 L869.1 452.2 L867.6 451.1 L868.6 459.2 L869.3 464.8 L871.7 471.3 L873.3 471.9 L875.6 478.1 L876.7 486.2 L876.0 487.5 L873.8 484.2 L872.0 476.3 L869.0 469.6 L867.8 461.6 L866.3 453.4 L863.3 446.1 L861.6 442.3 L860.1 446.1 L858.3 446.4 L857.0 440.5 L853.9 435.5 L850.8 432.6 L848.7 428.5 L847.0 430.0 L845.1 432.2 L842.4 435.5 L842.4 439.7 L840.6 442.5 L837.9 453.2 L834.5 458.1 L835.9 465.3 L836.0 471.4 L835.5 475.6 L835.3 479.1 L833.7 480.9 L832.5 483.9 L829.9 481.6 L827.2 473.8 L824.2 469.5 L821.4 461.6 L817.8 455.7 L815.4 449.4 L814.0 444.6 L812.7 444.2 L809.8 446.5 L804.9 442.5 L802.1 438.6 L798.4 436.0 L795.7 433.5 L789.7 434.9 L783.5 436.5 L776.2 436.3 L771.9 435.2 L769.8 431.8 L763.9 433.8 L758.2 431.8 L753.3 429.1 L750.2 424.1 L746.5 423.5 L744.4 425.6 L746.7 429.6 L751.6 435.4 L752.6 438.6 L755.2 440.4 L757.3 442.8 L761.2 442.4 L765.9 439.9 L768.6 435.3 L770.7 440.3 L776.6 442.5 L780.9 445.9 L778.5 452.6 L777.1 457.9 L774.2 461.6 L770.7 463.7 L762.7 468.6 L753.3 475.5 L742.0 481.7 L736.7 482.7 L734.1 476.2 L733.4 470.2 L727.6 462.2 L721.6 454.8 L719.0 447.0 L714.8 441.3 L708.5 433.0 L707.4 428.5 L705.4 422.7 L707.2 417.9 L708.6 413.2 L709.1 408.5 L709.7 405.7 L705.7 405.5 L699.9 407.7 L694.8 405.6 L691.1 406.8 L686.5 405.6 L684.1 400.3 L683.5 397.0 L686.9 394.6 L690.7 392.6 L696.5 392.3 L701.9 389.8 L706.1 389.8 L709.4 391.7 L714.5 392.5 L719.4 392.3 L722.1 390.3 L720.7 387.4 L716.8 385.0 L712.6 382.5 L710.5 380.3 L712.0 376.8 L713.9 374.5 L710.4 374.9 L708.4 379.8 L706.1 380.7 L701.7 382.5 L699.3 380.0 L701.5 378.0 L697.8 376.9 L695.0 376.9 L692.5 380.3 L690.4 382.3 L688.9 385.5 L687.6 388.4 L688.5 391.1 L690.7 392.3 L686.9 393.1 L683.6 394.0 L678.1 393.3 L676.7 395.3 L674.7 394.4 L675.2 398.0 L677.5 401.1 L675.0 403.2 L674.5 406.2 L672.7 405.9 L670.9 404.6 L670.3 400.9 L668.1 396.8 L666.5 393.7 L667.3 389.9 L665.2 387.7 L659.7 384.5 L658.2 380.6 L656.0 378.1 L652.6 378.7 L651.8 381.9 L654.4 384.1 L655.4 388.0 L658.8 389.4 L663.9 394.2 L663.3 395.4 L660.6 393.4 L659.1 396.1 L660.0 398.2 L657.1 400.8 L656.1 400.8 L657.3 397.8 L656.2 394.4 L653.9 392.1 L650.2 389.7 L647.4 386.5 L646.5 383.5 L643.9 380.6 L640.5 382.0 L636.5 383.6 L633.5 382.4 L630.1 383.2 L629.1 386.7 L622.9 388.3 L618.9 392.3 L619.3 394.6 L616.0 397.8 L611.8 399.7 L606.6 399.2 L603.3 400.8 L602.4 399.1 L600.9 396.5Z M622.1 361.2 L625.9 361.3 L631.0 361.0 L635.8 360.3 L638.4 356.5 L636.3 355.4 L637.5 351.6 L636.7 348.3 L638.6 343.9 L636.9 343.1 L639.1 341.2 L636.2 340.7 L632.7 342.9 L631.2 346.6 L630.7 349.2 L633.1 349.9 L631.4 353.3 L628.6 353.4 L627.9 355.5 L625.2 357.0 L628.0 358.6 L625.3 359.0Z M624.5 355.7 L627.3 351.3 L629.3 349.5 L627.1 347.7 L621.5 349.6 L620.2 352.7 L617.2 354.9 L617.6 356.4Z M627.3 324.9 L629.2 321.6 L633.0 320.5 L634.6 321.1 L636.2 321.7 L638.8 322.6 L637.7 325.2 L633.0 326.5 L628.7 326.9Z M601.1 324.2 L602.0 325.0 L609.7 321.1 L617.4 317.5 L620.5 316.9 L623.7 316.3 L626.9 315.7 L630.1 315.1 L632.4 315.0 L634.7 314.9 L637.0 314.8 L639.4 314.7 L641.8 314.5 L647.4 311.6 L652.9 308.9 L661.3 305.2 L669.0 301.7 L669.4 301.0 L670.0 300.3 L670.7 299.6 L671.4 298.9 L671.8 298.4 L672.1 298.0 L672.6 297.6 L673.1 297.1 L673.6 296.8 L672.9 296.7 L672.1 296.6 L671.4 296.5 L670.7 296.3 L670.0 296.2 L669.3 296.1 L668.7 295.9 L668.0 295.8 L667.3 295.7 L666.7 295.5 L666.1 295.4 L665.5 295.2 L665.0 295.1 L662.9 295.1 L660.8 295.1 L658.8 295.2 L656.6 295.1 L654.5 295.1 L651.0 296.1 L647.5 297.2 L647.1 297.6 L646.8 298.0 L646.6 298.5 L646.4 298.9 L640.3 301.1 L634.5 303.6 L625.2 307.3 L616.3 312.0 L607.9 317.2 L602.7 321.3Z M754.9 560.5 L757.3 570.5 L753.9 576.5 L751.0 583.7 L748.3 589.3 L745.6 594.8 L739.2 599.1 L735.2 596.8 L733.9 590.3 L737.6 583.3 L738.1 574.9 L745.4 572.1 L750.5 565.3Z M837.2 476.8 L840.5 480.2 L842.2 484.7 L840.7 488.6 L838.5 488.6 L837.5 482.8Z M507.3 435.1 L508.6 429.7 L508.7 429.4 L507.7 433.4 L506.7 437.6 L506.4 439.4 L506.0 441.1 L505.8 442.1 L504.5 450.7 L503.7 461.2 L504.4 464.3 L505.1 470.5 L505.4 481.5 L505.3 486.3 L506.6 491.2 L509.5 498.8 L512.5 502.5 L516.1 507.7 L520.6 514.6 L522.2 523.9 L521.2 530.4 L520.2 536.6 L522.4 546.9 L524.7 556.5 L526.0 562.7 L524.2 562.5 L524.8 566.5 L528.1 573.1 L531.7 579.5 L535.8 585.9 L536.5 586.8 L534.0 583.2 L539.1 590.5 L542.7 595.3 L542.5 595.1 L542.4 594.9 L546.5 600.1 L545.9 599.2 L550.2 604.3 L554.8 609.3 L558.0 612.6 L562.0 616.5 L568.1 622.0 L572.8 626.0 L579.7 631.3 L577.4 629.6 L572.0 625.3 L566.6 620.7 L561.4 615.9 L556.3 610.9 L551.5 605.7 L546.8 600.4 L542.5 595.0 L536.2 586.4 L532.4 580.7 L528.9 575.0 L525.5 569.0 L522.3 562.9 L519.5 556.9 L516.8 550.8 L513.8 542.9 L511.1 534.9 L509.4 529.3 L508.1 524.2 L505.8 513.7 L504.2 504.2 L503.3 496.6 L502.7 489.0 L502.4 480.5 L502.5 473.5 L502.6 469.2 L503.0 463.3 L503.5 458.0 L503.6 456.8 L504.5 449.9 L506.2 439.9Z M865.7 480.2 L869.7 483.0 L872.9 487.5 L876.1 494.8 L878.0 500.8 L877.2 508.3 L875.8 508.8 L873.9 502.8 L871.3 495.1 L868.7 488.6Z M716.5 317.8 L716.1 313.2 L715.6 309.7 L716.6 309.1 L717.5 308.4 L718.3 307.8 L719.0 307.1 L719.6 306.5 L721.3 308.8 L721.0 310.0 L720.6 311.2 L720.1 312.4 L719.4 313.7 L721.8 317.7 L719.2 317.8Z M681.3 305.3 L683.3 304.7 L685.2 304.1 L686.4 304.0 L687.6 303.8 L688.8 303.6 L690.1 304.0 L691.5 304.4 L689.7 305.7 L687.7 307.1 L685.6 308.1 L683.3 309.1 L682.3 307.9 L681.6 306.8Z M880.4 482.3 L881.7 477.0 L882.3 470.5 L882.2 459.4 L882.6 459.2 L883.2 462.7 L883.6 470.2 L883.9 475.8 L883.8 481.7 L883.1 493.6 L882.7 495.5 L881.6 494.7 L881.0 491.1Z M876.6 511.0 L879.0 508.4 L880.4 506.7 L881.5 506.7 L880.9 510.6 L880.2 511.6 L879.2 512.6 L877.2 512.9Z M693.4 668.8 L697.5 668.8 L701.7 668.6 L706.1 668.4 L710.5 668.0 L715.0 667.5 L713.9 667.7 L712.6 667.8 L711.4 667.9 L710.1 668.1 L708.7 668.2 L707.3 668.3 L705.9 668.4 L704.4 668.5 L702.9 668.6 L701.4 668.6 L699.8 668.7 L698.2 668.7 L696.5 668.8 L694.9 668.8 L693.2 668.8 L691.5 668.8 L689.7 668.8 L687.9 668.7 L686.0 668.7 L684.1 668.6 L682.1 668.5 L680.1 668.4 L678.1 668.2 L676.1 668.0 L674.0 667.8 L671.9 667.6 L669.8 667.4 L667.6 667.1 L665.5 666.8 L663.4 666.5 L661.5 666.1 L659.6 665.8 L657.7 665.5 L655.9 665.1 L654.2 664.8 L652.5 664.4 L650.8 664.0 L649.2 663.6 L647.6 663.3 L646.1 662.9 L644.9 662.6 L643.7 662.3 L642.7 662.0 L641.7 661.7 L640.8 661.5 L639.9 661.2 L639.2 661.0 L638.5 660.8 L637.9 660.6 L637.3 660.4 L636.9 660.3 L636.5 660.2 L631.2 658.4 L626.0 656.6 L621.0 654.6 L616.2 652.6 L612.3 650.8 L608.6 649.0 L607.4 648.4 L606.2 647.8 L612.9 651.1 L619.7 654.1 L627.1 657.0 L634.6 659.6 L642.3 661.9 L643.4 662.2 L644.5 662.5 L645.7 662.8 L647.0 663.1 L648.3 663.4 L649.6 663.8 L651.0 664.1 L652.4 664.4 L653.9 664.7 L655.3 665.0 L654.4 664.8 L653.5 664.6 L652.7 664.5 L652.1 664.3 L651.5 664.2 L651.1 664.1 L650.7 664.0 L650.5 664.0 L650.4 663.9 L651.0 664.1 L651.7 664.2 L652.5 664.4 L653.3 664.6 L654.3 664.8 L655.3 665.0 L656.5 665.2 L657.8 665.4 L659.1 665.6 L660.6 665.7 L662.5 666.0 L664.4 666.2 L666.4 666.4 L668.4 666.6 L670.5 666.8 L672.6 667.0 L674.8 667.1 L677.0 667.2 L679.2 667.4 L681.5 667.4 L683.8 667.5 L686.1 667.6 L688.5 667.6 L690.8 667.6 L693.2 667.6 L695.6 667.5 L698.0 667.5 L700.4 667.4 L702.9 667.2 L705.3 667.1 L707.8 667.0 L710.3 666.8 L712.7 666.6 L715.2 666.3 L717.6 666.1 L720.1 665.8 L722.5 665.5 L724.9 665.2 L727.3 664.9 L729.7 664.5 L732.0 664.1 L734.3 663.7 L736.5 663.3 L738.7 662.9 L740.8 662.4 L742.9 662.0 L744.9 661.5 L746.9 661.0 L748.8 660.5 L750.7 659.9 L752.5 659.3 L754.3 658.8 L755.9 658.2 L757.6 657.6 L759.1 657.0 L760.5 656.6 L761.7 656.1 L762.9 655.6 L764.0 655.2 L765.0 654.8 L766.0 654.4 L766.9 654.0 L767.7 653.6 L768.5 653.3 L769.1 653.0 L769.7 652.8 L770.3 652.5 L770.7 652.3 L771.1 652.2 L771.4 652.1 L771.2 652.1 L770.9 652.3 L770.5 652.4 L770.1 652.6 L769.5 652.9 L768.9 653.1 L768.2 653.4 L767.4 653.8 L766.6 654.1 L765.6 654.5 L764.6 654.9 L763.5 655.4 L762.3 655.9 L761.0 656.4 L759.6 656.9 L757.5 657.6 L755.3 658.4 L753.0 659.2 L750.7 659.9 L748.4 660.6 L746.0 661.4 L743.5 662.0 L741.1 662.7 L738.6 663.3 L736.1 663.9 L731.4 664.9 L727.0 665.8 L722.8 666.5 L718.8 667.1 L715.0 667.5 L710.5 668.0 L706.1 668.4 L701.7 668.6 L697.5 668.8 L693.4 668.8 L693.5 668.8 L693.4 668.8 L693.3 668.8 L693.2 668.8 L693.1 668.8 L693.0 668.8 L692.9 668.8 L693.0 668.8 L693.1 668.8 L693.2 668.8 L693.3 668.8 L693.4 668.8Z"/><clipPath id="landclip"><use href="#landp"/></clipPath></defs>
<circle cx="693.2" cy="478.0" r="207.8" fill="url(#halog)"/>
<g clip-path="url(#globeclip)">
<circle cx="693.2" cy="478.0" r="190.8" fill="url(#oceang)"/>
<g filter="url(#blur8)">
<path d="M606.7 566.6 L603.7 554.4 L598.0 542.1 L590.1 530.2 L580.3 519.5 L569.4 510.4 L558.2 503.5 L547.2 499.0 L537.3 497.2 L528.8 498.3 L522.1 502.1 L517.7 508.6 L515.5 517.5 L515.6 528.1 L517.9 540.1 L522.2 552.5 L528.1 564.8 L535.4 576.2 L543.7 586.2 L552.5 594.4 L561.6 600.5 L570.6 604.4 L579.3 605.8 L587.3 604.8 L594.5 601.4 L600.5 595.6 L604.8 587.7 L607.0 577.8Z" fill="#06153c" opacity="0.6"/>
<path d="M848.5 547.9 L849.3 538.8 L847.7 530.7 L843.3 524.1 L836.4 519.3 L827.0 516.5 L815.6 515.8 L802.6 517.1 L788.9 520.5 L775.2 525.6 L762.4 532.3 L751.3 540.3 L742.7 549.1 L737.1 558.5 L734.8 567.9 L735.9 576.7 L740.1 584.7 L747.0 591.3 L756.0 596.3 L766.5 599.3 L778.0 600.3 L789.8 599.3 L801.6 596.2 L812.9 591.2 L823.2 584.5 L832.3 576.4 L839.7 567.3 L845.2 557.6Z" fill="#0b2c74" opacity="0.5"/>
<path d="M852.8 491.1 L851.8 484.8 L849.5 479.2 L846.1 474.6 L841.7 471.2 L836.5 469.1 L830.8 468.5 L824.7 469.4 L818.5 471.6 L812.6 475.1 L807.3 479.8 L802.8 485.4 L799.4 491.7 L797.4 498.4 L796.9 505.1 L797.9 511.5 L800.4 517.2 L804.3 522.0 L809.2 525.6 L815.0 527.8 L821.2 528.6 L827.6 527.8 L833.8 525.4 L839.4 521.7 L844.3 516.8 L848.2 511.0 L851.0 504.5 L852.6 497.8Z" fill="#0c2e78" opacity="0.5"/>
<path d="M613.9 383.8 L617.3 373.6 L618.9 364.0 L618.9 355.3 L617.6 347.9 L615.3 341.9 L611.9 337.6 L607.5 334.8 L601.8 333.5 L595.1 333.8 L587.3 335.7 L578.8 339.2 L569.9 344.4 L561.1 351.1 L552.8 359.3 L545.4 368.8 L539.6 378.9 L535.7 389.3 L534.4 399.2 L535.9 408.0 L540.5 415.1 L547.8 419.8 L557.3 421.8 L568.3 421.0 L579.9 417.5 L590.9 411.4 L600.6 403.4 L608.3 394.0Z" fill="#141a33" opacity="0.8"/>
<path d="M859.6 453.6 L858.2 448.7 L856.3 444.3 L854.1 440.6 L851.6 437.7 L849.1 435.9 L846.6 435.1 L844.3 435.4 L842.2 436.9 L840.5 439.3 L839.2 442.7 L838.4 446.9 L838.1 451.6 L838.3 456.7 L839.1 461.8 L840.3 466.8 L842.0 471.4 L844.0 475.2 L846.4 478.2 L848.8 480.2 L851.4 481.0 L853.8 480.6 L856.0 479.1 L857.9 476.5 L859.4 473.0 L860.3 468.7 L860.7 463.9 L860.4 458.8Z" fill="#174596" opacity="0.7"/>
<path d="M813.5 461.7 L812.1 456.8 L809.6 452.2 L806.4 448.4 L802.5 445.4 L798.1 443.4 L793.5 442.5 L788.9 442.7 L784.4 444.0 L780.2 446.3 L776.6 449.6 L773.7 453.7 L771.7 458.4 L770.7 463.5 L770.7 468.7 L771.9 473.8 L774.1 478.5 L777.3 482.5 L781.3 485.7 L785.9 487.9 L790.8 488.9 L795.8 488.7 L800.6 487.3 L805.0 484.8 L808.7 481.3 L811.5 477.0 L813.2 472.1 L813.9 467.0Z" fill="#164290" opacity="0.6"/>
<path d="M634.3 529.9 L633.6 525.5 L631.7 521.3 L628.8 517.3 L624.9 513.9 L620.2 511.1 L615.1 509.1 L609.8 507.9 L604.5 507.8 L599.5 508.5 L595.1 510.2 L591.4 512.8 L588.7 516.0 L587.1 519.8 L586.6 524.0 L587.2 528.4 L589.0 532.7 L591.9 536.7 L595.6 540.2 L600.1 543.1 L605.1 545.1 L610.4 546.2 L615.7 546.4 L620.7 545.6 L625.3 543.8 L629.1 541.2 L631.9 537.9 L633.7 534.1Z" fill="#0e3784" opacity="0.5"/>
<path d="M715.4 646.8 L713.4 643.3 L705.3 640.0 L690.9 636.7 L670.8 633.3 L646.6 629.5 L620.8 625.2 L596.6 620.6 L576.5 615.9 L562.6 611.8 L555.2 609.0 L553.4 607.8 L554.8 609.3 L558.3 612.9 L563.3 617.7 L569.2 623.0 L575.8 628.4 L583.2 633.9 L591.7 639.6 L601.7 645.3 L613.9 650.2 L628.2 654.0 L644.0 656.5 L660.6 657.6 L676.8 657.3 L691.4 655.8 L703.5 653.3 L711.8 650.2Z" fill="#0a1634" opacity="0.6"/>
<path d="M833.0 607.9 L837.2 603.2 L839.8 600.0 L839.8 598.4 L836.2 598.5 L828.0 600.2 L814.8 603.1 L797.2 606.9 L776.5 611.2 L754.8 615.6 L734.2 619.9 L716.7 624.3 L703.6 628.6 L695.8 632.9 L693.2 637.1 L695.6 641.1 L702.3 644.5 L712.5 647.2 L725.2 648.9 L739.4 649.3 L754.2 648.4 L768.7 646.1 L782.2 642.5 L794.3 637.8 L804.7 632.2 L813.6 626.0 L821.1 619.6 L827.5 613.5Z" fill="#0a1634" opacity="0.6"/>
<path d="M788.0 604.3 L789.1 598.9 L788.2 593.9 L785.0 589.6 L779.8 586.3 L772.7 584.1 L764.1 583.1 L754.5 583.4 L744.5 584.9 L734.8 587.5 L725.8 591.2 L718.3 595.7 L712.6 600.8 L709.0 606.2 L707.6 611.6 L708.3 616.7 L711.0 621.4 L715.3 625.3 L721.0 628.4 L727.8 630.4 L735.3 631.3 L743.2 631.1 L751.3 629.8 L759.4 627.5 L767.1 624.2 L774.1 620.0 L780.2 615.1 L784.9 609.8Z" fill="#0a2462" opacity="0.5"/>
<path d="M546.0 458.0 L547.4 449.1 L548.0 440.4 L547.7 432.3 L546.6 425.1 L544.8 419.2 L542.2 414.8 L539.1 412.1 L535.5 411.2 L531.6 412.1 L527.5 414.8 L523.4 419.2 L519.6 425.2 L516.3 432.4 L513.6 440.6 L511.8 449.3 L510.9 458.1 L511.0 466.6 L512.1 474.2 L514.2 480.6 L517.0 485.5 L520.5 488.5 L524.5 489.5 L528.7 488.5 L533.0 485.4 L537.1 480.6 L540.7 474.1 L543.7 466.4Z" fill="#0a1f55" opacity="0.5"/>
<path d="M582.0 433.1 L583.7 425.9 L584.5 419.0 L584.6 412.7 L583.8 407.2 L582.3 402.9 L580.0 399.9 L577.1 398.2 L573.5 398.1 L569.5 399.3 L565.2 402.1 L560.8 406.1 L556.6 411.3 L552.9 417.4 L549.8 424.1 L547.7 431.3 L546.6 438.3 L546.6 445.0 L547.6 450.9 L549.7 455.7 L552.6 459.2 L556.2 461.1 L560.3 461.3 L564.6 459.9 L568.9 456.8 L572.9 452.3 L576.6 446.7 L579.6 440.1Z" fill="#0d2a66" opacity="0.5"/>
</g>
<g filter="url(#blur3)">
<path d="M714.8 409.2 L713.2 406.2 L709.1 403.4 L702.7 400.9 L694.4 398.8 L684.7 397.1 L674.0 395.9 L662.8 395.1 L651.7 394.7 L641.3 394.8 L631.8 395.5 L623.7 396.7 L617.4 398.5 L613.1 400.9 L610.9 403.7 L611.0 406.9 L613.6 410.4 L618.7 413.8 L626.2 417.0 L635.7 419.8 L646.9 421.8 L659.2 422.9 L671.7 423.1 L683.8 422.3 L694.5 420.7 L703.4 418.3 L709.9 415.5 L713.7 412.4Z" fill="#1b4088" opacity="0.85"/>
<path d="M719.7 385.4 L719.0 383.8 L717.6 382.3 L715.4 380.9 L712.7 379.9 L709.5 379.1 L706.1 378.6 L702.5 378.5 L698.9 378.7 L695.4 379.3 L692.3 380.2 L689.7 381.4 L687.7 382.8 L686.4 384.4 L685.9 386.0 L686.3 387.7 L687.5 389.4 L689.5 390.8 L692.3 392.1 L695.6 393.0 L699.4 393.5 L703.3 393.7 L707.2 393.4 L710.9 392.7 L714.1 391.7 L716.7 390.4 L718.5 388.8 L719.5 387.1Z" fill="#5d86b8" opacity="0.95"/>
<path d="M730.2 455.4 L729.4 448.1 L727.9 441.2 L725.9 435.1 L723.6 430.1 L721.1 426.4 L718.5 424.1 L716.0 423.4 L713.5 424.3 L711.2 426.7 L709.2 430.6 L707.6 435.8 L706.4 442.0 L705.7 448.9 L705.6 456.3 L706.1 463.7 L707.2 470.7 L708.9 477.0 L711.0 482.2 L713.6 486.1 L716.4 488.5 L719.3 489.2 L722.1 488.3 L724.8 485.7 L727.0 481.6 L728.8 476.2 L730.0 469.9 L730.4 462.8Z" fill="#2459ae" opacity="0.9"/>
<path d="M765.0 432.7 L764.2 429.9 L762.9 427.3 L761.1 425.0 L759.0 423.2 L756.7 421.9 L754.2 421.2 L751.8 421.1 L749.5 421.6 L747.4 422.8 L745.6 424.5 L744.2 426.6 L743.2 429.2 L742.8 431.9 L742.9 434.8 L743.6 437.7 L744.8 440.4 L746.5 442.8 L748.6 444.7 L751.0 446.0 L753.5 446.8 L756.1 446.9 L758.6 446.3 L760.9 445.1 L762.8 443.3 L764.2 441.1 L765.0 438.4 L765.3 435.6Z" fill="#4a83c4" opacity="0.9"/>
<path d="M686.1 346.6 L686.2 343.4 L685.7 340.4 L684.8 337.8 L683.7 335.7 L682.2 334.0 L680.5 333.0 L678.7 332.6 L676.7 332.8 L674.6 333.7 L672.4 335.2 L670.3 337.2 L668.3 339.7 L666.6 342.5 L665.3 345.7 L664.6 348.9 L664.4 352.1 L664.9 355.1 L666.1 357.6 L667.9 359.6 L670.2 360.9 L672.8 361.4 L675.6 361.1 L678.3 360.0 L680.8 358.3 L682.9 355.9 L684.5 353.0 L685.6 349.9Z" fill="#52709a" opacity="0.8"/>
<path d="M653.2 349.6 L653.9 347.4 L654.2 345.4 L654.1 343.5 L653.6 341.9 L652.7 340.6 L651.4 339.7 L649.9 339.3 L648.1 339.3 L646.1 339.8 L644.1 340.7 L642.0 341.9 L640.0 343.5 L638.2 345.4 L636.7 347.5 L635.6 349.7 L635.0 351.8 L634.9 353.9 L635.4 355.7 L636.5 357.1 L638.0 358.1 L639.9 358.6 L642.0 358.6 L644.3 358.1 L646.6 357.1 L648.7 355.6 L650.6 353.8 L652.1 351.8Z" fill="#2b426e" opacity="0.7"/>
<path d="M788.1 439.5 L787.3 437.4 L785.9 435.5 L783.9 433.9 L781.6 432.7 L778.9 431.9 L776.0 431.6 L773.0 431.7 L770.1 432.3 L767.5 433.4 L765.1 434.9 L763.3 436.6 L762.0 438.7 L761.3 440.8 L761.3 443.0 L762.0 445.2 L763.4 447.1 L765.3 448.8 L767.8 450.1 L770.7 451.0 L773.7 451.3 L776.8 451.2 L779.8 450.5 L782.5 449.4 L784.8 447.8 L786.6 446.0 L787.8 443.9 L788.3 441.7Z" fill="#1f55a8" opacity="0.8"/>
<path d="M766.0 481.0 L765.5 479.9 L764.3 478.9 L762.4 478.2 L760.0 477.6 L757.1 477.3 L753.8 477.2 L750.4 477.4 L747.0 477.8 L743.7 478.4 L740.8 479.2 L738.4 480.1 L736.6 481.2 L735.4 482.3 L735.1 483.5 L735.6 484.5 L736.8 485.5 L738.7 486.4 L741.3 487.0 L744.3 487.4 L747.6 487.5 L751.1 487.4 L754.5 486.9 L757.7 486.3 L760.6 485.4 L762.9 484.4 L764.7 483.3 L765.7 482.1Z" fill="#1f55a8" opacity="0.8"/>
<path d="M736.6 584.7 L736.7 579.8 L736.2 575.1 L735.1 570.8 L733.3 567.2 L731.0 564.5 L728.4 562.9 L725.6 562.4 L722.7 563.1 L719.9 565.0 L717.4 567.9 L715.3 571.7 L713.6 576.1 L712.5 580.9 L711.9 585.8 L712.0 590.7 L712.7 595.1 L713.9 599.0 L715.6 602.2 L717.6 604.5 L719.9 605.9 L722.5 606.3 L725.1 605.6 L727.7 604.1 L730.2 601.5 L732.5 598.2 L734.4 594.2 L735.8 589.6Z" fill="#1a4da0" opacity="0.7"/>
<path d="M878.0 462.1 L877.4 458.7 L876.6 455.6 L875.6 453.0 L874.4 451.1 L873.3 449.9 L872.1 449.6 L871.0 450.1 L870.0 451.3 L869.1 453.3 L868.5 456.0 L868.1 459.1 L867.9 462.6 L868.0 466.3 L868.4 470.0 L869.0 473.5 L869.8 476.7 L870.8 479.3 L871.9 481.2 L873.1 482.4 L874.3 482.8 L875.4 482.3 L876.4 481.0 L877.3 478.9 L878.0 476.3 L878.4 473.1 L878.5 469.5 L878.4 465.8Z" fill="#2a62b0" opacity="0.8"/>
<path d="M877.5 430.2 L875.4 423.5 L873.2 417.5 L871.0 412.5 L868.8 408.7 L866.9 406.3 L865.5 405.4 L864.4 406.0 L864.0 408.0 L864.0 411.5 L864.6 416.3 L865.6 422.1 L866.9 428.7 L868.6 435.7 L870.4 442.9 L872.2 449.8 L874.1 456.1 L876.0 461.5 L877.7 465.6 L879.2 468.2 L880.4 469.2 L881.4 468.5 L882.1 466.2 L882.4 462.5 L882.2 457.4 L881.7 451.3 L880.7 444.5 L879.3 437.3Z" fill="#1d4c9c" opacity="0.7"/>
</g>
<rect x="502.40000000000003" y="287.2" width="381.6" height="381.6" filter="url(#oceannoise)" opacity="0.55"/>
<use href="#landp" fill="none" stroke="#2f74c8" stroke-width="4.500" opacity="0.6" filter="url(#blur2)"/>
<use href="#landp" fill="#a9a684"/>
<g clip-path="url(#landclip)"><g filter="url(#blur6)">
<path d="M729.4 445.6 L726.3 438.8 L718.5 432.6 L706.4 427.1 L690.9 422.4 L672.9 418.5 L653.4 415.4 L633.6 413.0 L614.5 411.4 L597.0 410.8 L581.8 411.4 L569.2 413.2 L559.5 416.5 L552.6 421.2 L548.7 427.3 L547.9 434.5 L550.6 442.5 L557.2 450.7 L568.0 458.7 L583.2 465.7 L602.2 471.2 L624.0 474.6 L647.2 475.7 L670.0 474.5 L690.6 471.1 L707.7 466.0 L720.1 459.6 L727.4 452.6Z" fill="#e2d0b1" opacity="1"/>
<path d="M717.5 446.1 L716.4 440.3 L713.9 434.9 L710.1 430.1 L705.4 426.1 L699.9 423.1 L693.8 421.3 L687.6 420.6 L681.3 421.2 L675.2 422.9 L669.6 425.8 L664.7 429.7 L660.9 434.4 L658.2 439.8 L657.0 445.6 L657.2 451.4 L659.1 457.1 L662.4 462.3 L667.2 466.7 L673.0 470.1 L679.7 472.2 L686.8 473.0 L693.9 472.3 L700.7 470.3 L706.6 467.1 L711.5 462.8 L715.0 457.6 L717.0 452.0Z" fill="#dfcaa8" opacity="1"/>
<path d="M613.4 431.7 L613.9 426.7 L613.1 421.7 L611.3 417.1 L608.5 413.1 L604.8 409.8 L600.5 407.4 L595.8 405.9 L590.8 405.5 L585.8 406.1 L580.9 407.7 L576.4 410.3 L572.4 413.7 L569.2 417.9 L566.9 422.6 L565.7 427.6 L565.7 432.7 L566.9 437.6 L569.4 442.1 L573.0 445.8 L577.5 448.5 L582.8 450.2 L588.5 450.7 L594.3 449.9 L599.8 448.0 L604.7 445.0 L608.7 441.2 L611.6 436.6Z" fill="#dfcbab" opacity="1"/>
<path d="M737.0 463.3 L734.2 461.3 L726.3 459.6 L713.7 458.2 L696.9 456.9 L676.9 455.5 L655.0 454.0 L632.5 452.1 L611.0 449.9 L591.8 447.8 L575.8 445.9 L563.3 444.5 L554.4 443.9 L549.0 444.4 L546.8 446.0 L547.9 448.7 L552.3 452.3 L560.4 456.6 L572.5 461.1 L588.5 465.5 L608.1 469.2 L630.3 471.9 L653.6 473.3 L676.4 473.5 L697.0 472.5 L714.2 470.6 L726.8 468.2 L734.5 465.7Z" fill="#d3bf98" opacity="0.9"/>
<path d="M772.9 445.0 L770.8 437.9 L767.3 431.3 L762.5 425.7 L756.9 421.2 L750.6 418.0 L744.0 416.2 L737.3 415.9 L730.8 417.1 L724.7 419.8 L719.2 423.9 L714.6 429.1 L711.2 435.4 L709.1 442.3 L708.5 449.6 L709.6 457.0 L712.4 463.9 L716.7 470.1 L722.5 475.1 L729.2 478.8 L736.7 480.9 L744.4 481.2 L752.0 479.8 L758.9 476.7 L764.7 472.1 L769.3 466.3 L772.2 459.6 L773.4 452.4Z" fill="#dfc9a6" opacity="1"/>
<path d="M740.5 418.9 L739.6 416.1 L737.8 413.5 L735.2 411.3 L731.9 409.6 L728.2 408.3 L724.2 407.6 L720.0 407.5 L715.9 408.0 L712.0 409.0 L708.5 410.6 L705.6 412.6 L703.4 415.1 L702.1 417.7 L701.7 420.6 L702.2 423.4 L703.8 426.1 L706.3 428.5 L709.6 430.4 L713.5 431.9 L717.9 432.7 L722.5 432.8 L726.9 432.3 L731.1 431.1 L734.7 429.3 L737.5 427.1 L739.5 424.5 L740.5 421.7Z" fill="#d6c5a2" opacity="1"/>
<path d="M787.0 416.4 L785.1 412.4 L782.3 408.7 L778.7 405.6 L774.4 403.3 L769.8 401.7 L764.9 401.0 L760.0 401.1 L755.3 402.1 L751.0 404.0 L747.2 406.6 L744.2 409.9 L742.0 413.6 L740.9 417.8 L741.0 422.0 L742.3 426.2 L744.8 430.1 L748.3 433.6 L752.8 436.3 L757.9 438.1 L763.4 439.0 L769.0 438.8 L774.3 437.7 L779.0 435.5 L782.8 432.6 L785.7 429.0 L787.3 424.9 L787.8 420.7Z" fill="#d3c4a4" opacity="1"/>
<path d="M803.7 423.1 L802.4 420.4 L800.4 418.0 L797.7 416.0 L794.6 414.6 L791.1 413.7 L787.4 413.4 L783.7 413.7 L780.1 414.6 L776.8 416.1 L774.0 418.1 L771.7 420.4 L770.2 423.1 L769.5 426.0 L769.7 428.9 L770.8 431.7 L772.7 434.2 L775.4 436.3 L778.8 438.0 L782.6 439.0 L786.6 439.4 L790.7 439.0 L794.5 438.0 L797.9 436.4 L800.6 434.3 L802.7 431.7 L803.9 428.9 L804.2 426.0Z" fill="#cdbd9b" opacity="1"/>
<path d="M753.7 479.8 L750.9 478.4 L743.1 477.4 L730.3 476.8 L713.1 476.3 L692.4 475.7 L669.4 474.8 L645.6 473.4 L622.6 471.7 L601.8 469.7 L584.3 467.7 L570.6 466.1 L560.9 465.2 L555.1 465.3 L553.0 466.3 L554.6 468.4 L559.9 471.5 L569.3 475.1 L582.8 479.0 L600.3 482.7 L621.3 485.9 L644.7 488.1 L669.0 489.1 L692.4 488.9 L713.4 487.8 L730.7 485.9 L743.4 483.8 L751.2 481.6Z" fill="#8b8f55" opacity="0.9"/>
<path d="M713.1 522.3 L711.8 515.4 L707.8 508.9 L701.5 503.1 L693.1 498.2 L683.2 494.4 L672.1 491.8 L660.6 490.6 L649.2 490.8 L638.4 492.4 L628.7 495.3 L620.7 499.5 L614.6 504.8 L610.9 511.0 L609.6 517.7 L610.8 524.7 L614.4 531.5 L620.4 537.8 L628.4 543.3 L638.1 547.6 L648.9 550.5 L660.4 551.8 L672.0 551.5 L683.1 549.6 L693.1 546.2 L701.5 541.4 L707.9 535.6 L711.8 529.1Z" fill="#44682a" opacity="1"/>
<path d="M619.4 495.8 L618.7 493.1 L616.4 490.3 L612.7 487.6 L607.7 485.1 L601.8 482.9 L595.4 481.0 L588.7 479.7 L582.1 478.8 L576.0 478.5 L570.6 478.8 L566.1 479.8 L562.7 481.3 L560.5 483.3 L559.6 485.7 L560.0 488.5 L561.7 491.5 L564.7 494.5 L568.9 497.3 L574.1 499.8 L580.2 501.8 L586.8 503.3 L593.7 504.1 L600.4 504.2 L606.5 503.6 L611.8 502.4 L615.8 500.6 L618.4 498.4Z" fill="#4a6c2c" opacity="1"/>
<path d="M653.8 501.9 L653.3 498.9 L651.4 496.0 L648.5 493.3 L644.5 490.9 L639.8 489.0 L634.6 487.6 L629.1 486.8 L623.7 486.6 L618.5 487.1 L613.9 488.1 L610.0 489.8 L607.0 491.9 L605.1 494.5 L604.3 497.4 L604.7 500.4 L606.3 503.4 L609.1 506.2 L612.8 508.7 L617.3 510.8 L622.5 512.3 L628.0 513.2 L633.6 513.3 L639.0 512.8 L643.9 511.6 L648.0 509.7 L651.1 507.4 L653.1 504.8Z" fill="#456829" opacity="1"/>
<path d="M713.0 505.9 L712.5 501.6 L711.0 497.4 L708.6 493.7 L705.4 490.6 L701.7 488.3 L697.6 486.8 L693.2 486.3 L688.8 486.8 L684.7 488.3 L681.0 490.6 L677.8 493.7 L675.4 497.4 L673.9 501.6 L673.4 505.9 L673.8 510.3 L675.3 514.5 L677.6 518.3 L680.8 521.4 L684.5 523.8 L688.8 525.3 L693.2 525.8 L697.6 525.3 L701.9 523.8 L705.6 521.4 L708.8 518.3 L711.1 514.5 L712.6 510.3Z" fill="#5d7236" opacity="0.9"/>
<path d="M719.4 494.2 L718.0 492.4 L714.2 490.7 L707.9 489.3 L699.6 488.1 L689.8 487.1 L678.7 486.4 L667.2 485.9 L655.8 485.6 L645.0 485.6 L635.5 485.9 L627.6 486.5 L621.7 487.5 L618.0 488.8 L616.7 490.6 L617.7 492.5 L621.2 494.7 L627.0 496.8 L634.8 498.8 L644.4 500.5 L655.3 501.7 L666.8 502.4 L678.5 502.6 L689.7 502.1 L699.7 501.1 L708.1 499.6 L714.3 497.9 L718.1 496.1Z" fill="#4d6e2e" opacity="1"/>
<path d="M742.4 507.9 L741.7 502.8 L739.9 498.0 L737.1 493.8 L733.4 490.3 L729.0 487.8 L724.2 486.3 L719.2 485.9 L714.2 486.6 L709.4 488.5 L705.1 491.3 L701.5 495.0 L698.8 499.5 L697.1 504.4 L696.5 509.5 L697.1 514.6 L698.8 519.4 L701.6 523.7 L705.3 527.2 L709.7 529.8 L714.6 531.3 L719.7 531.7 L724.9 531.0 L729.7 529.1 L734.1 526.2 L737.7 522.4 L740.3 517.9 L741.9 513.0Z" fill="#9a8757" opacity="0.9"/>
<path d="M758.1 503.3 L757.6 499.7 L756.3 496.3 L754.3 493.4 L751.6 490.9 L748.6 489.2 L745.2 488.2 L741.7 488.1 L738.2 488.7 L734.9 490.1 L731.9 492.3 L729.4 495.0 L727.6 498.2 L726.5 501.8 L726.2 505.5 L726.6 509.1 L727.9 512.5 L729.9 515.5 L732.5 518.0 L735.6 519.7 L739.0 520.7 L742.6 520.9 L746.1 520.3 L749.5 518.8 L752.5 516.6 L755.0 513.8 L756.8 510.6 L757.8 507.0Z" fill="#bda676" opacity="0.9"/>
<path d="M729.3 550.1 L728.9 544.7 L727.6 539.4 L725.3 534.7 L722.2 530.8 L718.4 527.9 L714.3 526.1 L709.8 525.6 L705.4 526.3 L701.2 528.3 L697.4 531.4 L694.2 535.4 L691.9 540.2 L690.4 545.5 L689.9 551.0 L690.4 556.5 L691.9 561.6 L694.2 566.1 L697.3 569.8 L700.9 572.5 L704.9 574.2 L709.2 574.7 L713.5 574.0 L717.6 572.2 L721.3 569.2 L724.5 565.4 L727.0 560.8 L728.6 555.6Z" fill="#727c45" opacity="0.9"/>
<path d="M715.9 562.8 L715.3 559.5 L713.2 556.3 L709.7 553.5 L705.1 551.2 L699.5 549.4 L693.2 548.3 L686.6 547.9 L680.0 548.2 L673.7 549.2 L668.2 550.9 L663.6 553.1 L660.2 555.9 L658.2 559.0 L657.6 562.3 L658.5 565.6 L660.7 568.8 L664.3 571.7 L668.9 574.2 L674.4 576.0 L680.5 577.2 L686.8 577.7 L693.2 577.3 L699.3 576.3 L704.8 574.5 L709.4 572.1 L712.9 569.3 L715.1 566.1Z" fill="#6c7a40" opacity="0.9"/>
<path d="M699.3 594.1 L698.6 588.8 L696.4 583.6 L692.6 578.8 L687.5 574.7 L681.4 571.5 L674.6 569.5 L667.4 568.6 L660.4 569.0 L653.8 570.6 L648.1 573.3 L643.6 577.1 L640.5 581.6 L638.9 586.7 L638.9 592.0 L640.5 597.3 L643.4 602.3 L647.5 606.8 L652.6 610.6 L658.3 613.4 L664.4 615.2 L670.7 616.0 L676.9 615.7 L682.8 614.3 L688.1 611.8 L692.7 608.4 L696.2 604.2 L698.5 599.4Z" fill="#c2aa80" opacity="1"/>
<path d="M657.7 587.9 L657.0 583.0 L655.8 578.2 L654.2 573.8 L652.3 570.1 L650.0 567.2 L647.6 565.3 L645.1 564.5 L642.7 564.9 L640.5 566.5 L638.7 569.2 L637.3 572.7 L636.5 576.9 L636.3 581.6 L636.7 586.5 L637.6 591.3 L639.1 595.8 L641.0 599.8 L643.1 603.2 L645.4 605.7 L647.7 607.3 L650.0 607.9 L652.1 607.6 L654.0 606.3 L655.6 604.0 L656.8 600.9 L657.5 597.1 L657.9 592.7Z" fill="#d7be95" opacity="1"/>
<path d="M708.3 599.2 L708.1 595.2 L707.1 591.3 L705.4 587.7 L703.0 584.7 L700.0 582.4 L696.7 581.0 L693.2 580.5 L689.7 581.0 L686.4 582.4 L683.4 584.7 L681.0 587.7 L679.3 591.3 L678.3 595.2 L678.1 599.2 L678.7 603.2 L680.0 606.9 L681.9 610.1 L684.3 612.8 L687.0 614.8 L690.1 616.0 L693.2 616.4 L696.3 616.0 L699.4 614.8 L702.1 612.8 L704.5 610.1 L706.4 606.9 L707.7 603.2Z" fill="#8e8a55" opacity="0.9"/>
<path d="M698.9 614.1 L698.4 612.2 L697.0 610.5 L694.6 608.9 L691.3 607.5 L687.4 606.5 L683.0 605.8 L678.4 605.5 L673.9 605.6 L669.6 606.1 L665.9 607.0 L662.8 608.2 L660.6 609.7 L659.4 611.4 L659.2 613.2 L660.0 615.0 L661.7 616.8 L664.2 618.4 L667.4 619.8 L671.1 620.9 L675.2 621.5 L679.5 621.8 L683.7 621.7 L687.8 621.2 L691.4 620.3 L694.5 619.1 L696.9 617.6 L698.4 615.9Z" fill="#8d8354" opacity="0.9"/>
<path d="M756.4 580.4 L756.7 576.1 L756.4 571.9 L755.5 568.2 L754.2 565.1 L752.3 562.8 L750.1 561.4 L747.8 561.1 L745.3 561.8 L742.9 563.5 L740.6 566.1 L738.7 569.5 L737.1 573.4 L736.0 577.7 L735.3 582.1 L735.2 586.3 L735.5 590.3 L736.4 593.8 L737.6 596.6 L739.2 598.6 L741.2 599.8 L743.3 600.0 L745.6 599.4 L748.0 597.9 L750.3 595.6 L752.3 592.5 L754.1 588.9 L755.5 584.8Z" fill="#7d7e48" opacity="1"/>
<path d="M622.3 391.3 L622.9 389.0 L622.9 386.7 L622.3 384.6 L621.3 382.8 L619.8 381.3 L617.9 380.2 L615.8 379.6 L613.5 379.4 L611.1 379.8 L608.6 380.6 L606.3 381.9 L604.3 383.5 L602.5 385.5 L601.2 387.7 L600.4 390.0 L600.2 392.3 L600.6 394.5 L601.6 396.5 L603.1 398.1 L605.1 399.3 L607.4 400.0 L610.0 400.1 L612.7 399.7 L615.3 398.8 L617.6 397.4 L619.7 395.6 L621.3 393.5Z" fill="#bcab84" opacity="1"/>
<path d="M721.5 398.2 L720.8 396.5 L719.1 395.0 L716.5 393.7 L713.2 392.7 L709.4 391.9 L705.1 391.4 L700.7 391.3 L696.2 391.6 L692.0 392.1 L688.2 393.0 L685.0 394.1 L682.5 395.5 L680.9 397.1 L680.3 398.7 L680.7 400.4 L682.2 402.1 L684.6 403.6 L687.9 404.8 L691.9 405.8 L696.5 406.3 L701.2 406.5 L706.0 406.2 L710.4 405.5 L714.4 404.5 L717.6 403.1 L719.9 401.6 L721.2 399.9Z" fill="#c0b28e" opacity="1"/>
<path d="M688.7 372.7 L687.9 369.0 L685.2 365.5 L681.0 362.4 L675.6 359.7 L669.2 357.5 L662.2 355.9 L654.8 354.9 L647.4 354.6 L640.1 354.9 L633.3 355.8 L627.0 357.5 L621.6 359.7 L617.4 362.6 L614.6 365.9 L613.4 369.6 L614.0 373.5 L616.6 377.4 L621.2 381.0 L627.7 384.1 L635.7 386.4 L644.7 387.8 L654.2 388.1 L663.5 387.4 L672.0 385.6 L679.1 383.1 L684.4 380.0 L687.6 376.4Z" fill="#84917a" opacity="1"/>
<path d="M710.3 366.9 L709.2 363.3 L706.9 360.1 L703.8 357.2 L699.9 354.8 L695.5 353.1 L690.7 351.9 L685.8 351.5 L680.8 351.8 L675.9 352.7 L671.2 354.3 L667.1 356.5 L663.6 359.3 L660.9 362.5 L659.4 366.0 L659.1 369.7 L660.2 373.3 L662.7 376.7 L666.5 379.6 L671.5 381.9 L677.3 383.4 L683.6 384.0 L690.0 383.6 L696.1 382.3 L701.3 380.2 L705.6 377.4 L708.5 374.1 L710.1 370.6Z" fill="#a3ad9a" opacity="1"/>
<path d="M690.2 335.1 L690.0 332.2 L689.1 329.5 L687.7 327.1 L685.9 325.1 L683.8 323.7 L681.5 322.7 L679.0 322.3 L676.3 322.4 L673.4 323.1 L670.5 324.3 L667.7 326.0 L664.9 328.2 L662.6 330.7 L660.8 333.5 L659.6 336.5 L659.4 339.4 L660.1 342.2 L661.8 344.7 L664.4 346.6 L667.8 347.9 L671.6 348.5 L675.6 348.4 L679.6 347.4 L683.1 345.8 L686.1 343.6 L688.3 341.0 L689.6 338.1Z" fill="#c6cdc6" opacity="1"/>
<path d="M688.4 384.0 L688.0 382.1 L686.7 380.3 L684.5 378.6 L681.7 377.2 L678.3 376.1 L674.6 375.4 L670.6 375.0 L666.6 375.0 L662.7 375.4 L659.1 376.2 L656.0 377.3 L653.5 378.8 L651.7 380.5 L650.8 382.4 L650.8 384.3 L651.7 386.3 L653.6 388.1 L656.3 389.7 L659.8 391.0 L663.8 391.9 L668.2 392.3 L672.6 392.3 L676.9 391.7 L680.7 390.8 L684.0 389.4 L686.4 387.8 L687.9 386.0Z" fill="#84906e" opacity="1"/>
<path d="M641.4 375.7 L642.0 373.2 L642.0 370.8 L641.6 368.6 L640.7 366.7 L639.3 365.2 L637.6 364.1 L635.6 363.6 L633.4 363.6 L631.1 364.1 L628.7 365.1 L626.4 366.5 L624.2 368.4 L622.4 370.6 L621.0 373.0 L620.1 375.4 L619.8 377.9 L620.1 380.2 L620.9 382.3 L622.4 384.0 L624.3 385.1 L626.6 385.7 L629.2 385.8 L631.8 385.2 L634.4 384.1 L636.7 382.5 L638.7 380.4 L640.3 378.1Z" fill="#8a967a" opacity="1"/>
<path d="M744.6 350.9 L741.0 345.6 L736.2 341.0 L730.7 337.1 L724.8 334.0 L718.8 331.9 L712.9 330.7 L707.2 330.5 L701.7 331.2 L696.4 332.9 L691.3 335.5 L686.7 339.0 L682.7 343.3 L679.6 348.3 L678.0 353.8 L678.0 359.6 L680.1 365.2 L684.3 370.5 L690.4 375.0 L698.3 378.3 L707.2 380.3 L716.6 380.6 L725.7 379.4 L733.7 376.7 L740.1 372.8 L744.5 367.8 L746.6 362.3 L746.6 356.5Z" fill="#d3d6cb" opacity="1"/>
<path d="M776.6 370.9 L774.0 367.5 L770.2 364.5 L765.6 362.0 L760.3 360.2 L754.6 359.1 L748.7 358.8 L742.8 359.1 L737.1 360.1 L731.8 361.8 L727.1 364.1 L723.1 367.0 L720.3 370.3 L718.7 373.9 L718.5 377.7 L719.9 381.5 L722.9 385.0 L727.5 388.1 L733.4 390.5 L740.2 392.1 L747.6 392.8 L755.0 392.4 L761.9 391.1 L768.0 388.9 L772.8 385.9 L776.1 382.4 L777.8 378.6 L778.0 374.7Z" fill="#dbd6c2" opacity="1"/>
<path d="M796.7 335.6 L788.7 330.1 L780.2 325.6 L771.6 322.3 L763.4 320.0 L755.9 318.8 L749.4 318.6 L743.7 319.4 L739.0 321.2 L735.1 324.0 L731.8 327.9 L729.2 332.9 L727.6 338.8 L727.3 345.4 L728.8 352.6 L732.6 359.9 L738.9 366.8 L747.6 372.8 L758.4 377.4 L770.3 380.3 L782.4 381.0 L793.5 379.5 L802.5 375.9 L808.7 370.6 L811.8 364.1 L811.7 356.8 L808.8 349.3 L803.6 342.1Z" fill="#e2e3da" opacity="1"/>
<path d="M786.5 313.1 L777.8 309.0 L769.7 306.2 L762.2 304.3 L755.5 303.4 L749.9 303.2 L745.6 303.7 L742.6 304.9 L741.0 306.9 L740.5 309.7 L741.0 313.4 L742.1 318.1 L744.1 323.7 L747.3 330.1 L751.9 336.8 L758.5 343.6 L767.2 349.9 L777.6 355.0 L789.1 358.6 L800.4 360.1 L810.4 359.4 L817.7 356.5 L821.6 351.7 L821.6 345.5 L818.2 338.5 L812.1 331.3 L804.2 324.4 L795.5 318.2Z" fill="#e6e8e2" opacity="1"/>
<path d="M763.3 314.3 L759.6 313.0 L755.2 312.3 L750.1 312.1 L744.3 312.4 L737.7 313.1 L730.5 314.0 L722.7 315.1 L714.6 316.3 L706.4 317.6 L698.7 319.0 L691.8 320.5 L686.1 322.2 L682.1 324.2 L680.3 326.3 L681.0 328.7 L684.7 331.0 L691.3 333.2 L700.8 334.8 L712.5 335.7 L725.3 335.5 L738.0 334.3 L749.2 332.1 L758.0 329.1 L763.9 325.7 L766.9 322.2 L767.4 319.1 L766.0 316.4Z" fill="#eef1f0" opacity="1"/>
<path d="M760.4 299.5 L755.0 297.8 L750.4 296.7 L746.6 296.3 L743.6 296.3 L741.3 296.8 L739.8 297.6 L739.4 298.8 L739.8 300.3 L741.3 302.3 L743.6 304.9 L746.6 307.9 L750.4 311.4 L755.0 315.1 L760.4 319.0 L766.8 322.6 L773.9 325.7 L781.3 328.0 L788.5 329.1 L794.5 329.0 L798.5 327.5 L799.9 324.9 L798.5 321.3 L794.5 317.2 L788.5 313.0 L781.3 308.8 L773.9 305.1 L766.8 302.0Z" fill="#e8ebe8" opacity="1"/>
<path d="M810.8 374.2 L807.7 370.9 L803.7 368.1 L798.9 366.0 L793.4 364.7 L787.6 364.1 L781.4 364.3 L775.3 365.2 L769.3 366.8 L763.6 369.1 L758.7 372.0 L754.7 375.3 L751.9 379.0 L750.5 382.9 L750.9 386.8 L753.0 390.6 L756.9 394.1 L762.4 396.9 L769.1 398.9 L776.8 400.0 L784.7 400.1 L792.4 399.0 L799.4 397.0 L805.1 394.1 L809.4 390.5 L812.1 386.4 L813.1 382.2 L812.6 378.1Z" fill="#dfdac8" opacity="1"/>
<path d="M841.6 380.1 L838.8 376.7 L835.5 373.9 L831.9 371.9 L828.0 370.7 L824.0 370.4 L820.0 370.8 L816.0 372.1 L812.2 374.2 L808.9 376.9 L806.1 380.2 L804.0 384.0 L802.9 388.0 L803.0 392.2 L804.2 396.3 L806.8 400.1 L810.4 403.3 L815.1 405.9 L820.4 407.5 L825.9 408.2 L831.4 407.8 L836.3 406.3 L840.4 403.9 L843.3 400.7 L845.1 396.8 L845.7 392.6 L845.2 388.2 L843.8 384.0Z" fill="#e0dccc" opacity="1"/>
<path d="M834.8 356.3 L830.7 352.2 L826.6 348.8 L822.7 346.1 L819.1 344.3 L816.0 343.5 L813.5 343.5 L811.7 344.4 L810.5 346.3 L810.2 348.9 L810.6 352.3 L811.7 356.4 L813.7 360.9 L816.3 365.7 L819.5 370.5 L823.4 375.1 L827.6 379.2 L832.0 382.5 L836.3 384.9 L840.2 386.1 L843.6 386.2 L846.0 385.0 L847.4 382.6 L847.6 379.3 L846.7 375.2 L844.8 370.5 L842.1 365.7 L838.6 360.8Z" fill="#d9d5c0" opacity="1"/>
<path d="M858.4 385.6 L855.8 381.5 L853.1 378.0 L850.6 375.2 L848.3 373.4 L846.2 372.4 L844.5 372.5 L843.3 373.5 L842.5 375.4 L842.2 378.2 L842.4 381.7 L843.1 385.8 L844.4 390.3 L846.2 395.1 L848.5 399.8 L851.1 404.2 L854.0 408.1 L857.0 411.3 L859.9 413.5 L862.5 414.6 L864.6 414.6 L866.2 413.5 L867.0 411.2 L867.1 408.1 L866.4 404.2 L865.1 399.7 L863.2 395.0 L861.0 390.2Z" fill="#b5bb9e" opacity="0.9"/>
<path d="M815.2 339.7 L811.7 337.1 L808.1 335.0 L804.6 333.5 L801.4 332.7 L798.3 332.5 L795.7 332.9 L793.5 334.0 L791.7 335.7 L790.5 337.9 L789.9 340.5 L790.0 343.6 L790.8 346.9 L792.4 350.3 L794.9 353.7 L798.1 356.8 L802.0 359.5 L806.3 361.5 L810.9 362.8 L815.2 363.3 L819.1 362.8 L822.2 361.4 L824.2 359.3 L825.1 356.5 L824.8 353.2 L823.5 349.7 L821.3 346.2 L818.4 342.8Z" fill="#e2e3da" opacity="1"/>
<path d="M797.9 345.8 L795.1 343.4 L792.0 341.3 L788.9 339.6 L785.8 338.4 L783.0 337.7 L780.4 337.6 L778.3 338.0 L776.7 338.9 L775.6 340.4 L775.1 342.2 L775.2 344.5 L775.9 347.0 L777.2 349.7 L779.1 352.5 L781.5 355.1 L784.4 357.5 L787.5 359.6 L790.8 361.0 L794.1 361.9 L797.2 362.1 L799.8 361.6 L801.8 360.4 L803.1 358.7 L803.6 356.5 L803.2 353.9 L802.1 351.2 L800.3 348.4Z" fill="#a9b59c" opacity="0.7"/>
<path d="M780.8 334.0 L773.5 328.9 L765.4 324.8 L756.8 321.7 L748.3 319.6 L740.2 318.4 L732.7 318.0 L725.8 318.6 L719.4 320.0 L713.3 322.3 L707.6 325.5 L702.2 329.6 L697.7 334.6 L694.4 340.4 L693.2 346.7 L694.6 353.3 L699.2 359.7 L707.0 365.6 L717.9 370.4 L731.1 373.5 L745.4 374.8 L759.5 373.9 L771.9 370.9 L781.7 366.2 L788.0 360.2 L790.7 353.5 L790.0 346.6 L786.5 340.0Z" fill="#dcdcd2" opacity="0.9"/>
<path d="M828.1 347.4 L821.7 341.9 L815.2 337.7 L808.6 334.8 L802.2 333.3 L795.7 333.0 L789.4 334.0 L783.2 336.1 L777.2 339.3 L771.6 343.5 L766.5 348.7 L762.4 354.9 L759.7 361.7 L758.9 369.1 L760.7 376.6 L765.3 384.0 L773.0 390.6 L783.3 395.9 L795.6 399.6 L808.6 401.2 L821.1 400.4 L831.8 397.4 L839.6 392.4 L844.1 385.7 L845.3 378.0 L843.5 369.8 L839.6 361.7 L834.2 354.1Z" fill="#dddacb" opacity="0.9"/>
<path d="M761.8 391.6 L760.5 389.0 L758.3 386.7 L755.4 384.8 L752.0 383.3 L748.2 382.3 L744.2 381.9 L740.1 382.0 L736.2 382.6 L732.5 383.8 L729.3 385.4 L726.6 387.4 L724.7 389.8 L723.7 392.4 L723.6 395.1 L724.5 397.7 L726.4 400.2 L729.2 402.3 L732.7 404.1 L736.9 405.3 L741.4 405.8 L746.0 405.7 L750.4 405.0 L754.4 403.7 L757.7 401.8 L760.2 399.5 L761.7 397.0 L762.2 394.3Z" fill="#cfc8ae" opacity="0.9"/>
<path d="M838.1 434.2 L836.2 429.4 L833.6 425.1 L830.6 421.4 L827.3 418.7 L823.8 416.9 L820.4 416.1 L817.2 416.4 L814.3 417.8 L811.9 420.2 L810.0 423.5 L808.8 427.5 L808.2 432.1 L808.3 437.1 L809.3 442.2 L810.9 447.2 L813.2 451.7 L816.1 455.6 L819.4 458.6 L823.0 460.6 L826.6 461.4 L830.2 461.1 L833.3 459.6 L836.0 457.0 L838.1 453.4 L839.3 449.1 L839.7 444.3 L839.3 439.3Z" fill="#a39d6e" opacity="1"/>
<path d="M836.7 466.1 L835.7 461.8 L834.3 457.8 L832.6 454.4 L830.8 451.6 L828.8 449.7 L826.9 448.7 L825.1 448.7 L823.6 449.6 L822.3 451.5 L821.3 454.2 L820.7 457.6 L820.5 461.5 L820.7 465.8 L821.2 470.2 L822.0 474.5 L823.2 478.6 L824.6 482.0 L826.3 484.8 L828.1 486.8 L829.9 487.8 L831.7 487.8 L833.4 486.9 L834.9 485.0 L836.1 482.2 L836.9 478.8 L837.3 474.8 L837.2 470.5Z" fill="#858b56" opacity="1"/>
<path d="M813.2 417.5 L812.0 414.8 L810.4 412.3 L808.5 410.2 L806.4 408.6 L804.3 407.5 L802.2 407.1 L800.3 407.2 L798.5 407.9 L797.1 409.2 L796.0 411.0 L795.3 413.2 L795.1 415.8 L795.3 418.5 L795.9 421.4 L797.0 424.1 L798.5 426.7 L800.4 428.8 L802.4 430.6 L804.6 431.7 L806.8 432.2 L808.9 432.1 L810.8 431.3 L812.4 430.0 L813.5 428.1 L814.2 425.7 L814.4 423.1 L814.1 420.3Z" fill="#c3b38c" opacity="1"/>
<path d="M844.4 420.9 L843.4 419.0 L841.9 417.3 L840.1 416.0 L838.1 415.2 L835.8 414.8 L833.5 414.9 L831.2 415.5 L829.0 416.5 L827.0 417.9 L825.4 419.7 L824.2 421.7 L823.4 423.9 L823.3 426.2 L823.7 428.3 L824.7 430.4 L826.2 432.1 L828.2 433.5 L830.5 434.4 L833.1 434.9 L835.6 434.8 L838.1 434.2 L840.4 433.1 L842.3 431.6 L843.7 429.7 L844.7 427.6 L845.1 425.4 L845.0 423.1Z" fill="#99a074" opacity="1"/>
<path d="M870.2 435.0 L868.1 428.9 L865.7 423.3 L863.1 418.6 L860.5 415.0 L858.1 412.5 L856.0 411.4 L854.3 411.7 L853.2 413.3 L852.7 416.2 L852.7 420.3 L853.2 425.4 L854.2 431.2 L855.6 437.5 L857.2 444.0 L859.1 450.3 L861.1 456.1 L863.1 461.1 L865.2 465.0 L867.2 467.6 L869.1 468.8 L870.7 468.5 L872.1 466.7 L873.1 463.6 L873.6 459.2 L873.6 453.9 L873.0 447.9 L871.9 441.5Z" fill="#5c7a3c" opacity="1"/>
<path d="M878.2 483.1 L877.8 476.7 L876.9 470.9 L875.8 465.9 L874.4 461.9 L873.0 459.2 L871.6 457.9 L870.3 458.0 L869.2 459.6 L868.4 462.6 L867.8 466.8 L867.4 472.0 L867.2 477.9 L867.2 484.4 L867.4 491.0 L867.7 497.3 L868.1 503.2 L868.6 508.2 L869.3 512.1 L870.1 514.8 L871.1 516.1 L872.3 515.9 L873.5 514.4 L874.8 511.4 L876.0 507.2 L877.1 502.0 L877.8 496.1 L878.2 489.7Z" fill="#4f7436" opacity="1"/>
<path d="M884.0 478.8 L883.9 474.7 L883.7 470.9 L883.4 467.9 L883.1 465.6 L882.6 464.2 L882.1 463.9 L881.5 464.5 L881.0 466.1 L880.5 468.5 L880.0 471.8 L879.6 475.6 L879.4 479.9 L879.2 484.3 L879.1 488.7 L879.2 492.9 L879.4 496.6 L879.6 499.7 L880.0 502.0 L880.5 503.3 L881.0 503.7 L881.5 503.1 L882.1 501.5 L882.6 499.0 L883.1 495.8 L883.4 492.0 L883.7 487.7 L883.9 483.3Z" fill="#4f7436" opacity="1"/>
<path d="M875.7 445.3 L875.0 442.6 L874.1 440.1 L873.1 438.1 L872.1 436.6 L871.2 435.7 L870.3 435.4 L869.4 435.8 L868.8 436.8 L868.3 438.4 L868.0 440.5 L867.9 443.0 L868.1 445.8 L868.4 448.7 L869.0 451.6 L869.7 454.4 L870.5 456.9 L871.5 458.9 L872.5 460.5 L873.5 461.4 L874.4 461.7 L875.2 461.3 L875.9 460.3 L876.4 458.7 L876.7 456.5 L876.8 454.0 L876.6 451.2 L876.3 448.2Z" fill="#5f7d3e" opacity="1"/>
<path d="M859.0 416.4 L857.7 413.7 L856.2 411.4 L854.6 409.6 L852.9 408.2 L851.2 407.5 L849.7 407.3 L848.3 407.8 L847.1 408.8 L846.2 410.4 L845.7 412.5 L845.5 414.9 L845.6 417.7 L846.2 420.5 L847.1 423.4 L848.3 426.0 L849.8 428.4 L851.5 430.4 L853.3 431.8 L855.1 432.7 L856.7 432.8 L858.2 432.4 L859.5 431.2 L860.3 429.5 L860.9 427.4 L861.0 424.8 L860.7 422.0 L860.0 419.2Z" fill="#6a8448" opacity="1"/>
<path d="M520.6 523.0 L519.1 512.8 L517.2 502.6 L515.0 492.7 L512.7 483.8 L510.5 476.3 L508.3 470.6 L506.3 466.9 L504.7 465.5 L503.5 466.4 L502.7 469.6 L502.4 474.9 L502.4 482.0 L502.8 490.7 L503.7 500.5 L505.2 510.8 L507.3 521.0 L509.8 530.6 L512.4 539.1 L515.0 546.1 L517.1 551.5 L519.0 554.9 L520.5 556.2 L521.6 555.4 L522.3 552.5 L522.5 547.5 L522.4 540.7 L521.7 532.4Z" fill="#4c6e30" opacity="1"/>
<path d="M522.0 523.7 L521.3 519.4 L520.4 515.1 L519.3 511.0 L518.0 507.4 L516.7 504.4 L515.3 502.1 L514.0 500.8 L512.8 500.4 L511.8 501.0 L510.9 502.5 L510.4 504.9 L510.2 508.1 L510.3 511.8 L510.7 516.0 L511.4 520.3 L512.5 524.5 L513.7 528.6 L515.1 532.1 L516.5 535.1 L517.9 537.2 L519.2 538.5 L520.4 538.9 L521.3 538.4 L522.0 536.9 L522.4 534.5 L522.6 531.5 L522.4 527.8Z" fill="#7f8a4a" opacity="1"/>
<path d="M646.7 311.4 L653.2 307.5 L659.1 304.1 L664.3 301.3 L668.8 299.1 L672.1 297.5 L674.1 296.5 L674.5 296.0 L673.1 295.8 L669.9 296.0 L664.9 296.5 L658.6 297.3 L651.0 298.6 L642.8 300.4 L634.3 302.8 L625.9 305.9 L618.2 309.5 L611.6 313.4 L606.5 317.3 L603.3 321.0 L602.3 324.1 L603.6 326.2 L606.8 327.2 L611.9 326.9 L618.2 325.4 L625.2 322.8 L632.5 319.3 L639.8 315.4Z" fill="#f1f4f6" opacity="1"/>
<path d="M706.8 306.6 L705.3 305.4 L703.2 304.4 L700.5 303.5 L697.7 302.8 L694.7 302.2 L691.6 301.8 L688.6 301.6 L685.5 301.6 L682.3 301.7 L679.1 302.0 L675.8 302.4 L672.7 303.0 L669.9 303.9 L667.7 304.9 L666.3 306.2 L665.9 307.6 L666.9 309.1 L669.3 310.6 L673.1 311.9 L678.2 312.9 L684.1 313.4 L690.2 313.4 L695.9 312.9 L700.7 312.0 L704.3 310.8 L706.5 309.4 L707.2 308.0Z" fill="#f1f4f6" opacity="1"/>
<path d="M711.2 667.9 L719.3 667.0 L733.9 664.4 L750.2 660.1 L757.1 657.8 L743.7 662.0 L705.5 667.0 L657.5 664.8 L626.5 656.8 L624.7 656.1 L648.7 663.5 L682.3 668.5 L705.3 668.4 L713.2 667.7 L711.2 667.9 L704.4 668.5 L696.8 668.8 L691.8 668.8 L691.9 668.8 L691.6 668.8 L692.3 668.8 L693.5 668.8 L694.5 668.8 L695.3 668.8 L701.3 668.6 L705.6 668.4 L707.9 668.2Z" fill="#f4f6f8" opacity="1"/>
</g></g>
<g clip-path="url(#landclip)"><rect x="502.40000000000003" y="287.2" width="381.6" height="381.6" filter="url(#landnoise)" opacity="0.28"/></g>
<path d="M736.0 375.1 L741.1 373.8 L744.5 374.3 L745.9 378.5 L742.0 380.3 L742.1 384.7 L747.6 387.8 L751.1 391.3 L751.1 395.9 L754.8 400.2 L750.4 402.8 L745.0 401.5 L741.8 398.4 L741.6 392.3 L737.0 388.2 L733.7 384.0 L732.6 379.7Z" fill="#7d9fc2" filter="url(#blur1)"/>
<g filter="url(#blur6)">
<path d="M693.2 292.5 L693.3 292.9 L693.7 292.9 L694.3 293.0 L694.7 293.1 L694.8 293.4 L694.3 293.6 L693.2 293.7 L692.1 293.6 L691.6 293.4 L691.7 293.1 L692.1 293.0 L692.7 292.9 L693.1 292.9 L693.2 292.5 L691.8 289.7 L683.8 288.4 L666.3 289.7 L644.9 295.4 L635.1 305.5 L652.2 316.1 L693.2 320.8 L734.2 316.1 L751.3 305.5 L741.5 295.4 L720.1 289.7 L702.6 288.4 L694.6 289.7Z" fill="#dbe6f3" opacity="0.9"/>
<path d="M693.2 291.7 L693.3 292.9 L693.7 292.9 L694.3 293.0 L694.7 293.1 L694.8 293.4 L694.3 293.6 L693.2 293.7 L692.1 293.6 L691.6 293.4 L691.7 293.1 L692.1 293.0 L692.7 292.9 L693.1 292.9 L693.2 291.7 L692.0 290.0 L685.9 289.0 L673.3 289.7 L658.3 293.3 L651.8 300.1 L664.1 307.2 L693.2 310.3 L722.3 307.2 L734.6 300.1 L728.1 293.3 L713.1 289.7 L700.5 289.0 L694.4 290.0Z" fill="#edf2f8" opacity="0.95"/>
<path d="M736.6 302.7 L732.8 301.8 L728.4 301.5 L723.4 301.5 L717.8 301.8 L711.7 302.2 L705.2 302.6 L698.4 302.9 L691.4 303.2 L684.5 303.4 L677.8 303.6 L671.6 303.8 L666.0 304.2 L661.3 305.0 L657.8 306.2 L655.9 307.9 L656.3 310.1 L659.5 312.7 L666.2 315.3 L676.5 317.4 L689.6 318.6 L704.0 318.7 L717.7 317.4 L728.8 315.1 L736.4 312.2 L740.3 309.1 L741.0 306.4 L739.5 304.2Z" fill="#b9d0ea" opacity="0.85"/>
<path d="M728.8 317.1 L726.6 315.5 L723.5 314.1 L719.9 313.0 L716.0 312.3 L711.9 311.8 L707.7 311.6 L703.5 311.7 L699.4 312.0 L695.4 312.7 L691.6 313.6 L688.2 314.7 L685.4 316.1 L683.3 317.8 L682.1 319.6 L682.2 321.5 L683.7 323.4 L686.6 325.2 L691.0 326.7 L696.5 327.7 L702.8 328.3 L709.3 328.3 L715.7 327.6 L721.2 326.4 L725.6 324.8 L728.5 322.9 L730.0 320.9 L730.0 318.9Z" fill="#c3d7ec" opacity="0.9"/>
</g>
<g filter="url(#cloudf)">
<circle cx="693.2" cy="478.0" r="190.8" fill="#fff" opacity="0.16"/>
<path d="M665.2 339.1 L665.0 337.8 L664.2 336.8 L662.8 336.2 L660.8 336.0 L658.4 336.2 L655.5 336.7 L652.4 337.7 L649.1 338.9 L645.8 340.3 L642.6 342.0 L639.8 343.8 L637.4 345.7 L635.7 347.5 L634.8 349.2 L634.6 350.6 L635.3 351.8 L636.9 352.6 L639.1 352.9 L642.0 352.8 L645.4 352.3 L648.9 351.3 L652.5 349.9 L655.9 348.3 L659.0 346.4 L661.5 344.5 L663.4 342.5 L664.6 340.7Z" fill="#fff" opacity="0.7"/>
<path d="M689.3 349.7 L688.7 348.2 L687.3 347.0 L685.1 346.1 L682.3 345.6 L679.0 345.4 L675.2 345.6 L671.3 346.2 L667.2 347.0 L663.2 348.2 L659.5 349.6 L656.2 351.2 L653.5 353.0 L651.7 354.7 L650.7 356.5 L650.8 358.1 L651.9 359.6 L654.1 360.7 L657.1 361.5 L660.9 361.8 L665.2 361.7 L669.8 361.1 L674.4 360.1 L678.7 358.8 L682.5 357.1 L685.5 355.2 L687.7 353.3 L689.0 351.5Z" fill="#fff" opacity="0.6"/>
<path d="M657.6 357.2 L657.1 356.5 L656.1 356.2 L654.7 356.3 L653.0 356.9 L650.9 357.8 L648.6 359.1 L646.3 360.7 L643.9 362.5 L641.7 364.4 L639.7 366.4 L638.1 368.3 L637.0 370.1 L636.3 371.6 L636.3 372.8 L636.8 373.6 L637.9 374.0 L639.4 373.9 L641.4 373.4 L643.6 372.4 L646.0 371.0 L648.5 369.3 L650.8 367.5 L652.9 365.5 L654.7 363.4 L656.1 361.5 L657.1 359.8 L657.6 358.4Z" fill="#fff" opacity="0.6"/>
<path d="M698.2 341.9 L697.7 339.8 L696.7 337.9 L695.1 336.2 L693.2 334.8 L690.9 333.8 L688.5 333.1 L685.9 332.8 L683.3 333.0 L680.7 333.5 L678.2 334.5 L676.0 335.8 L674.1 337.4 L672.6 339.3 L671.7 341.3 L671.5 343.4 L672.0 345.5 L673.2 347.4 L675.1 349.0 L677.6 350.3 L680.6 351.1 L683.9 351.5 L687.2 351.3 L690.4 350.6 L693.2 349.4 L695.4 347.9 L697.1 346.0 L698.0 344.0Z" fill="#fff" opacity="0.6"/>
<path d="M639.4 364.1 L640.2 361.7 L640.3 359.4 L639.9 357.3 L639.0 355.5 L637.6 354.0 L635.9 353.0 L633.8 352.4 L631.4 352.3 L628.9 352.6 L626.3 353.5 L623.8 354.8 L621.4 356.5 L619.3 358.5 L617.7 360.7 L616.6 363.0 L616.0 365.4 L616.2 367.7 L617.0 369.7 L618.5 371.4 L620.5 372.6 L623.0 373.3 L625.7 373.4 L628.6 372.9 L631.4 371.9 L634.1 370.5 L636.3 368.6 L638.2 366.4Z" fill="#fff" opacity="0.75"/>
<path d="M637.4 381.1 L637.6 379.8 L637.3 378.5 L636.7 377.3 L635.7 376.3 L634.3 375.4 L632.7 374.8 L631.0 374.4 L629.1 374.3 L627.2 374.5 L625.4 374.9 L623.8 375.6 L622.3 376.5 L621.2 377.6 L620.5 378.8 L620.1 380.1 L620.2 381.4 L620.8 382.6 L621.7 383.7 L623.1 384.7 L624.7 385.3 L626.6 385.7 L628.6 385.9 L630.7 385.7 L632.6 385.2 L634.3 384.4 L635.7 383.5 L636.7 382.3Z" fill="#fff" opacity="0.5"/>
<path d="M522.8 451.4 L524.4 444.2 L525.8 437.2 L526.9 430.7 L527.5 425.1 L527.8 420.5 L527.4 417.4 L526.5 415.6 L525.0 415.4 L523.1 416.7 L520.8 419.5 L518.3 423.7 L515.8 429.0 L513.5 435.3 L511.5 442.2 L509.9 449.3 L508.9 456.5 L508.5 463.1 L508.6 469.0 L509.1 473.8 L510.0 477.2 L511.2 479.0 L512.6 479.3 L514.1 477.9 L515.8 474.9 L517.5 470.5 L519.3 465.0 L521.1 458.5Z" fill="#fff" opacity="0.95"/>
<path d="M523.4 490.0 L523.4 486.3 L523.1 482.6 L522.6 479.1 L521.7 475.9 L520.6 473.3 L519.4 471.3 L518.0 470.0 L516.6 469.6 L515.3 469.9 L514.0 471.1 L512.9 473.1 L512.0 475.7 L511.3 478.8 L511.0 482.3 L511.0 486.0 L511.2 489.7 L511.8 493.2 L512.7 496.4 L513.8 499.1 L515.0 501.1 L516.4 502.3 L517.8 502.8 L519.2 502.4 L520.5 501.2 L521.6 499.3 L522.5 496.6 L523.1 493.5Z" fill="#fff" opacity="0.6"/>
<path d="M526.5 415.6 L528.2 411.5 L529.6 407.4 L530.8 403.6 L531.6 400.2 L532.0 397.5 L532.0 395.5 L531.6 394.2 L530.7 393.9 L529.4 394.4 L527.8 395.8 L526.0 398.0 L524.1 400.9 L522.1 404.3 L520.2 408.2 L518.5 412.3 L517.1 416.4 L516.0 420.3 L515.3 423.9 L515.0 426.8 L515.2 429.0 L515.7 430.4 L516.6 430.8 L517.9 430.2 L519.4 428.7 L521.1 426.3 L522.9 423.2 L524.7 419.6Z" fill="#fff" opacity="0.7"/>
<path d="M544.6 439.9 L545.5 436.3 L546.0 432.8 L546.2 429.5 L546.1 426.6 L545.5 424.2 L544.7 422.6 L543.4 421.6 L542.0 421.4 L540.3 422.0 L538.5 423.3 L536.7 425.3 L534.9 428.0 L533.4 431.1 L532.1 434.5 L531.1 438.1 L530.5 441.7 L530.3 445.0 L530.6 448.0 L531.3 450.5 L532.3 452.2 L533.6 453.3 L535.1 453.5 L536.8 452.9 L538.6 451.5 L540.3 449.3 L541.9 446.6 L543.4 443.4Z" fill="#fff" opacity="0.5"/>
<path d="M560.7 509.1 L560.5 508.0 L559.8 506.8 L558.7 505.6 L557.2 504.5 L555.5 503.4 L553.5 502.5 L551.5 501.9 L549.6 501.4 L547.7 501.3 L546.1 501.4 L544.7 501.7 L543.7 502.3 L543.1 503.2 L542.9 504.2 L543.1 505.3 L543.7 506.5 L544.7 507.8 L546.0 508.9 L547.6 510.0 L549.4 510.9 L551.4 511.6 L553.4 512.0 L555.3 512.2 L557.1 512.0 L558.6 511.6 L559.7 511.0 L560.4 510.2Z" fill="#fff" opacity="0.7"/>
<path d="M597.5 539.2 L596.4 537.3 L594.7 535.5 L592.6 534.2 L590.0 533.2 L587.2 532.7 L584.3 532.7 L581.4 533.2 L578.8 534.1 L576.5 535.4 L574.7 537.1 L573.4 539.0 L572.7 541.1 L572.6 543.3 L573.1 545.4 L574.2 547.4 L575.8 549.1 L577.8 550.5 L580.3 551.5 L582.9 552.0 L585.7 552.0 L588.5 551.6 L591.1 550.7 L593.5 549.3 L595.4 547.7 L596.9 545.7 L597.7 543.6 L598.0 541.4Z" fill="#fff" opacity="0.6"/>
<path d="M621.3 571.2 L619.3 569.0 L616.4 567.4 L612.8 566.5 L608.8 566.2 L604.5 566.7 L600.2 567.7 L596.3 569.4 L592.8 571.6 L590.0 574.1 L588.0 576.9 L586.8 579.9 L586.5 582.8 L587.1 585.6 L588.5 588.0 L590.5 590.1 L593.2 591.7 L596.3 592.6 L599.8 593.0 L603.5 592.7 L607.3 591.8 L611.0 590.2 L614.5 588.2 L617.6 585.6 L620.0 582.7 L621.8 579.7 L622.6 576.7 L622.4 573.8Z" fill="#fff" opacity="0.6"/>
<path d="M601.3 596.6 L599.3 594.5 L596.4 592.7 L592.8 591.3 L588.6 590.4 L584.1 590.0 L579.7 590.1 L575.7 590.8 L572.2 592.0 L569.5 593.6 L567.6 595.5 L566.7 597.7 L566.6 600.0 L567.3 602.3 L568.7 604.6 L570.8 606.7 L573.3 608.5 L576.2 609.9 L579.4 610.9 L582.8 611.4 L586.4 611.4 L589.9 610.8 L593.3 609.7 L596.4 608.1 L599.0 606.2 L601.0 603.9 L602.1 601.5 L602.2 599.0Z" fill="#fff" opacity="0.65"/>
<path d="M626.3 560.0 L625.9 558.0 L624.8 556.0 L623.2 554.1 L621.2 552.5 L618.8 551.2 L616.2 550.2 L613.6 549.7 L610.9 549.6 L608.5 549.9 L606.4 550.8 L604.7 552.0 L603.4 553.5 L602.8 555.3 L602.7 557.3 L603.2 559.3 L604.3 561.3 L605.9 563.2 L607.9 564.8 L610.2 566.2 L612.7 567.1 L615.3 567.6 L617.9 567.7 L620.3 567.3 L622.4 566.5 L624.2 565.3 L625.5 563.8 L626.2 562.0Z" fill="#fff" opacity="0.55"/>
<path d="M555.8 539.2 L554.3 536.7 L552.3 534.6 L550.0 533.1 L547.6 532.1 L545.1 531.8 L542.7 532.2 L540.5 533.2 L538.8 534.8 L537.4 536.9 L536.6 539.4 L536.2 542.2 L536.4 545.1 L537.1 548.1 L538.3 550.8 L539.8 553.3 L541.6 555.3 L543.7 556.9 L545.9 557.8 L548.1 558.2 L550.3 557.8 L552.3 556.8 L554.1 555.3 L555.6 553.2 L556.7 550.7 L557.3 547.9 L557.4 544.9 L556.9 542.0Z" fill="#fff" opacity="0.5"/>
<path d="M553.1 574.9 L551.5 572.5 L549.3 570.3 L546.9 568.4 L544.2 567.1 L541.6 566.2 L539.2 565.9 L537.1 566.3 L535.5 567.1 L534.5 568.5 L534.0 570.4 L534.1 572.6 L534.7 575.0 L535.8 577.6 L537.2 580.1 L538.8 582.5 L540.7 584.7 L542.6 586.5 L544.6 587.8 L546.6 588.7 L548.6 588.9 L550.4 588.7 L552.0 587.8 L553.3 586.5 L554.3 584.7 L554.8 582.5 L554.8 580.1 L554.3 577.5Z" fill="#fff" opacity="0.5"/>
<path d="M701.0 577.4 L698.9 574.1 L695.5 571.3 L691.0 569.3 L685.7 568.0 L679.7 567.7 L673.5 568.2 L667.3 569.6 L661.6 571.8 L656.6 574.6 L652.6 578.0 L649.9 581.7 L648.4 585.5 L648.2 589.4 L649.4 593.0 L651.7 596.2 L655.2 598.9 L659.5 600.9 L664.5 602.1 L669.9 602.6 L675.7 602.1 L681.4 600.9 L686.8 598.8 L691.7 596.1 L695.9 592.8 L699.1 589.1 L701.1 585.1 L701.7 581.2Z" fill="#fff" opacity="0.9"/>
<path d="M709.3 568.9 L709.0 566.3 L707.8 563.8 L705.9 561.6 L703.4 559.7 L700.3 558.3 L696.8 557.4 L693.2 557.1 L689.6 557.4 L686.1 558.3 L683.0 559.7 L680.5 561.6 L678.6 563.8 L677.4 566.3 L677.1 568.9 L677.5 571.5 L678.8 573.9 L680.7 576.1 L683.3 578.0 L686.3 579.4 L689.7 580.2 L693.2 580.5 L696.7 580.2 L700.1 579.4 L703.1 578.0 L705.7 576.1 L707.6 573.9 L708.9 571.5Z" fill="#fff" opacity="0.75"/>
<path d="M672.5 604.1 L671.9 601.9 L670.7 599.7 L668.8 597.7 L666.3 595.9 L663.3 594.6 L660.1 593.6 L656.7 593.2 L653.4 593.3 L650.3 593.9 L647.7 594.9 L645.6 596.4 L644.2 598.3 L643.5 600.3 L643.5 602.6 L644.2 604.8 L645.7 607.0 L647.7 608.9 L650.2 610.6 L653.0 611.9 L656.1 612.8 L659.2 613.2 L662.3 613.1 L665.2 612.6 L667.7 611.5 L669.8 610.1 L671.4 608.3 L672.3 606.3Z" fill="#fff" opacity="0.65"/>
<path d="M716.4 531.8 L716.1 529.7 L715.1 527.7 L713.6 525.9 L711.5 524.4 L709.0 523.3 L706.1 522.7 L703.2 522.5 L700.2 522.8 L697.4 523.5 L694.9 524.7 L692.8 526.2 L691.2 528.0 L690.2 530.0 L689.9 532.2 L690.2 534.3 L691.2 536.3 L692.8 538.1 L694.9 539.6 L697.4 540.7 L700.2 541.4 L703.1 541.6 L706.1 541.3 L708.9 540.6 L711.4 539.4 L713.5 537.9 L715.1 536.0 L716.1 534.0Z" fill="#fff" opacity="0.5"/>
<path d="M686.6 499.6 L686.1 498.1 L684.7 496.7 L682.3 495.4 L679.2 494.3 L675.5 493.4 L671.4 492.8 L667.0 492.5 L662.7 492.5 L658.6 492.8 L654.9 493.4 L651.8 494.3 L649.5 495.4 L648.0 496.8 L647.5 498.2 L647.9 499.7 L649.3 501.2 L651.6 502.6 L654.6 503.8 L658.3 504.7 L662.4 505.4 L666.8 505.7 L671.2 505.7 L675.4 505.3 L679.1 504.6 L682.3 503.6 L684.6 502.4 L686.1 501.0Z" fill="#fff" opacity="0.4"/>
<path d="M724.3 585.4 L724.2 582.9 L723.4 580.6 L722.1 578.5 L720.2 576.8 L717.8 575.6 L715.2 574.8 L712.4 574.6 L709.5 574.9 L706.8 575.8 L704.4 577.2 L702.3 579.1 L700.8 581.2 L699.8 583.6 L699.5 586.0 L699.7 588.5 L700.6 590.7 L702.0 592.8 L703.9 594.4 L706.2 595.6 L708.7 596.3 L711.4 596.5 L714.1 596.2 L716.7 595.3 L719.1 594.0 L721.2 592.3 L722.8 590.2 L723.8 587.8Z" fill="#fff" opacity="0.6"/>
<path d="M696.5 544.8 L696.0 542.7 L694.5 540.7 L692.2 538.9 L689.0 537.4 L685.2 536.3 L681.0 535.5 L676.6 535.2 L672.2 535.3 L668.0 535.9 L664.3 536.9 L661.2 538.3 L658.9 540.0 L657.4 541.9 L657.0 543.9 L657.5 546.0 L659.0 548.1 L661.4 549.9 L664.5 551.5 L668.2 552.8 L672.4 553.6 L676.8 553.9 L681.2 553.8 L685.3 553.1 L689.1 552.1 L692.2 550.6 L694.5 548.9 L696.0 546.9Z" fill="#fff" opacity="0.45"/>
<path d="M758.6 574.7 L758.6 570.9 L757.6 567.3 L755.8 564.1 L753.1 561.6 L749.7 559.7 L745.9 558.7 L741.7 558.5 L737.4 559.3 L733.3 560.8 L729.6 563.2 L726.4 566.1 L724.0 569.6 L722.4 573.3 L721.7 577.1 L722.0 580.9 L723.2 584.3 L725.1 587.4 L727.8 589.8 L731.1 591.5 L734.7 592.5 L738.7 592.7 L742.7 592.0 L746.5 590.5 L750.2 588.3 L753.3 585.5 L755.9 582.2 L757.7 578.5Z" fill="#fff" opacity="0.85"/>
<path d="M794.9 541.3 L793.9 539.8 L791.8 538.9 L788.7 538.7 L784.8 539.2 L780.3 540.4 L775.3 542.1 L770.1 544.4 L765.0 547.0 L760.2 549.9 L756.0 552.9 L752.7 555.9 L750.4 558.6 L749.1 561.1 L749.1 563.2 L750.3 564.7 L752.6 565.7 L755.8 566.0 L759.9 565.7 L764.6 564.7 L769.7 563.0 L774.8 560.8 L779.8 558.2 L784.4 555.3 L788.4 552.1 L791.5 549.0 L793.7 546.1 L794.9 543.5Z" fill="#fff" opacity="0.8"/>
<path d="M824.4 535.9 L824.4 533.8 L823.4 531.8 L821.5 530.0 L818.8 528.4 L815.3 527.3 L811.1 526.5 L806.6 526.2 L801.8 526.3 L797.1 526.8 L792.8 527.8 L788.9 529.1 L785.9 530.8 L783.8 532.8 L782.8 534.8 L783.0 537.0 L784.2 539.1 L786.5 541.0 L789.7 542.7 L793.6 544.0 L798.0 544.8 L802.6 545.2 L807.2 545.0 L811.6 544.4 L815.5 543.3 L818.9 541.8 L821.6 540.0 L823.4 538.0Z" fill="#fff" opacity="0.8"/>
<path d="M847.9 530.2 L847.5 527.8 L846.5 525.9 L844.8 524.6 L842.4 524.1 L839.6 524.2 L836.4 525.1 L832.9 526.6 L829.3 528.6 L825.9 531.2 L822.8 534.1 L820.2 537.2 L818.2 540.3 L817.0 543.4 L816.7 546.2 L817.1 548.6 L818.4 550.5 L820.4 551.8 L823.0 552.4 L826.1 552.3 L829.4 551.5 L832.9 550.1 L836.3 548.0 L839.5 545.5 L842.3 542.6 L844.6 539.4 L846.4 536.2 L847.5 533.1Z" fill="#fff" opacity="0.8"/>
<path d="M802.2 571.4 L801.1 569.8 L798.9 569.0 L795.8 569.0 L792.0 569.8 L787.7 571.5 L782.9 573.8 L778.1 576.7 L773.5 580.0 L769.2 583.5 L765.6 587.0 L762.8 590.5 L760.9 593.6 L760.1 596.3 L760.4 598.5 L761.7 600.0 L764.0 600.8 L767.1 600.9 L770.9 600.2 L775.2 598.8 L779.8 596.7 L784.5 594.0 L789.0 590.8 L793.2 587.3 L796.7 583.7 L799.5 580.1 L801.4 576.7 L802.4 573.8Z" fill="#fff" opacity="0.7"/>
<path d="M864.3 511.8 L864.3 508.3 L863.7 505.3 L862.7 502.8 L861.3 500.9 L859.4 499.8 L857.3 499.5 L855.0 500.1 L852.6 501.4 L850.2 503.5 L848.1 506.2 L846.2 509.4 L844.7 512.9 L843.7 516.6 L843.2 520.2 L843.3 523.7 L843.9 526.7 L845.0 529.2 L846.6 531.1 L848.5 532.2 L850.7 532.4 L853.0 531.9 L855.4 530.6 L857.6 528.5 L859.7 525.8 L861.4 522.6 L862.8 519.1 L863.8 515.4Z" fill="#fff" opacity="0.7"/>
<path d="M828.1 565.5 L828.2 563.6 L827.7 562.0 L826.6 560.8 L824.8 559.9 L822.4 559.5 L819.6 559.6 L816.5 560.1 L813.3 561.0 L810.0 562.3 L807.0 564.0 L804.3 565.8 L802.1 567.8 L800.6 569.9 L799.9 571.8 L799.8 573.7 L800.6 575.3 L802.0 576.5 L804.0 577.4 L806.5 577.8 L809.3 577.8 L812.4 577.3 L815.5 576.4 L818.5 575.1 L821.3 573.5 L823.8 571.6 L825.8 569.6 L827.2 567.5Z" fill="#fff" opacity="0.55"/>
<path d="M778.2 594.4 L777.5 593.1 L775.7 592.4 L772.9 592.2 L769.2 592.6 L764.9 593.6 L760.0 595.1 L755.0 597.0 L750.0 599.1 L745.4 601.5 L741.3 603.9 L738.0 606.3 L735.7 608.5 L734.4 610.5 L734.2 612.2 L735.1 613.4 L737.1 614.2 L739.9 614.4 L743.6 614.2 L747.8 613.4 L752.5 612.1 L757.3 610.4 L762.1 608.3 L766.6 605.9 L770.6 603.4 L773.9 600.8 L776.4 598.4 L777.8 596.2Z" fill="#fff" opacity="0.55"/>
<path d="M873.9 466.1 L872.8 459.8 L871.3 453.9 L869.5 448.9 L867.6 445.0 L865.6 442.3 L863.9 441.0 L862.4 441.1 L861.2 442.6 L860.4 445.5 L860.0 449.7 L860.0 454.8 L860.3 460.8 L860.8 467.2 L861.5 473.8 L862.5 480.2 L863.5 486.1 L864.7 491.2 L865.9 495.2 L867.3 497.9 L868.7 499.2 L870.1 499.1 L871.4 497.5 L872.7 494.6 L873.7 490.4 L874.4 485.1 L874.7 479.1 L874.5 472.7Z" fill="#fff" opacity="0.95"/>
<path d="M881.1 486.3 L881.0 482.1 L880.6 478.4 L879.9 475.3 L879.0 473.0 L878.0 471.6 L876.8 471.2 L875.6 471.8 L874.4 473.3 L873.2 475.8 L872.2 479.0 L871.3 482.8 L870.7 487.0 L870.2 491.5 L870.1 495.9 L870.2 500.1 L870.7 503.8 L871.3 506.9 L872.2 509.2 L873.2 510.6 L874.4 511.0 L875.6 510.4 L876.8 508.9 L878.0 506.4 L879.0 503.2 L879.9 499.4 L880.6 495.2 L881.0 490.7Z" fill="#fff" opacity="0.9"/>
<path d="M861.4 437.9 L860.2 434.5 L858.8 431.4 L857.2 428.8 L855.5 426.8 L853.9 425.4 L852.4 424.9 L851.1 425.1 L850.0 426.1 L849.2 427.8 L848.8 430.2 L848.7 433.1 L848.9 436.5 L849.5 440.0 L850.4 443.6 L851.5 447.1 L852.8 450.3 L854.3 453.0 L855.8 455.1 L857.4 456.5 L858.9 457.1 L860.3 456.9 L861.5 455.8 L862.3 454.0 L862.9 451.5 L863.1 448.5 L862.9 445.1 L862.4 441.5Z" fill="#fff" opacity="0.6"/>
<path d="M878.2 434.9 L876.7 429.5 L875.0 424.8 L873.2 420.8 L871.5 418.0 L869.9 416.2 L868.5 415.7 L867.4 416.5 L866.6 418.5 L866.2 421.6 L866.1 425.6 L866.4 430.5 L867.1 436.0 L868.0 441.8 L869.3 447.6 L870.8 453.2 L872.4 458.1 L874.1 462.3 L875.8 465.3 L877.4 467.2 L878.9 467.7 L880.1 466.9 L880.9 464.8 L881.4 461.5 L881.5 457.2 L881.2 452.1 L880.6 446.5 L879.5 440.7Z" fill="#fff" opacity="0.8"/>
<path d="M877.0 519.9 L877.6 515.8 L877.7 512.3 L877.4 509.4 L876.7 507.4 L875.5 506.3 L874.0 506.3 L872.1 507.2 L869.9 509.0 L867.7 511.8 L865.4 515.2 L863.3 519.1 L861.5 523.4 L860.1 527.9 L859.1 532.2 L858.7 536.2 L858.8 539.6 L859.4 542.4 L860.5 544.4 L861.9 545.4 L863.6 545.5 L865.5 544.6 L867.5 542.8 L869.5 540.2 L871.5 536.8 L873.2 532.9 L874.8 528.6 L876.1 524.2Z" fill="#fff" opacity="0.7"/>
<path d="M659.8 410.5 L658.6 409.5 L655.6 409.4 L650.9 410.1 L644.9 411.6 L637.8 413.8 L629.9 416.6 L621.7 419.7 L613.5 423.1 L605.8 426.6 L598.9 430.0 L593.3 433.2 L589.1 436.1 L586.6 438.5 L585.9 440.4 L586.9 441.6 L589.7 442.0 L594.2 441.7 L600.2 440.6 L607.4 438.7 L615.4 436.1 L623.9 433.0 L632.3 429.4 L640.2 425.6 L647.2 421.7 L652.9 418.1 L656.9 414.9 L659.3 412.4Z" fill="#fff" opacity="0.45"/>
<path d="M604.7 433.8 L603.9 432.7 L602.1 432.2 L599.4 432.3 L596.0 432.9 L592.1 434.1 L587.7 435.7 L583.3 437.6 L578.9 439.9 L574.9 442.3 L571.4 444.8 L568.5 447.2 L566.5 449.5 L565.3 451.5 L565.0 453.1 L565.7 454.2 L567.3 454.9 L569.8 454.9 L573.0 454.4 L576.8 453.4 L581.0 451.8 L585.5 449.8 L589.9 447.5 L594.2 444.9 L597.9 442.3 L601.0 439.7 L603.2 437.4 L604.5 435.4Z" fill="#fff" opacity="0.4"/>
<path d="M731.0 356.5 L729.3 354.7 L727.0 353.5 L724.3 352.9 L721.1 353.0 L717.6 353.7 L713.9 355.1 L710.1 356.9 L706.4 359.3 L702.8 362.0 L699.7 365.0 L697.1 368.1 L695.3 371.2 L694.4 374.1 L694.6 376.7 L695.9 378.8 L698.2 380.3 L701.5 381.1 L705.5 381.2 L710.0 380.5 L714.7 379.1 L719.2 377.0 L723.4 374.3 L726.8 371.3 L729.5 368.0 L731.2 364.8 L732.0 361.7 L731.9 358.9Z" fill="#fff" opacity="0.55"/>
<path d="M802.0 378.0 L800.0 375.9 L797.4 374.4 L794.3 373.5 L791.0 373.3 L787.4 373.7 L783.8 374.8 L780.2 376.4 L776.8 378.6 L773.7 381.2 L771.1 384.1 L769.1 387.1 L767.9 390.3 L767.7 393.3 L768.4 396.0 L770.2 398.4 L772.9 400.2 L776.5 401.4 L780.6 401.8 L785.0 401.5 L789.5 400.4 L793.8 398.5 L797.5 396.1 L800.5 393.3 L802.6 390.1 L803.8 386.8 L804.0 383.6 L803.4 380.6Z" fill="#fff" opacity="0.55"/>
<path d="M818.5 346.8 L815.1 344.0 L811.5 341.8 L807.8 340.1 L804.2 339.2 L800.8 338.9 L797.6 339.3 L794.8 340.4 L792.5 342.1 L790.6 344.4 L789.4 347.2 L788.8 350.3 L789.1 353.8 L790.3 357.3 L792.4 360.8 L795.5 364.1 L799.3 367.0 L803.8 369.2 L808.7 370.6 L813.5 371.1 L818.0 370.7 L821.7 369.4 L824.5 367.2 L826.1 364.4 L826.5 361.0 L825.8 357.4 L824.1 353.7 L821.6 350.1Z" fill="#fff" opacity="0.6"/>
<path d="M840.1 398.1 L838.7 396.5 L836.8 395.6 L834.7 395.4 L832.2 395.8 L829.4 396.9 L826.5 398.6 L823.5 400.8 L820.5 403.4 L817.7 406.3 L815.3 409.3 L813.4 412.4 L812.2 415.3 L811.8 418.0 L812.3 420.2 L813.8 421.9 L816.0 423.0 L819.0 423.5 L822.5 423.1 L826.2 422.1 L829.9 420.4 L833.3 418.1 L836.2 415.3 L838.6 412.3 L840.2 409.0 L841.2 405.9 L841.4 402.9 L841.0 400.2Z" fill="#fff" opacity="0.55"/>
<path d="M770.6 396.5 L769.6 394.6 L767.9 392.9 L765.7 391.4 L763.1 390.3 L760.2 389.6 L757.2 389.3 L754.1 389.5 L751.1 390.1 L748.3 391.0 L745.9 392.3 L744.0 394.0 L742.7 395.8 L742.1 397.8 L742.1 399.9 L743.0 401.9 L744.5 403.7 L746.7 405.3 L749.4 406.5 L752.5 407.3 L755.9 407.7 L759.3 407.5 L762.5 406.9 L765.4 405.8 L767.7 404.4 L769.5 402.6 L770.6 400.6 L771.0 398.6Z" fill="#fff" opacity="0.45"/>
<path d="M737.2 329.6 L734.9 327.6 L732.3 326.0 L729.4 324.9 L726.5 324.4 L723.5 324.3 L720.6 324.8 L717.7 325.7 L715.0 327.2 L712.4 329.1 L710.2 331.3 L708.3 333.8 L707.1 336.5 L706.5 339.2 L706.8 341.9 L708.1 344.3 L710.3 346.3 L713.4 347.9 L717.2 348.8 L721.5 349.0 L725.9 348.4 L730.1 347.2 L733.9 345.4 L736.8 343.0 L738.8 340.4 L739.8 337.5 L739.8 334.7 L738.8 332.0Z" fill="#fff" opacity="0.6"/>
<path d="M706.7 328.4 L705.9 326.6 L704.5 324.9 L702.7 323.5 L700.6 322.3 L698.2 321.5 L695.7 320.9 L693.2 320.8 L690.7 320.9 L688.2 321.5 L685.8 322.3 L683.7 323.5 L681.9 324.9 L680.5 326.6 L679.7 328.4 L679.6 330.3 L680.2 332.1 L681.6 333.8 L683.8 335.3 L686.5 336.4 L689.7 337.1 L693.2 337.3 L696.7 337.1 L699.9 336.4 L702.6 335.3 L704.8 333.8 L706.2 332.1 L706.8 330.3Z" fill="#fff" opacity="0.6"/>
<path d="M814.0 331.2 L809.6 328.0 L805.7 325.6 L802.1 324.0 L799.1 323.3 L796.5 323.3 L794.4 324.2 L792.8 325.7 L791.7 328.0 L791.1 331.0 L791.1 334.5 L791.9 338.6 L793.5 342.9 L795.9 347.4 L799.4 351.8 L803.8 355.9 L809.1 359.4 L814.8 362.0 L820.6 363.5 L825.8 363.7 L830.1 362.7 L832.8 360.6 L833.9 357.3 L833.2 353.3 L830.9 348.8 L827.4 344.0 L823.2 339.4 L818.6 335.0Z" fill="#fff" opacity="0.55"/>
</g>
<g transform="rotate(-38 693.2 478.0)" filter="url(#streakf)"><g transform="rotate(38 693.2 478.0)">
<path d="M644.3 333.4 L644.3 331.5 L642.1 330.7 L637.9 330.7 L631.7 331.6 L623.9 333.2 L614.8 335.4 L604.8 338.2 L594.7 341.4 L584.8 345.0 L575.9 348.7 L568.3 352.5 L562.2 356.2 L557.7 359.8 L554.9 362.9 L553.9 365.4 L554.8 367.2 L557.8 368.1 L563.0 368.0 L570.4 366.8 L579.7 364.6 L590.3 361.4 L601.6 357.4 L612.7 352.9 L622.8 348.3 L631.3 343.7 L637.8 339.6 L642.2 336.1Z" fill="#fff" opacity="1.0"/>
<path d="M604.8 350.9 L604.6 349.4 L602.5 348.9 L598.5 349.5 L593.0 351.0 L586.1 353.4 L578.4 356.5 L570.3 360.3 L562.3 364.5 L554.8 369.0 L548.2 373.7 L542.8 378.2 L538.5 382.4 L535.6 386.1 L533.9 388.9 L533.7 390.9 L534.8 391.8 L537.4 391.5 L541.5 390.2 L547.2 387.7 L554.2 384.3 L562.1 380.1 L570.6 375.4 L579.1 370.4 L587.1 365.4 L594.0 360.7 L599.4 356.6 L603.1 353.3Z" fill="#fff" opacity="0.95"/>
<path d="M658.5 328.4 L658.8 326.4 L657.7 324.9 L655.2 323.9 L651.6 323.4 L646.8 323.5 L641.0 324.0 L634.5 324.9 L627.6 326.1 L620.5 327.7 L613.6 329.6 L607.2 331.7 L601.7 334.0 L597.3 336.5 L594.1 338.9 L592.5 341.3 L592.5 343.5 L594.3 345.3 L598.0 346.5 L603.3 347.1 L610.1 347.0 L617.9 346.1 L626.2 344.5 L634.4 342.2 L641.9 339.5 L648.3 336.6 L653.2 333.7 L656.7 330.9Z" fill="#fff" opacity="1.0"/>
<path d="M638.9 359.9 L638.5 358.6 L637.1 357.8 L634.9 357.6 L631.9 358.0 L628.3 358.9 L624.1 360.3 L619.6 362.2 L615.1 364.4 L610.6 366.9 L606.5 369.5 L603.0 372.2 L600.3 374.7 L598.4 377.1 L597.6 379.0 L597.9 380.6 L599.2 381.6 L601.6 381.9 L604.8 381.6 L608.8 380.7 L613.2 379.2 L618.0 377.2 L622.7 374.8 L627.1 372.1 L631.1 369.3 L634.4 366.5 L636.8 364.0 L638.3 361.7Z" fill="#fff" opacity="0.85"/>
<path d="M562.6 376.8 L562.7 375.0 L561.5 374.1 L559.1 374.1 L555.8 374.9 L551.8 376.7 L547.3 379.1 L542.7 382.3 L538.0 386.0 L533.7 390.0 L529.9 394.2 L526.7 398.4 L524.2 402.3 L522.4 405.8 L521.3 408.7 L521.1 410.8 L521.6 411.9 L523.1 412.1 L525.3 411.2 L528.5 409.4 L532.4 406.7 L536.9 403.3 L541.7 399.4 L546.7 395.1 L551.4 390.7 L555.6 386.5 L559.0 382.7 L561.4 379.4Z" fill="#fff" opacity="0.85"/>
<path d="M677.7 326.2 L677.6 324.0 L675.9 321.8 L673.0 319.7 L669.3 317.9 L664.9 316.2 L660.2 314.8 L655.3 313.6 L650.3 312.7 L645.4 312.1 L640.6 311.8 L636.0 311.9 L631.6 312.5 L627.6 313.5 L624.1 315.0 L621.3 316.9 L619.5 319.3 L619.1 322.0 L620.4 324.9 L623.6 327.7 L628.8 330.2 L635.6 332.1 L643.6 333.3 L652.0 333.7 L660.1 333.2 L667.1 332.1 L672.5 330.5 L676.1 328.4Z" fill="#fff" opacity="1"/>
<path d="M605.7 376.2 L605.2 374.7 L603.5 374.0 L600.4 374.0 L596.3 374.7 L591.3 376.1 L585.7 378.0 L579.8 380.4 L573.9 383.1 L568.3 386.1 L563.3 389.3 L559.0 392.4 L555.7 395.3 L553.5 397.9 L552.5 400.1 L552.7 401.8 L554.1 402.7 L556.7 403.0 L560.5 402.5 L565.2 401.3 L570.7 399.3 L576.7 396.8 L582.9 393.8 L588.9 390.5 L594.3 387.1 L598.9 383.8 L602.5 380.8 L604.8 378.2Z" fill="#fff" opacity="0.75"/>
<path d="M644.0 344.9 L644.0 343.6 L643.1 342.6 L641.3 342.0 L638.7 341.8 L635.5 342.1 L631.6 342.7 L627.4 343.7 L623.1 345.0 L618.7 346.6 L614.5 348.4 L610.8 350.2 L607.7 352.2 L605.4 354.1 L604.0 355.8 L603.7 357.4 L604.4 358.6 L606.1 359.4 L608.9 359.8 L612.5 359.7 L616.7 359.1 L621.3 358.0 L626.0 356.5 L630.6 354.7 L634.8 352.7 L638.3 350.6 L641.1 348.5 L643.0 346.6Z" fill="#fff" opacity="0.85"/>
<path d="M613.5 325.1 L615.4 323.0 L616.0 321.5 L615.2 320.5 L613.1 320.2 L609.8 320.4 L605.5 321.3 L600.4 322.6 L594.9 324.6 L589.1 326.9 L583.4 329.7 L578.0 332.8 L573.1 336.0 L569.0 339.3 L565.7 342.3 L563.4 345.0 L562.3 347.2 L562.4 348.7 L563.9 349.4 L566.8 349.3 L570.9 348.2 L576.1 346.4 L582.0 343.9 L588.3 340.9 L594.7 337.6 L600.7 334.1 L606.0 330.8 L610.3 327.8Z" fill="#fff" opacity="0.95"/>
<path d="M639.2 325.3 L640.7 323.2 L640.9 321.4 L640.1 319.9 L638.3 318.7 L635.5 317.8 L632.0 317.3 L627.9 317.2 L623.3 317.4 L618.4 317.9 L613.5 318.7 L608.7 319.9 L604.2 321.4 L600.2 323.1 L596.8 325.1 L594.3 327.3 L592.7 329.5 L592.3 331.6 L593.2 333.4 L595.6 334.9 L599.3 335.9 L604.2 336.3 L609.9 336.0 L616.1 335.1 L622.2 333.7 L627.9 331.9 L632.8 329.7 L636.6 327.5Z" fill="#fff" opacity="0.95"/>
<path d="M579.8 342.6 L581.0 340.7 L581.2 339.3 L580.3 338.7 L578.4 338.7 L575.7 339.4 L572.3 340.7 L568.5 342.7 L564.3 345.2 L560.1 348.1 L556.1 351.3 L552.3 354.8 L549.0 358.2 L546.2 361.5 L544.2 364.4 L542.8 366.7 L542.4 368.4 L542.8 369.3 L544.2 369.3 L546.5 368.5 L549.6 366.9 L553.4 364.6 L557.6 361.7 L562.2 358.4 L566.7 355.0 L570.9 351.5 L574.7 348.1 L577.7 345.1Z" fill="#fff" opacity="0.85"/>
<path d="M610.8 356.3 L610.8 355.0 L609.7 354.2 L607.6 354.0 L604.6 354.3 L600.8 355.1 L596.5 356.5 L591.8 358.2 L586.9 360.3 L582.2 362.7 L577.9 365.2 L574.1 367.8 L571.1 370.2 L568.9 372.5 L567.7 374.5 L567.5 376.0 L568.4 377.0 L570.3 377.5 L573.2 377.3 L577.0 376.5 L581.4 375.1 L586.2 373.2 L591.2 370.8 L596.1 368.3 L600.7 365.5 L604.5 362.9 L607.6 360.3 L609.7 358.1Z" fill="#fff" opacity="0.9"/>
<path d="M614.4 376.0 L613.9 374.9 L612.6 374.4 L610.4 374.5 L607.4 375.1 L603.9 376.3 L600.0 378.0 L595.8 380.0 L591.6 382.4 L587.6 385.0 L584.0 387.7 L581.0 390.4 L578.7 392.8 L577.2 395.0 L576.6 396.7 L577.0 398.0 L578.3 398.7 L580.5 398.7 L583.5 398.1 L587.1 396.9 L591.1 395.2 L595.4 393.0 L599.6 390.5 L603.7 387.7 L607.3 384.9 L610.3 382.2 L612.5 379.8 L613.9 377.7Z" fill="#fff" opacity="0.7"/>
<path d="M620.1 319.1 L624.7 316.1 L628.8 313.0 L632.1 310.2 L634.7 307.7 L636.6 305.6 L637.5 303.9 L637.6 302.6 L636.8 301.7 L635.0 301.2 L632.4 301.1 L629.0 301.4 L625.0 302.2 L620.4 303.5 L615.3 305.4 L610.0 307.7 L604.6 310.5 L599.5 313.6 L595.0 316.9 L591.7 320.1 L589.8 323.0 L589.7 325.3 L591.2 327.0 L594.4 327.7 L598.8 327.5 L604.0 326.4 L609.5 324.5 L615.0 322.0Z" fill="#fff" opacity="1"/>
<path d="M711.2 312.8 L708.7 310.7 L704.7 309.0 L699.6 307.5 L694.0 306.2 L688.1 305.1 L682.3 304.1 L676.6 303.3 L671.1 302.5 L665.7 301.9 L660.4 301.4 L655.4 301.1 L650.5 301.2 L645.8 301.7 L641.4 302.7 L637.4 304.4 L634.4 306.9 L633.0 309.9 L634.1 313.3 L638.6 316.8 L646.5 319.9 L657.5 322.2 L670.2 323.4 L683.1 323.3 L694.6 322.1 L703.4 320.1 L709.0 317.6 L711.5 315.1Z" fill="#fff" opacity="1"/>
<path d="M742.6 299.6 L739.0 298.9 L735.4 298.8 L731.8 299.1 L727.9 299.7 L723.8 300.5 L719.3 301.4 L714.5 302.4 L709.4 303.5 L704.1 304.6 L698.8 305.8 L693.8 307.1 L689.5 308.5 L686.2 310.0 L684.6 311.7 L685.1 313.6 L688.2 315.6 L694.1 317.3 L702.7 318.5 L713.2 319.0 L724.5 318.5 L735.1 316.9 L743.7 314.5 L749.3 311.4 L751.7 308.2 L751.5 305.2 L749.3 302.7 L746.1 300.8Z" fill="#fff" opacity="0.9"/>
</g></g>
<g transform="rotate(4 693.2 478.0)" filter="url(#streakf)"><g transform="rotate(-4 693.2 478.0)">
<path d="M765.4 627.9 L762.7 626.2 L752.4 626.1 L734.6 627.4 L709.9 629.4 L680.4 631.3 L649.2 632.3 L620.6 632.2 L597.9 631.1 L583.2 629.7 L576.4 628.5 L575.6 628.2 L577.8 629.9 L581.4 632.6 L585.2 635.3 L588.7 637.7 L591.9 639.7 L595.4 641.8 L600.2 644.6 L608.0 647.8 L620.6 650.4 L638.5 651.9 L660.8 651.8 L685.7 649.8 L710.5 646.1 L732.5 641.2 L749.7 636.0 L760.9 631.3Z" fill="#fff" opacity="0.95"/>
<path d="M803.2 633.9 L807.0 631.2 L809.6 629.2 L810.2 628.6 L807.0 629.1 L798.6 630.5 L784.2 632.3 L764.2 634.1 L740.4 635.5 L715.3 636.4 L691.8 636.8 L672.2 637.2 L658.0 637.9 L650.0 639.3 L648.0 641.5 L651.7 644.4 L660.6 647.8 L673.7 651.1 L690.1 653.9 L708.4 655.7 L726.9 656.3 L744.2 655.6 L759.3 653.6 L771.5 650.8 L780.9 647.3 L788.0 643.6 L793.8 640.1 L798.8 636.9Z" fill="#fff" opacity="0.95"/>
<path d="M602.3 616.9 L599.3 614.4 L594.2 612.3 L587.4 610.6 L579.8 609.3 L572.0 608.4 L565.2 607.9 L559.8 607.9 L556.6 608.4 L555.4 609.3 L556.1 610.7 L558.1 612.7 L560.7 615.3 L563.6 618.0 L566.4 620.6 L569.0 622.8 L571.2 624.7 L573.1 626.3 L574.8 627.6 L576.5 628.8 L578.7 629.5 L581.7 629.7 L585.4 629.3 L589.8 628.3 L594.4 626.7 L598.6 624.5 L601.6 622.1 L603.0 619.5Z" fill="#fff" opacity="0.85"/>
<path d="M796.7 638.3 L801.1 635.4 L803.3 633.8 L801.3 635.2 L791.3 639.5 L769.2 644.6 L735.0 648.7 L693.2 650.2 L651.4 648.7 L617.2 644.6 L595.1 639.5 L585.1 635.2 L583.1 633.8 L585.3 635.4 L589.7 638.3 L595.3 641.8 L602.2 645.7 L611.3 650.4 L624.4 656.0 L642.8 661.3 L666.4 664.9 L693.2 666.2 L720.0 664.9 L743.6 661.3 L762.0 656.0 L775.1 650.4 L784.2 645.7 L791.1 641.8Z" fill="#fff" opacity="1"/>
<path d="M719.0 625.8 L717.6 624.4 L713.5 623.6 L706.9 623.2 L698.1 623.4 L687.8 623.9 L676.5 624.7 L665.0 625.7 L654.0 626.9 L644.3 628.1 L636.2 629.4 L630.2 630.8 L626.2 632.2 L624.4 633.7 L624.6 635.2 L626.7 636.6 L630.5 637.9 L636.0 639.0 L643.0 639.7 L651.2 640.1 L660.6 639.9 L670.6 639.2 L680.9 638.0 L690.9 636.4 L700.2 634.3 L708.0 632.0 L714.0 629.7 L717.8 627.6Z" fill="#fff" opacity="0.8"/>
<path d="M825.4 614.7 L827.0 612.8 L827.8 611.2 L827.4 610.0 L825.2 609.2 L821.1 608.8 L814.7 608.8 L806.3 609.1 L796.3 609.7 L785.3 610.4 L774.4 611.4 L764.5 612.6 L756.5 614.0 L751.0 615.7 L748.5 617.7 L749.1 619.7 L752.5 621.8 L758.3 623.8 L766.0 625.4 L774.7 626.5 L783.7 627.0 L792.3 626.9 L800.1 626.1 L806.8 624.9 L812.3 623.2 L816.7 621.2 L820.2 619.0 L823.1 616.8Z" fill="#fff" opacity="0.8"/>
<path d="M765.0 628.3 L764.1 627.0 L760.7 626.6 L755.0 627.1 L747.1 628.4 L737.5 630.2 L726.8 632.5 L715.6 635.1 L704.7 637.7 L694.8 640.3 L686.5 642.7 L680.1 644.9 L675.7 646.9 L673.6 648.6 L673.4 650.1 L675.2 651.2 L678.8 651.9 L684.0 652.2 L690.6 652.0 L698.6 651.2 L707.6 649.9 L717.2 648.0 L727.2 645.5 L736.9 642.6 L745.8 639.4 L753.5 636.1 L759.4 633.0 L763.4 630.3Z" fill="#fff" opacity="0.85"/>
</g></g>
<circle cx="693.2" cy="478.0" r="190.8" fill="url(#limbg)"/>
</g>
<g clip-path="url(#globeclip)" fill="none">
<g stroke="#ffffff" stroke-width="1" opacity="0.85">
<path d="M608.2 648.8 L610.6 649.9 L613.2 651.0 L616.0 652.0 L619.1 653.0 L622.3 654.0 L625.7 654.9 L629.4 655.7 L633.2 656.5 L637.1 657.3 L641.2 658.0 L645.5 658.7 L649.9 659.3 L654.4 659.8 L659.0 660.3 L663.7 660.7 L668.5 661.0 L673.4 661.3 L678.3 661.6 L683.2 661.7 L688.2 661.8 L693.2 661.9 L698.2 661.8 L703.2 661.7 L708.1 661.6 L713.0 661.3 L717.9 661.0 L722.7 660.7 L727.4 660.3 L732.0 659.8 L736.5 659.3 L740.9 658.7 L745.2 658.0 L749.3 657.3 L753.2 656.5 L757.0 655.7 L760.7 654.9 L764.1 654.0 L767.3 653.0 L770.4 652.0 L773.2 651.0 L775.8 649.9 L778.2 648.8"/>
<path d="M530.0 576.8 L531.6 579.0 L533.6 581.1 L536.0 583.1 L538.9 585.2 L542.2 587.2 L546.0 589.1 L550.1 591.0 L554.6 592.9 L559.5 594.7 L564.8 596.4 L570.4 598.0 L576.4 599.6 L582.6 601.1 L589.2 602.5 L596.1 603.8 L603.2 605.1 L610.6 606.2 L618.2 607.2 L626.0 608.2 L634.0 609.0 L642.1 609.7 L650.4 610.3 L658.8 610.8 L667.4 611.2 L675.9 611.5 L684.6 611.7 L693.2 611.7 L701.8 611.7 L710.5 611.5 L719.0 611.2 L727.6 610.8 L736.0 610.3 L744.3 609.7 L752.4 609.0 L760.4 608.2 L768.2 607.2 L775.8 606.2 L783.2 605.1 L790.3 603.8 L797.2 602.5 L803.8 601.1 L810.0 599.6 L816.0 598.0 L821.6 596.4 L826.9 594.7 L831.8 592.9 L836.3 591.0 L840.4 589.1 L844.2 587.2 L847.5 585.2 L850.4 583.1 L852.8 581.1 L854.8 579.0 L856.4 576.8"/>
<path d="M528.9 381.3 L528.2 383.5 L528.0 385.6 L528.2 387.8 L528.9 390.0 L530.0 392.1 L531.6 394.2 L533.6 396.3 L536.0 398.4 L538.9 400.5 L542.2 402.5 L546.0 404.4 L550.1 406.3 L554.6 408.2 L559.5 410.0 L564.8 411.7 L570.4 413.3 L576.4 414.9 L582.6 416.4 L589.2 417.8 L596.1 419.1 L603.2 420.3 L610.6 421.5 L618.2 422.5 L626.0 423.4 L634.0 424.3 L642.1 425.0 L650.4 425.6 L658.8 426.1 L667.4 426.5 L675.9 426.8 L684.6 427.0 L693.2 427.0 L701.8 427.0 L710.5 426.8 L719.0 426.5 L727.6 426.1 L736.0 425.6 L744.3 425.0 L752.4 424.3 L760.4 423.4 L768.2 422.5 L775.8 421.5 L783.2 420.3 L790.3 419.1 L797.2 417.8 L803.8 416.4 L810.0 414.9 L816.0 413.3 L821.6 411.7 L826.9 410.0 L831.8 408.2 L836.3 406.3 L840.4 404.4 L844.2 402.5 L847.5 400.5 L850.4 398.4 L852.8 396.3 L854.8 394.2 L856.4 392.1 L857.5 390.0 L858.2 387.8 L858.4 385.6 L858.2 383.5 L857.5 381.3"/>
<path d="M606.0 308.3 L604.1 309.5 L602.5 310.6 L601.1 311.8 L599.9 313.1 L599.0 314.3 L598.3 315.5 L597.9 316.8 L597.8 318.0 L597.9 319.3 L598.3 320.5 L599.0 321.8 L599.9 323.0 L601.1 324.2 L602.5 325.4 L604.1 326.6 L606.0 327.7 L608.2 328.9 L610.6 330.0 L613.2 331.0 L616.0 332.1 L619.1 333.1 L622.3 334.0 L625.7 334.9 L629.4 335.8 L633.2 336.6 L637.1 337.3 L641.2 338.1 L645.5 338.7 L649.9 339.3 L654.4 339.8 L659.0 340.3 L663.7 340.7 L668.5 341.1 L673.4 341.4 L678.3 341.6 L683.2 341.8 L688.2 341.9 L693.2 341.9 L698.2 341.9 L703.2 341.8 L708.1 341.6 L713.0 341.4 L717.9 341.1 L722.7 340.7 L727.4 340.3 L732.0 339.8 L736.5 339.3 L740.9 338.7 L745.2 338.1 L749.3 337.3 L753.2 336.6 L757.0 335.8 L760.7 334.9 L764.1 334.0 L767.3 333.1 L770.4 332.1 L773.2 331.0 L775.8 330.0 L778.2 328.9 L780.4 327.7 L782.3 326.6 L783.9 325.4 L785.3 324.2 L786.5 323.0 L787.4 321.8 L788.1 320.5 L788.5 319.3 L788.6 318.0 L788.5 316.8 L788.1 315.5 L787.4 314.3 L786.5 313.1 L785.3 311.8 L783.9 310.6 L782.3 309.5 L780.4 308.3"/>
<path d="M693.2 287.3 L693.2 287.8 L693.2 288.8 L693.2 290.4"/>
<path d="M666.9 289.0 L671.7 288.7 L676.6 288.9 L681.6 289.6 L686.5 290.8"/>
<path d="M623.4 300.5 L631.3 297.8 L639.4 295.6 L647.7 293.8 L656.0 292.6 L664.5 291.9 L673.1 291.7 L681.7 292.1"/>
<path d="M502.5 471.6 L503.1 461.9 L504.3 452.3 L505.9 442.8 L508.1 433.3 L510.7 424.0 L513.9 414.8 L517.6 405.8 L521.7 397.0 L526.3 388.4 L531.4 380.1 L536.9 372.0 L542.8 364.3 L549.2 356.8 L555.9 349.7 L563.1 342.9 L570.6 336.5 L578.4 330.5 L586.5 324.9 L594.9 319.7 L603.6 314.9 L612.6 310.6 L621.7 306.7 L631.1 303.3 L640.6 300.4 L650.3 298.0 L660.1 296.1 L669.9 294.7 L679.9 293.7"/>
<path d="M613.1 651.1 L605.6 647.3 L598.4 643.0 L591.5 638.3 L584.8 633.1 L578.4 627.5 L572.4 621.4 L566.6 615.0 L561.2 608.2 L556.2 601.1 L551.6 593.6 L547.3 585.8 L543.4 577.7 L540.0 569.3 L537.0 560.7 L534.4 551.9 L532.2 542.8 L530.5 533.6 L529.2 524.2 L528.4 514.7 L528.0 505.1 L528.1 495.4 L528.6 485.7 L529.6 475.9 L531.0 466.2 L532.9 456.5 L535.2 446.8 L537.9 437.3 L541.1 427.8 L544.7 418.5 L548.7 409.3 L553.1 400.4 L557.8 391.6 L563.0 383.1 L568.5 374.8 L574.3 366.9 L580.5 359.2 L587.0 351.8 L593.8 344.8 L600.8 338.2 L608.1 332.0 L615.6 326.1 L623.4 320.7 L631.3 315.7 L639.4 311.1 L647.7 307.0 L656.0 303.4 L664.5 300.2 L673.1 297.6 L681.7 295.4"/>
<path d="M693.2 668.6 L693.2 667.9 L693.2 666.7 L693.2 665.0 L693.2 662.7 L693.2 660.0 L693.2 656.7 L693.2 653.0 L693.2 648.8 L693.2 644.1 L693.2 638.9 L693.2 633.3 L693.2 627.3 L693.2 620.9 L693.2 614.1 L693.2 606.9 L693.2 599.4 L693.2 591.5 L693.2 583.3 L693.2 574.8 L693.2 566.1 L693.2 557.1 L693.2 547.9 L693.2 538.5 L693.2 529.0 L693.2 519.3 L693.2 509.5 L693.2 499.6 L693.2 489.6 L693.2 479.7 L693.2 469.7 L693.2 459.7 L693.2 449.8 L693.2 440.0 L693.2 430.2 L693.2 420.6 L693.2 411.2 L693.2 401.9 L693.2 392.9 L693.2 384.0 L693.2 375.5 L693.2 367.2 L693.2 359.2 L693.2 351.6 L693.2 344.3 L693.2 337.3 L693.2 330.8 L693.2 324.6 L693.2 318.9 L693.2 313.6 L693.2 308.8 L693.2 304.4 L693.2 300.5 L693.2 297.1"/>
<path d="M721.1 666.7 L725.8 665.7 L730.5 664.2 L735.0 662.2 L739.5 659.6 L743.8 656.6 L747.9 653.0 L751.9 649.0 L755.8 644.6 L759.5 639.6 L763.0 634.2 L766.3 628.4 L769.4 622.2 L772.3 615.6 L775.0 608.6 L777.4 601.3 L779.7 593.6 L781.7 585.6 L783.4 577.3 L784.9 568.7 L786.2 559.9 L787.2 550.8 L787.9 541.6 L788.4 532.2 L788.6 522.6 L788.5 512.9 L788.2 503.1 L787.7 493.3 L786.8 483.4 L785.8 473.5 L784.4 463.6 L782.8 453.7 L781.0 443.9 L778.9 434.2 L776.6 424.6 L774.1 415.2 L771.3 405.9 L768.4 396.9 L765.2 388.0 L761.8 379.4 L758.3 371.1 L754.5 363.1 L750.6 355.4 L746.5 348.0 L742.3 341.0 L738.0 334.3 L733.5 328.1 L728.9 322.2 L724.3 316.8 L719.5 311.8 L714.7 307.3 L709.8 303.3 L704.8 299.7 L699.9 296.6"/>
<path d="M773.3 651.1 L780.8 647.3 L788.0 643.0 L794.9 638.3 L801.6 633.1 L808.0 627.5 L814.0 621.4 L819.8 615.0 L825.2 608.2 L830.2 601.1 L834.8 593.6 L839.1 585.8 L843.0 577.7 L846.4 569.3 L849.4 560.7 L852.0 551.9 L854.2 542.8 L855.9 533.6 L857.2 524.2 L858.0 514.7 L858.4 505.1 L858.3 495.4 L857.8 485.7 L856.8 475.9 L855.4 466.2 L853.5 456.5 L851.2 446.8 L848.5 437.3 L845.3 427.8 L841.7 418.5 L837.7 409.3 L833.3 400.4 L828.6 391.6 L823.4 383.1 L817.9 374.8 L812.1 366.9 L805.9 359.2 L799.4 351.8 L792.6 344.8 L785.6 338.2 L778.3 332.0 L770.8 326.1 L763.0 320.7 L755.1 315.7 L747.0 311.1 L738.7 307.0 L730.4 303.4 L721.9 300.2 L713.3 297.6 L704.7 295.4"/>
<path d="M883.9 471.6 L883.3 461.9 L882.1 452.3 L880.5 442.8 L878.3 433.3 L875.7 424.0 L872.5 414.8 L868.8 405.8 L864.7 397.0 L860.1 388.4 L855.0 380.1 L849.5 372.0 L843.6 364.3 L837.2 356.8 L830.5 349.7 L823.3 342.9 L815.8 336.5 L808.0 330.5 L799.9 324.9 L791.5 319.7 L782.8 314.9 L773.8 310.6 L764.7 306.7 L755.3 303.3 L745.8 300.4 L736.1 298.0 L726.3 296.1 L716.5 294.7 L706.5 293.7"/>
<path d="M763.0 300.5 L755.1 297.8 L747.0 295.6 L738.7 293.8 L730.4 292.6 L721.9 291.9 L713.3 291.7 L704.7 292.1"/>
</g>
<g stroke="#ffff00" stroke-width="1.05">
<path d="M502.4 478.0 L502.7 480.5 L503.4 483.0 L504.7 485.5 L506.6 487.9 L508.9 490.4 L511.7 492.8 L515.1 495.1 L518.9 497.4 L523.2 499.7 L528.0 501.9 L533.2 504.0 L538.8 506.1 L544.9 508.1 L551.4 510.0 L558.3 511.8 L565.5 513.5 L573.1 515.1 L581.1 516.6 L589.3 518.1 L597.8 519.4 L606.6 520.6 L615.6 521.6 L624.8 522.6 L634.2 523.4 L643.8 524.1 L653.5 524.7 L663.4 525.2 L673.3 525.5 L683.2 525.7 L693.2 525.8 L703.2 525.7 L713.1 525.5 L723.0 525.2 L732.9 524.7 L742.6 524.1 L752.2 523.4 L761.6 522.6 L770.8 521.6 L779.8 520.6 L788.6 519.4 L797.1 518.1 L805.3 516.6 L813.3 515.1 L820.9 513.5 L828.1 511.8 L835.0 510.0 L841.5 508.1 L847.6 506.1 L853.2 504.0 L858.4 501.9 L863.2 499.7 L867.5 497.4 L871.3 495.1 L874.7 492.8 L877.5 490.4 L879.8 487.9 L881.7 485.5 L883.0 483.0 L883.7 480.5 L884.0 478.0"/>
<path d="M663.7 666.5 L659.0 665.3 L654.4 663.6 L649.9 661.4 L645.5 658.7 L641.2 655.5 L637.1 651.8 L633.2 647.6 L629.4 643.0 L625.7 637.9 L622.3 632.3 L619.1 626.4 L616.0 620.0 L613.2 613.3 L610.6 606.2 L608.2 598.7 L606.0 590.9 L604.1 582.8 L602.5 574.4 L601.1 565.8 L599.9 556.9 L599.0 547.8 L598.3 538.5 L597.9 529.0 L597.8 519.4 L597.9 509.6 L598.3 499.8 L599.0 490.0 L599.9 480.1 L601.1 470.2 L602.5 460.3 L604.1 450.4 L606.0 440.7 L608.2 431.0 L610.6 421.5 L613.2 412.1 L616.0 402.9 L619.1 393.9 L622.3 385.1 L625.7 376.6 L629.4 368.4 L633.2 360.5 L637.1 352.9 L641.2 345.6 L645.5 338.7 L649.9 332.2 L654.4 326.1 L659.0 320.4 L663.7 315.1 L668.5 310.3 L673.4 305.9 L678.3 302.0 L683.2 298.6 L688.2 295.7 L693.2 293.3"/>
<path d="M717.9 288.9 L713.0 288.7 L708.1 289.1 L703.2 290.0 L698.2 291.4 L693.2 293.3"/>
</g>
<g stroke="#ffff00" stroke-width="1.15" stroke-dasharray="1.2 3.1">
<path d="M519.1 399.9 L518.4 402.2 L518.1 404.5 L518.4 406.8 L519.1 409.1 L520.3 411.4 L522.0 413.6 L524.1 415.9 L526.7 418.1 L529.8 420.2 L533.3 422.3 L537.2 424.4 L541.6 426.4 L546.4 428.4 L551.6 430.3 L557.2 432.1 L563.1 433.8 L569.4 435.5 L576.1 437.1 L583.0 438.6 L590.3 440.0 L597.9 441.3 L605.7 442.5 L613.7 443.6 L622.0 444.6 L630.5 445.4 L639.1 446.2 L647.9 446.9 L656.8 447.4 L665.8 447.8 L674.9 448.1 L684.0 448.3 L693.2 448.3 L702.4 448.3 L711.5 448.1 L720.6 447.8 L729.6 447.4 L738.5 446.9 L747.3 446.2 L755.9 445.4 L764.4 444.6 L772.7 443.6 L780.7 442.5 L788.5 441.3 L796.1 440.0 L803.4 438.6 L810.3 437.1 L817.0 435.5 L823.3 433.8 L829.2 432.1 L834.8 430.3 L840.0 428.4 L844.8 426.4 L849.2 424.4 L853.1 422.3 L856.6 420.2 L859.7 418.1 L862.3 415.9 L864.4 413.6 L866.1 411.4 L867.3 409.1 L868.0 406.8 L868.3 404.5 L868.0 402.2 L867.3 399.9"/>
<path d="M520.3 558.3 L522.0 560.6 L524.1 562.8 L526.7 565.0 L529.8 567.2 L533.3 569.3 L537.2 571.4 L541.6 573.4 L546.4 575.4 L551.6 577.2 L557.2 579.1 L563.1 580.8 L569.4 582.5 L576.1 584.1 L583.0 585.5 L590.3 586.9 L597.9 588.2 L605.7 589.4 L613.7 590.5 L622.0 591.5 L630.5 592.4 L639.1 593.2 L647.9 593.8 L656.8 594.4 L665.8 594.8 L674.9 595.1 L684.0 595.3 L693.2 595.3 L702.4 595.3 L711.5 595.1 L720.6 594.8 L729.6 594.4 L738.5 593.8 L747.3 593.2 L755.9 592.4 L764.4 591.5 L772.7 590.5 L780.7 589.4 L788.5 588.2 L796.1 586.9 L803.4 585.5 L810.3 584.1 L817.0 582.5 L823.3 580.8 L829.2 579.1 L834.8 577.2 L840.0 575.4 L844.8 573.4 L849.2 571.4 L853.1 569.3 L856.6 567.2 L859.7 565.0 L862.3 562.8 L864.4 560.6 L866.1 558.3"/>
<path d="M631.8 297.4 L629.5 298.2 L627.5 299.0 L625.6 299.9 L623.9 300.8 L622.3 301.7 L621.0 302.6 L619.9 303.6 L619.0 304.6 L618.2 305.5 L617.7 306.5 L617.4 307.5 L617.3 308.5 L617.4 309.5 L617.7 310.5 L618.2 311.5 L619.0 312.5 L619.9 313.4 L621.0 314.4 L622.3 315.3 L623.9 316.3 L625.6 317.1 L627.5 318.0 L629.5 318.9 L631.8 319.7 L634.2 320.5 L636.8 321.2 L639.5 322.0 L642.4 322.6 L645.4 323.3 L648.6 323.9 L651.9 324.5 L655.3 325.0 L658.7 325.5 L662.3 325.9 L666.0 326.3 L669.7 326.6 L673.6 326.9 L677.4 327.1 L681.3 327.3 L685.3 327.4 L689.2 327.5 L693.2 327.5 L697.2 327.5 L701.1 327.4 L705.1 327.3 L709.0 327.1 L712.8 326.9 L716.7 326.6 L720.4 326.3 L724.1 325.9 L727.7 325.5 L731.1 325.0 L734.5 324.5 L737.8 323.9 L741.0 323.3 L744.0 322.6 L746.9 322.0 L749.6 321.2 L752.2 320.5 L754.6 319.7 L756.9 318.9 L758.9 318.0 L760.8 317.1 L762.5 316.3 L764.1 315.3 L765.4 314.4 L766.5 313.4 L767.4 312.5 L768.2 311.5 L768.7 310.5 L769.0 309.5 L769.1 308.5 L769.0 307.5 L768.7 306.5 L768.2 305.5 L767.4 304.6 L766.5 303.6 L765.4 302.6 L764.1 301.7 L762.5 300.8 L760.8 299.9 L758.9 299.0 L756.9 298.2 L754.6 297.4"/>
<path d="M634.2 659.4 L636.8 660.2 L639.5 660.9 L642.4 661.6 L645.4 662.2 L648.6 662.9 L651.9 663.4 L655.3 663.9 L658.7 664.4 L662.3 664.8 L666.0 665.2 L669.7 665.6 L673.6 665.8 L677.4 666.1 L681.3 666.2 L685.3 666.4 L689.2 666.5 L693.2 666.5 L697.2 666.5 L701.1 666.4 L705.1 666.2 L709.0 666.1 L712.8 665.8 L716.7 665.6 L720.4 665.2 L724.1 664.8 L727.7 664.4 L731.1 663.9 L734.5 663.4 L737.8 662.9 L741.0 662.2 L744.0 661.6 L746.9 660.9 L749.6 660.2 L752.2 659.4"/>
</g>
</g>
<text x="537.0" y="387.7" font-size="11.6" fill="#ffffff" textLength="70.6" lengthAdjust="spacing" font-weight="bold" >30° 00' 00,0"P</text>
<text x="615.5" y="315.6" font-size="11.6" fill="#ffffff" textLength="70.5" lengthAdjust="spacing" font-weight="bold" opacity="0.75" >60° 00' 00,0"P</text>
<text x="509.6" y="478.9" font-size="11.6" fill="#ffffff" textLength="69.9" lengthAdjust="spacing" font-weight="bold" >60° 00' 00,0"L</text>
<text x="537.0" y="585.6" font-size="11.6" fill="#ffffff" textLength="71.0" lengthAdjust="spacing" font-weight="bold" >30° 00' 00,0"E</text>
<text x="889.4" y="494.7" font-size="11.6" fill="#ffffff" textLength="72.1" lengthAdjust="spacing" font-weight="bold" >120° 00' 00,0"I</text>
<text x="783.3" y="658.8" font-size="11.6" fill="#ffffff" textLength="66.2" lengthAdjust="spacing" font-weight="bold" >90° 00' 00,0"I</text>
<text x="749.7" y="668.0" font-size="11.6" fill="#ffffff" textLength="64.8" lengthAdjust="spacing" font-weight="bold" >60° 00' 00,0"I</text>
<text x="700.5" y="670.0" font-size="11.6" fill="#ffffff" textLength="64.5" lengthAdjust="spacing" font-weight="bold" >30° 00' 00,0"I</text>
<text x="616.5" y="662.5" font-size="11.6" fill="#ffffff" textLength="69.5" lengthAdjust="spacing" font-weight="bold" >60° 00' 00,0"E</text>
<text x="624.0" y="662.5" font-size="11.6" fill="#ffffff" textLength="66.0" lengthAdjust="spacing" font-weight="bold" >0° 00' 00,0"E</text>
<text x="712.0" y="297.6" font-size="11.6" fill="#ffff00" textLength="80.0" lengthAdjust="spacing" font-weight="bold" >180° meridiaani</text>
<text x="697.0" y="335.9" font-size="11.6" fill="#ffff00" textLength="101.4" lengthAdjust="spacing" font-weight="bold" >Pohjoinen napapiiri</text>
<text x="710.3" y="455.7" font-size="11.6" fill="#ffff00" textLength="95.2" lengthAdjust="spacing" font-weight="bold" >Kravun kääntöpiiri</text>
<text x="602.9" y="485.8" font-size="11.6" fill="#ffff00" textLength="81.1" lengthAdjust="spacing" font-weight="bold" >Nollameridiaani</text>
<text x="703.0" y="534.0" font-size="11.6" fill="#ffff00" textLength="72.0" lengthAdjust="spacing" font-weight="bold" >Päiväntasaaja</text>
<text x="710.3" y="604.0" font-size="11.6" fill="#ffff00" textLength="95.2" lengthAdjust="spacing" font-weight="bold" >Kauriin kääntöpiiri</text>
<text x="698.6" y="676.3" font-size="11.6" fill="#ffff00" textLength="96.4" lengthAdjust="spacing" font-weight="bold" >Eteläinen napapiiri</text>
<text x="632.4" y="365.1" font-size="18" fill="#c40008" textLength="10.2" lengthAdjust="spacingAndGlyphs" font-weight="bold" stroke="#ffffff" stroke-width="1.8" paint-order="stroke" stroke-linejoin="round" >E</text>
<text x="646.4" y="365.1" font-size="18" fill="#c40008" textLength="55.6" lengthAdjust="spacingAndGlyphs" font-weight="bold" stroke="#ffffff" stroke-width="1.8" paint-order="stroke" stroke-linejoin="round" >UROPE</text>
<text x="787.6" y="375.7" font-size="18" fill="#c40008" textLength="12.6" lengthAdjust="spacingAndGlyphs" font-weight="bold" stroke="#ffffff" stroke-width="1.8" paint-order="stroke" stroke-linejoin="round" >A</text>
<text x="803.4" y="375.7" font-size="18" fill="#c40008" textLength="28.8" lengthAdjust="spacingAndGlyphs" font-weight="bold" stroke="#ffffff" stroke-width="1.8" paint-order="stroke" stroke-linejoin="round" >SIA</text>
<text x="648.3" y="514.5" font-size="18" fill="#c40008" textLength="11.7" lengthAdjust="spacingAndGlyphs" font-weight="bold" stroke="#ffffff" stroke-width="1.8" paint-order="stroke" stroke-linejoin="round" >A</text>
<text x="663.4" y="514.5" font-size="18" fill="#c40008" textLength="51.6" lengthAdjust="spacingAndGlyphs" font-weight="bold" stroke="#ffffff" stroke-width="1.8" paint-order="stroke" stroke-linejoin="round" >FRICA</text>
<text x="762.8" y="331.8" font-size="13.5" fill="#444444" textLength="41.2" lengthAdjust="spacing" font-weight="bold" stroke="#ffffff" stroke-width="2.4" paint-order="stroke" stroke-linejoin="round" >Russia</text>
<text x="703.0" y="303.6" font-size="12" fill="#ffffff" textLength="56.4" lengthAdjust="spacing" font-weight="bold" stroke="#000000" stroke-width="2.4" paint-order="stroke" stroke-linejoin="round" >North Pole</text>
<text x="487.7" y="519.8" font-size="13" fill="#ffffff" textLength="36.9" lengthAdjust="spacing" font-weight="bold" stroke="#222222" stroke-width="2.4" paint-order="stroke" stroke-linejoin="round" >Brazil</text>
<circle cx="693.7" cy="292" r="2.6" fill="#f0143c"/>
<g stroke="#000" stroke-width="3.4"><path d="M684 478.5 H690 M698 478.5 H704 M694 468 V474 M694 483 V489"/></g>
<g stroke="#fff" stroke-width="1.4"><path d="M685 478.5 H689.5 M698.5 478.5 H703 M694 469 V473.5 M694 483.5 V488"/></g>
<rect x="306" y="113" width="174" height="94" fill="#9c9c9c" opacity="0.97"/>
<path d="M389.7 142.4 L391.6 142.7 L393.9 141.9 L397.1 141.7 L397.6 143.5 L399.4 144.0 L401.7 144.7 L401.7 143.8 L403.1 143.9 L404.0 144.4 L405.9 144.7 L407.4 144.6 L408.3 144.5 L408.6 145.4 L408.3 146.2 L407.5 145.2 L408.2 146.6 L408.9 148.0 L409.6 149.5 L409.7 150.5 L410.5 152.1 L411.5 153.1 L412.4 153.5 L412.3 154.0 L413.0 154.5 L414.2 154.1 L416.1 153.8 L415.9 154.7 L415.1 156.6 L414.4 157.8 L412.8 159.0 L411.9 160.0 L411.2 160.9 L410.6 162.1 L410.7 163.3 L411.2 164.8 L411.2 166.7 L410.0 167.9 L408.6 169.1 L408.9 171.0 L407.7 171.8 L407.6 173.1 L406.6 174.3 L405.2 175.5 L404.0 175.7 L401.7 176.1 L400.9 175.7 L400.8 174.8 L400.1 173.1 L399.4 171.9 L399.2 170.0 L398.0 168.1 L397.9 166.7 L398.7 165.2 L398.5 163.8 L398.1 162.4 L397.6 161.4 L396.8 160.0 L396.9 158.5 L397.0 157.7 L396.4 157.3 L395.3 157.4 L394.6 156.5 L393.2 156.6 L391.6 157.2 L390.4 157.0 L389.0 157.4 L388.1 156.6 L387.2 156.2 L386.4 155.2 L385.6 154.2 L384.8 153.5 L384.4 152.5 L384.9 151.6 L385.0 150.2 L384.7 149.5 L385.1 148.3 L385.8 147.1 L386.5 146.2 L387.4 145.7 L388.0 145.2 L388.0 144.4 L388.6 143.6 L389.4 143.2Z M388.4 141.8 L388.1 141.0 L388.4 139.7 L388.3 138.9 L388.8 138.6 L390.4 138.7 L391.7 138.8 L391.9 138.2 L391.9 137.5 L391.3 136.9 L390.3 136.4 L391.1 136.2 L391.8 136.2 L391.9 135.8 L392.6 135.8 L393.2 135.2 L394.1 134.9 L394.6 134.4 L394.8 134.0 L395.7 133.9 L396.5 133.7 L396.3 133.0 L396.3 132.3 L397.3 131.9 L397.2 132.7 L397.1 133.3 L397.6 133.7 L398.3 133.5 L399.0 133.7 L400.1 133.5 L401.0 133.3 L401.6 133.5 L402.2 133.1 L402.2 132.3 L402.9 131.9 L403.7 132.2 L403.7 131.6 L403.3 131.2 L404.5 131.0 L405.4 131.0 L406.4 130.9 L405.6 130.5 L404.5 130.6 L403.1 130.9 L402.4 130.5 L402.3 129.6 L403.8 128.5 L404.2 128.2 L403.3 128.1 L402.6 128.2 L402.3 128.8 L400.8 129.5 L400.4 130.4 L401.2 130.8 L400.8 131.3 L400.1 132.0 L399.9 132.6 L399.1 133.0 L398.4 133.0 L398.4 132.6 L397.7 131.6 L397.3 131.2 L396.3 131.7 L395.3 131.6 L394.8 130.8 L394.8 129.9 L395.7 129.4 L397.1 128.9 L398.3 128.0 L399.2 127.0 L400.3 126.4 L401.7 126.1 L403.3 125.7 L404.5 125.6 L405.6 125.6 L406.8 125.9 L406.3 126.2 L407.7 126.3 L409.1 126.5 L411.2 127.2 L411.4 127.7 L410.0 127.9 L408.4 127.7 L407.7 127.6 L408.5 128.4 L409.3 128.9 L410.0 128.7 L410.9 128.6 L410.9 128.1 L411.9 127.8 L412.8 127.9 L412.9 127.0 L413.7 126.9 L413.9 127.5 L414.6 127.2 L416.9 126.7 L418.8 126.7 L420.4 126.5 L420.4 126.2 L422.0 126.4 L423.4 126.6 L424.1 126.9 L424.3 126.3 L423.4 126.1 L423.4 125.3 L424.3 124.7 L425.9 124.7 L426.1 125.6 L425.7 126.5 L426.4 127.2 L426.9 126.8 L426.6 125.6 L427.1 124.9 L428.5 125.1 L429.6 124.4 L432.2 124.2 L432.6 123.7 L434.9 123.3 L437.7 123.1 L440.6 122.4 L441.4 122.7 L444.1 123.0 L444.8 123.4 L442.8 124.1 L444.6 124.3 L446.9 124.4 L449.7 124.3 L451.1 124.9 L452.2 125.6 L453.8 125.3 L456.6 125.3 L457.1 124.9 L459.8 125.0 L461.7 125.3 L463.1 125.6 L465.8 125.7 L466.3 126.2 L468.6 126.3 L470.9 126.1 L471.4 126.5 L474.1 126.3 L475.5 126.5 L475.5 128.4 L474.1 128.6 L475.0 129.4 L473.2 129.9 L470.9 130.8 L468.6 130.9 L467.7 131.8 L467.4 132.7 L467.0 133.3 L466.3 134.2 L464.9 135.1 L464.4 134.2 L464.2 132.5 L464.9 131.8 L466.3 130.6 L467.9 129.7 L466.3 130.0 L464.4 130.6 L463.7 131.1 L462.1 131.2 L459.8 131.2 L458.2 131.3 L456.1 132.5 L455.0 133.4 L456.4 133.7 L457.5 134.2 L457.2 135.4 L456.4 136.8 L455.0 138.2 L453.8 139.1 L452.8 139.2 L452.2 139.9 L451.3 140.5 L452.1 141.6 L452.2 142.5 L451.3 142.9 L450.8 143.0 L450.8 141.9 L450.1 141.4 L450.2 140.6 L449.8 140.4 L448.5 140.9 L448.7 140.0 L447.4 140.8 L446.8 141.1 L447.4 141.7 L449.0 141.7 L448.1 142.3 L447.5 142.8 L448.2 143.8 L448.7 144.7 L448.8 145.2 L448.5 146.0 L447.7 147.2 L446.9 147.9 L446.2 148.5 L445.1 148.8 L443.7 149.2 L443.1 149.2 L442.4 149.2 L441.7 149.7 L441.3 150.4 L441.8 151.4 L442.7 152.2 L442.9 153.5 L442.3 154.2 L441.6 154.6 L440.9 155.3 L440.9 154.7 L440.2 154.4 L439.8 153.7 L439.1 153.4 L438.6 153.1 L438.4 154.2 L438.3 155.1 L438.8 156.2 L439.4 156.4 L440.2 157.5 L440.5 158.8 L440.2 158.9 L439.3 158.2 L438.7 156.9 L437.9 155.7 L437.9 154.5 L438.0 153.3 L437.6 152.1 L437.3 151.5 L436.5 151.9 L436.0 151.8 L436.1 150.9 L435.6 150.0 L435.0 149.5 L434.8 148.8 L434.2 148.9 L433.5 149.1 L432.6 149.4 L432.3 149.9 L431.7 150.2 L430.4 151.6 L429.5 152.1 L429.5 153.1 L429.3 154.0 L429.1 154.6 L428.9 155.1 L428.6 155.2 L428.2 155.6 L427.8 155.2 L427.5 154.0 L427.0 153.3 L426.7 152.1 L426.3 151.1 L426.1 150.2 L426.0 149.5 L425.8 149.4 L425.1 149.6 L424.4 148.9 L424.1 148.3 L423.5 147.8 L423.2 147.4 L422.0 147.4 L420.9 147.5 L419.6 147.3 L418.9 147.1 L418.7 146.6 L417.6 146.7 L416.8 146.4 L416.0 145.9 L415.6 145.1 L415.0 145.0 L414.6 145.3 L414.9 145.9 L415.6 146.8 L415.6 147.3 L416.0 147.6 L416.3 147.9 L416.9 147.9 L417.8 147.7 L418.4 147.0 L418.6 147.8 L419.5 148.2 L420.1 148.8 L419.5 149.7 L419.1 150.4 L418.6 150.9 L418.0 151.1 L416.6 151.7 L415.1 152.6 L413.3 153.3 L412.6 153.4 L412.2 152.5 L412.2 151.6 L411.4 150.4 L410.6 149.3 L410.3 148.2 L409.7 147.3 L408.7 146.1 L408.6 145.4 L408.3 144.5 L408.6 143.8 L408.9 143.1 L409.1 142.4 L409.2 142.0 L408.5 141.9 L407.5 142.3 L406.6 141.9 L406.0 142.1 L405.2 141.9 L404.7 141.1 L404.6 140.6 L405.2 140.2 L405.9 139.9 L406.9 139.8 L407.9 139.4 L408.7 139.4 L409.3 139.8 L410.3 139.9 L411.2 139.9 L411.7 139.6 L411.5 139.1 L410.9 138.7 L410.1 138.3 L409.7 137.9 L410.1 137.3 L410.6 136.9 L409.8 137.0 L409.3 137.8 L408.9 138.0 L408.0 138.2 L407.5 137.8 L408.0 137.5 L407.3 137.3 L406.7 137.3 L406.2 137.9 L405.8 138.2 L405.5 138.7 L405.3 139.2 L405.5 139.6 L405.9 139.8 L405.2 140.0 L404.6 140.1 L403.6 140.0 L403.3 140.3 L403.0 140.2 L403.1 140.8 L403.6 141.2 L403.2 141.6 L403.1 142.1 L402.8 142.0 L402.5 141.8 L402.3 141.2 L401.8 140.6 L401.4 140.2 L401.5 139.5 L401.0 139.2 L399.9 138.7 L399.4 138.1 L398.9 137.7 L398.2 137.9 L398.2 138.4 L398.8 138.7 L399.2 139.3 L399.9 139.5 L401.0 140.2 L400.9 140.4 L400.3 140.2 L400.2 140.6 L400.4 140.9 L399.9 141.3 L399.7 141.3 L399.9 140.9 L399.6 140.3 L399.0 140.0 L398.3 139.7 L397.6 139.2 L397.2 138.7 L396.6 138.3 L396.0 138.6 L395.3 138.9 L394.6 138.8 L393.9 139.0 L394.0 139.5 L392.9 139.9 L392.4 140.6 L392.6 141.0 L392.2 141.5 L391.5 141.9 L390.4 142.0 L389.9 142.3 L389.6 142.1 L389.1 141.7Z M390.0 135.6 L390.9 135.5 L392.0 135.3 L393.1 135.0 L393.3 134.3 L392.6 134.2 L392.4 133.5 L391.7 132.9 L391.5 132.0 L390.9 131.9 L391.1 131.5 L390.2 131.5 L389.6 132.0 L390.0 132.7 L390.3 133.2 L391.0 133.3 L391.1 133.9 L390.4 134.0 L390.6 134.4 L390.1 134.8 L391.0 134.9 L390.4 135.1Z M389.7 134.6 L389.7 133.7 L390.0 133.3 L389.0 133.1 L387.9 133.6 L388.1 134.2 L387.8 134.7 L388.1 134.9Z M382.4 128.9 L381.4 128.2 L382.4 127.8 L384.2 127.8 L385.6 127.9 L386.3 128.4 L385.1 128.9 L383.7 129.2Z M371.8 130.8 L372.7 130.8 L374.1 128.4 L377.7 127.0 L382.4 126.1 L383.3 124.1 L384.2 122.7 L384.7 121.3 L381.0 120.3 L376.4 119.6 L369.4 120.1 L363.9 120.6 L361.1 121.5 L358.8 122.2 L361.1 123.2 L364.8 123.3 L367.1 125.1 L367.6 126.5 L368.5 128.0 L369.4 129.4 L370.4 130.4Z M415.2 165.2 L415.7 166.9 L415.3 167.9 L415.0 169.1 L414.4 171.0 L413.5 171.7 L412.8 171.2 L412.5 170.0 L412.9 168.8 L412.9 167.4 L413.9 167.0 L414.6 165.9Z M429.4 154.8 L430.0 155.4 L430.3 156.2 L429.9 156.6 L429.4 156.5 L429.3 155.7Z M356.8 155.4 L357.9 154.2 L359.3 153.8 L359.8 154.2 L361.1 154.5 L363.0 154.5 L363.9 154.4 L364.8 155.4 L366.2 156.6 L367.6 156.7 L368.8 157.3 L369.4 158.8 L369.4 159.5 L370.4 160.0 L372.0 160.7 L373.4 160.9 L374.7 161.3 L376.2 162.0 L376.5 163.3 L375.7 164.5 L374.7 165.7 L374.5 167.4 L374.1 169.1 L373.4 170.2 L372.0 170.6 L370.4 171.7 L370.1 172.9 L369.0 174.3 L367.8 175.7 L366.7 176.2 L365.6 175.7 L366.2 176.9 L365.8 177.9 L363.9 178.1 L363.8 179.1 L362.5 179.1 L363.2 179.9 L362.3 181.0 L361.4 181.7 L362.2 182.4 L361.1 183.6 L360.7 184.5 L361.0 185.7 L359.3 185.3 L358.1 184.3 L357.7 182.4 L358.4 180.5 L358.8 178.6 L358.6 177.2 L359.5 175.3 L359.5 173.4 L360.0 171.4 L360.1 169.1 L360.0 168.2 L359.3 167.6 L357.7 166.4 L357.0 165.2 L356.1 163.3 L355.1 162.4 L355.1 161.4 L355.6 160.7 L355.2 160.0 L355.6 159.1 L356.2 158.8 L356.9 157.6 L356.8 156.2Z M356.5 155.2 L355.6 155.1 L354.5 155.2 L354.0 154.5 L354.0 153.5 L354.1 152.3 L352.8 151.9 L351.7 152.0 L351.9 150.9 L352.4 149.3 L350.9 149.5 L350.5 150.4 L348.9 150.8 L348.2 150.2 L347.4 148.8 L347.6 147.1 L348.0 145.9 L349.2 145.3 L351.0 145.5 L351.5 145.1 L353.1 145.2 L353.8 145.2 L354.4 146.1 L354.8 147.1 L355.4 147.5 L355.6 146.6 L355.0 144.9 L355.2 144.1 L356.3 143.3 L357.5 142.8 L357.5 141.8 L358.3 140.6 L358.4 140.1 L359.8 139.7 L360.2 139.4 L360.0 138.7 L361.6 138.1 L362.5 138.7 L364.4 137.8 L362.8 137.3 L362.5 136.3 L361.1 136.3 L361.8 135.5 L364.8 135.5 L366.7 134.7 L366.7 133.9 L365.5 133.2 L364.1 132.3 L362.8 130.7 L361.1 131.3 L360.2 130.4 L358.8 129.8 L356.5 129.6 L356.8 130.8 L356.3 131.5 L357.0 132.3 L355.8 133.5 L355.8 134.9 L354.7 134.2 L354.5 133.1 L351.9 132.5 L349.8 132.3 L348.9 131.3 L348.8 130.6 L350.1 129.6 L351.9 128.9 L352.8 127.9 L354.7 127.2 L354.9 126.5 L353.3 126.2 L351.9 126.8 L350.5 126.3 L348.7 125.3 L348.2 126.3 L347.1 126.8 L345.0 127.0 L342.7 126.9 L339.9 126.9 L338.6 126.5 L335.8 126.3 L333.5 126.0 L331.2 126.4 L329.3 126.5 L327.5 126.2 L324.3 125.9 L320.3 125.4 L318.7 125.8 L317.1 126.3 L315.7 126.9 L317.3 127.5 L318.0 127.8 L316.0 128.1 L315.0 128.2 L316.6 128.7 L318.3 128.7 L318.3 129.2 L316.6 129.4 L316.0 130.1 L316.6 130.8 L317.8 131.2 L317.8 131.6 L319.6 131.5 L319.9 132.0 L318.7 132.7 L316.9 133.4 L318.7 133.1 L320.6 132.3 L321.5 131.4 L322.4 131.1 L322.6 130.5 L324.3 130.6 L325.6 130.7 L327.5 130.8 L328.9 131.3 L330.2 131.8 L331.2 132.7 L332.1 133.5 L332.6 133.9 L333.5 134.7 L333.7 135.4 L335.0 135.8 L335.8 136.3 L335.1 136.5 L335.3 137.5 L335.2 139.0 L335.2 140.2 L336.0 141.5 L336.7 142.8 L337.9 143.3 L338.5 144.0 L339.5 144.9 L339.8 146.1 L340.9 147.1 L341.8 148.5 L342.0 148.4 L341.3 147.3 L340.4 145.6 L339.7 144.4 L340.4 144.6 L341.3 146.1 L342.0 147.1 L342.9 148.0 L343.8 148.8 L343.9 149.9 L344.5 150.4 L345.7 151.1 L347.3 151.9 L348.7 151.9 L349.4 152.1 L350.1 152.6 L351.2 153.1 L352.2 153.3 L352.8 154.0 L353.0 154.7 L353.8 155.2 L354.5 155.7 L355.4 156.0 L355.8 155.3 L356.5 155.9 L356.8 155.4Z M445.1 170.0 L444.8 171.7 L445.5 173.8 L445.5 175.7 L446.9 176.2 L448.8 175.7 L450.6 174.9 L452.9 174.6 L454.3 175.2 L455.0 176.1 L455.9 175.3 L456.1 176.5 L457.1 177.7 L458.7 178.0 L460.1 178.1 L461.4 177.5 L462.0 176.2 L462.8 174.8 L463.3 173.1 L463.1 171.7 L461.9 170.2 L461.0 169.1 L459.9 168.5 L459.6 166.7 L458.7 166.2 L458.2 164.7 L457.7 165.7 L457.5 167.4 L456.8 167.9 L455.7 167.0 L455.0 166.7 L455.6 165.3 L453.8 165.0 L452.9 165.3 L452.2 166.6 L451.1 166.2 L450.1 166.9 L448.8 167.9 L448.3 168.8 L446.4 169.4Z M452.9 159.9 L454.3 159.9 L454.8 161.1 L456.1 160.4 L457.5 160.7 L459.4 161.7 L460.5 162.4 L460.1 163.1 L461.0 164.0 L461.9 164.5 L460.3 164.3 L459.1 163.2 L458.0 163.9 L456.6 163.3 L456.1 162.4 L454.8 161.7 L453.7 161.3Z M442.8 158.8 L443.9 158.3 L444.8 157.6 L446.0 156.3 L446.7 156.4 L447.4 157.1 L446.8 158.1 L447.3 159.0 L446.7 159.7 L446.0 161.3 L445.3 161.4 L443.9 160.9 L443.2 160.2Z M436.4 156.9 L437.7 157.6 L438.8 158.5 L440.2 160.0 L441.4 161.2 L441.3 162.3 L440.5 162.1 L439.3 160.9 L438.1 159.5 L437.2 158.3Z M441.1 162.6 L442.5 162.6 L443.7 162.7 L445.3 163.1 L445.2 163.7 L443.2 163.4 L441.6 163.0Z M447.6 162.1 L448.1 160.9 L447.8 159.3 L449.2 159.0 L450.1 158.8 L449.7 159.4 L448.3 160.0 L449.3 160.0 L448.8 160.9 L449.2 161.9 L448.5 161.7 L448.1 162.1Z M448.1 150.7 L448.8 150.8 L448.8 151.9 L449.7 153.3 L450.4 154.2 L450.8 155.9 L450.4 156.6 L449.4 155.9 L448.8 154.7 L447.8 153.1 L448.0 151.9Z M452.4 144.4 L453.3 143.5 L454.8 143.3 L455.7 142.9 L456.6 142.8 L457.4 142.3 L457.9 140.9 L457.7 139.8 L458.7 139.4 L459.6 138.8 L458.9 138.5 L458.0 137.8 L457.7 138.8 L457.1 139.4 L457.1 140.4 L456.4 141.6 L455.4 141.9 L455.0 142.5 L453.6 142.6 L452.9 143.2 L452.4 143.7Z M472.3 176.0 L473.4 176.9 L474.8 177.5 L474.1 178.4 L473.3 179.3 L473.1 178.4 L472.6 178.3 L473.1 177.4Z M472.1 178.9 L472.9 179.3 L472.2 180.4 L471.3 181.5 L470.2 181.8 L469.3 181.4 L470.2 180.5 L471.5 179.6Z M309.5 202.5 L309.5 196.8 L323.3 196.3 L337.2 194.9 L346.4 194.4 L357.9 194.4 L362.1 191.5 L363.9 190.3 L365.8 189.8 L364.8 192.0 L364.4 195.3 L374.1 196.8 L383.3 194.4 L392.5 192.9 L406.3 192.5 L420.2 191.8 L434.0 191.3 L447.8 191.3 L461.7 192.2 L470.9 193.9 L475.5 196.8 L475.5 202.5Z M416.5 125.6 L417.9 124.4 L419.2 123.4 L423.9 122.7 L422.9 123.4 L419.2 124.6 L418.8 125.7Z M397.6 121.8 L399.9 121.3 L402.6 121.0 L404.9 121.3 L402.6 122.2 L400.3 122.9 L398.5 122.2Z M458.0 137.5 L458.7 136.1 L458.4 134.7 L458.2 133.6 L457.9 134.7 L458.0 136.1Z M353.3 149.0 L354.7 148.4 L356.5 148.8 L357.9 149.6 L358.3 149.9 L356.8 150.0 L356.5 149.5 L354.7 148.9Z M358.2 150.7 L359.1 150.0 L360.2 150.0 L361.0 150.6 L359.8 151.0 L358.2 150.7Z M355.6 124.4 L357.5 124.6 L360.2 125.6 L363.0 127.5 L363.9 128.0 L362.5 129.4 L361.1 129.6 L359.3 128.9 L356.5 128.7 L358.4 127.7 L358.8 126.8 L356.5 126.1 L353.3 125.8 L351.5 125.1Z M351.0 123.0 L355.6 123.0 L356.5 122.0 L359.3 121.5 L363.4 120.3 L360.2 119.8 L353.3 120.1 L350.1 120.8 L351.9 121.8Z M338.1 125.1 L341.8 124.6 L344.1 124.6 L345.5 125.8 L342.7 126.5 L339.0 126.3Z M447.9 148.5 L448.3 147.5 L448.7 147.6 L448.5 148.8 L448.2 149.0Z" fill="#000"/>
<path d="M415.1 137.3 L416.2 137.1 L416.9 137.3 L416.9 138.0 L416.0 138.2 L415.8 139.0 L416.7 139.5 L417.2 140.2 L416.9 140.9 L417.4 141.6 L416.5 141.9 L415.6 141.6 L415.1 141.1 L415.3 140.2 L414.6 139.4 L414.2 138.7 L414.2 138.0Z" fill="#9c9c9c"/>
<rect x="309.500" y="116.800" width="166" height="80" fill="none" stroke="#fff" stroke-width="1.2"/>
<circle cx="406.500" cy="152.800" r="2.700" fill="#fff"/>
<circle cx="1051.050" cy="159.800" r="31" fill="#9b9b9b" opacity="0.97"/>
<path d="M1051.4 134.3 L1051.4 160.2 L1045.7 154.5Z M1051.4 186.3 L1051.4 160.2 L1057.1000000000001 165.89999999999998Z M1026 160.2 L1051.4 160.2 L1045.7 165.89999999999998Z M1077.2 160.2 L1051.4 160.2 L1057.1000000000001 154.5Z" fill="#000"/>
<path d="M1051.4 134.3 L1051.4 160.2 L1057.1000000000001 154.5Z M1051.4 186.3 L1051.4 160.2 L1045.7 165.89999999999998Z M1026 160.2 L1051.4 160.2 L1045.7 154.5Z M1077.2 160.2 L1051.4 160.2 L1057.1000000000001 165.89999999999998Z" fill="#fff"/>
<text x="1048.6" y="126.0" font-size="9.2" fill="#000" font-weight="bold" stroke="#cfcfcf" stroke-width="1.5" paint-order="stroke" stroke-linejoin="round" >P</text>
<path d="M1029.500 510 V785 A14.750 14.750 0 0 0 1059 785 V510 Z" fill="#7d7d7d" opacity="0.97"/>
<circle cx="1044.3" cy="495.600" r="33.800" fill="url(#navring)"/>
<circle cx="1044.3" cy="495.800" r="27.200" fill="url(#navwhite)"/>
<g fill="#585858"><path d="M1035.8999999999999 482.800 L1044.0 473.600 L1052.5 482.800 Q1044.3 480.200 1035.8999999999999 482.800Z"/><path d="M1035.8999999999999 509 L1044.0 518.500 L1052.5 509 Q1044.3 511.600 1035.8999999999999 509Z"/><path d="M1030.5 487.600 L1021.6999999999999 495.800 L1030.5 504 Q1027.8999999999999 495.800 1030.5 487.600Z"/><path d="M1057.7 487.600 L1066.0 495.800 L1057.7 504 Q1060.3 495.800 1057.7 487.600Z"/></g>
<path d="M1033.800 536.400 Q1044.3 539.400 1054.600 536.400 V553 A10.400 10.400 0 0 1 1033.800 553Z" fill="url(#navwhite2)"/>
<path d="M1037.8 550.300 L1044.3 544.300 L1050.8 550.300 M1048.1 546 V544.500" stroke="#444" stroke-width="1.500" fill="none"/><path d="M1039.8 549.800 L1044.3 545.800 L1048.8 549.800 V555.800 H1045.6 V552.300 H1043.0 V555.800 H1039.8Z" fill="#444"/>
<path d="M1033.800 599.500 V586.400 A10.400 10.400 0 0 1 1054.600 586.400 V599.500 Q1044.3 603.500 1033.800 599.500Z" fill="url(#navwhite2)"/>
<path d="M1039.0 588.500 H1049.6 M1044.3 583.200 V593.800" stroke="#222" stroke-width="1.800"/>
<path d="M1038.400 601 Q1044.3 604.500 1050 601 V772 Q1044.3 768 1038.400 772Z" fill="#3f4445"/>
<path d="M1044.3 603.7 L1047.8999999999999 607.5 L1044.3 611.3 L1040.7 607.5Z" fill="#4f5556"/>
<path d="M1044.3 611.9 L1047.8999999999999 615.7 L1044.3 619.5 L1040.7 615.7Z" fill="#4f5556"/>
<path d="M1044.3 620.1 L1047.8999999999999 623.9 L1044.3 627.7 L1040.7 623.9Z" fill="#4f5556"/>
<path d="M1044.3 628.3 L1047.8999999999999 632.1 L1044.3 635.9 L1040.7 632.1Z" fill="#4f5556"/>
<path d="M1044.3 636.5 L1047.8999999999999 640.3 L1044.3 644.1 L1040.7 640.3Z" fill="#4f5556"/>
<path d="M1044.3 644.7 L1047.8999999999999 648.5 L1044.3 652.3 L1040.7 648.5Z" fill="#4f5556"/>
<path d="M1044.3 652.9 L1047.8999999999999 656.7 L1044.3 660.5 L1040.7 656.7Z" fill="#4f5556"/>
<path d="M1044.3 661.1 L1047.8999999999999 664.9 L1044.3 668.7 L1040.7 664.9Z" fill="#4f5556"/>
<path d="M1044.3 669.3 L1047.8999999999999 673.1 L1044.3 676.9 L1040.7 673.1Z" fill="#4f5556"/>
<path d="M1044.3 677.5 L1047.8999999999999 681.3 L1044.3 685.1 L1040.7 681.3Z" fill="#4f5556"/>
<path d="M1044.3 685.7 L1047.8999999999999 689.5 L1044.3 693.3 L1040.7 689.5Z" fill="#4f5556"/>
<path d="M1044.3 693.9 L1047.8999999999999 697.7 L1044.3 701.5 L1040.7 697.7Z" fill="#4f5556"/>
<path d="M1044.3 702.1 L1047.8999999999999 705.9 L1044.3 709.7 L1040.7 705.9Z" fill="#4f5556"/>
<path d="M1044.3 710.3 L1047.8999999999999 714.1 L1044.3 717.9 L1040.7 714.1Z" fill="#4f5556"/>
<path d="M1044.3 718.5 L1047.8999999999999 722.3 L1044.3 726.1 L1040.7 722.3Z" fill="#4f5556"/>
<path d="M1044.3 726.7 L1047.8999999999999 730.5 L1044.3 734.3 L1040.7 730.5Z" fill="#4f5556"/>
<path d="M1044.3 734.9 L1047.8999999999999 738.7 L1044.3 742.5 L1040.7 738.7Z" fill="#4f5556"/>
<path d="M1044.3 743.1 L1047.8999999999999 746.9 L1044.3 750.7 L1040.7 746.9Z" fill="#4f5556"/>
<path d="M1044.3 751.3 L1047.8999999999999 755.1 L1044.3 758.9 L1040.7 755.1Z" fill="#4f5556"/>
<path d="M1044.3 759.5 L1047.8999999999999 763.3 L1044.3 767.1 L1040.7 763.3Z" fill="#4f5556"/>
<path d="M1044.3 767.7 L1047.8999999999999 771.5 L1044.3 775.3 L1040.7 771.5Z" fill="#4f5556"/>
<path d="M1033.800 771.500 Q1044.3 767.500 1054.600 771.500 V786.500 A10.400 10.400 0 0 1 1033.800 786.500Z" fill="url(#navwhite2)"/>
<path d="M1039.0 782.500 H1049.6" stroke="#222" stroke-width="1.800"/>
<circle cx="1044.3" cy="738.200" r="11.600" fill="#000" opacity="0.28"/>
<circle cx="1044.3" cy="736.600" r="11" fill="url(#knobg)"/>
<rect x="308" y="823" width="405.700" height="22.600" fill="#9c9c9c" opacity="0.97"/>
<rect x="312" y="836.300" width="389.300" height="5.200" fill="#000"/>
<rect x="409.300" y="837.300" width="97.300" height="3.200" fill="#fff"/>
<rect x="603.900" y="837.300" width="96.400" height="3.200" fill="#fff"/>
<text x="311.5" y="832.3" font-size="10.6" fill="#000" textLength="22.0" lengthAdjust="spacing" >0 km</text>
<text x="496.0" y="832.3" font-size="10.6" fill="#000" textLength="24.0" lengthAdjust="spacing" >6000</text>
<text x="679.0" y="832.3" font-size="10.6" fill="#000" textLength="28.5" lengthAdjust="spacing" >12000</text>
<text x="956.9" y="844.8" font-size="13.2" fill="#fff" textLength="127.6" lengthAdjust="spacing" font-weight="bold" stroke="#000" stroke-width="2.4" paint-order="stroke" stroke-linejoin="round" >NASA / Public Domain</text>
</svg>
</div>
</body></html>
